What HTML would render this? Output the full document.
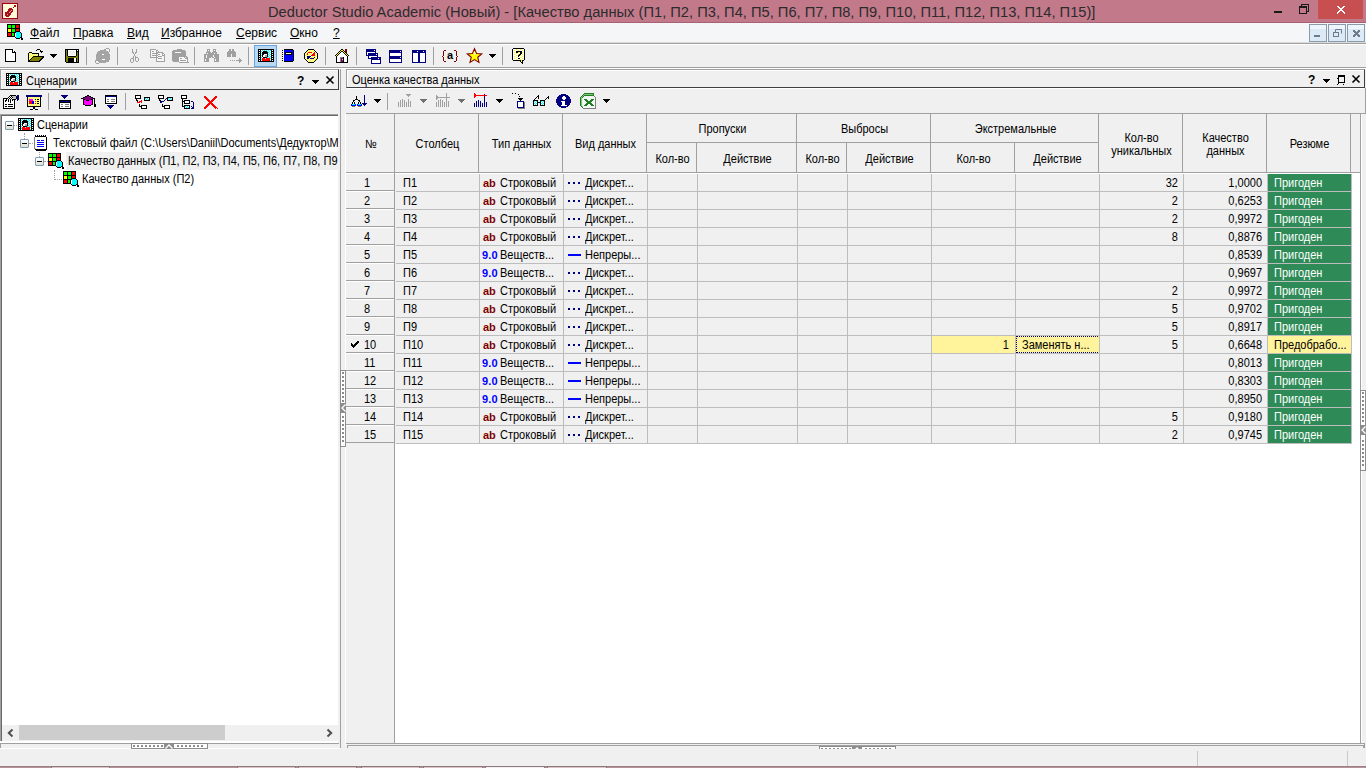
<!DOCTYPE html>
<html><head><meta charset="utf-8"><title>Deductor</title>
<style>
*{margin:0;padding:0;box-sizing:border-box}
html,body{width:1366px;height:768px;overflow:hidden;background:#f0f0f0;font-family:"Liberation Sans", sans-serif;font-size:11px;color:#000}
.a{position:absolute}
.t{position:absolute;white-space:nowrap;line-height:13px;font-size:12px;transform:scaleX(.9167);transform-origin:0 0}
.c{transform-origin:50% 0}
.r{transform-origin:100% 0}
.n{transform:none}
svg{position:absolute;overflow:visible}
</style></head><body>

<div class="a" style="left:0;top:0;width:1366px;height:22px;background:#c27a8b"></div>
<div class="a" style="left:0;top:22px;width:1366px;height:1px;background:#a86174"></div>
<svg style="left:1px;top:2px" width="18" height="18" shape-rendering="crispEdges"><rect x="1" y="1" width="16" height="1" fill="#a00010"/><rect x="1" y="2" width="1" height="1" fill="#a00010"/><rect x="2" y="2" width="14" height="1" fill="#fffbd6"/><rect x="16" y="2" width="1" height="1" fill="#a00010"/><rect x="1" y="3" width="1" height="1" fill="#a00010"/><rect x="2" y="3" width="11" height="1" fill="#fffbd6"/><rect x="13" y="3" width="2" height="1" fill="#a8101c"/><rect x="15" y="3" width="1" height="1" fill="#fffbd6"/><rect x="16" y="3" width="1" height="1" fill="#a00010"/><rect x="1" y="4" width="1" height="1" fill="#a00010"/><rect x="2" y="4" width="11" height="1" fill="#fffbd6"/><rect x="13" y="4" width="2" height="1" fill="#a8101c"/><rect x="15" y="4" width="1" height="1" fill="#fffbd6"/><rect x="16" y="4" width="1" height="1" fill="#a00010"/><rect x="1" y="5" width="1" height="1" fill="#a00010"/><rect x="2" y="5" width="10" height="1" fill="#fffbd6"/><rect x="12" y="5" width="1" height="1" fill="#a8101c"/><rect x="13" y="5" width="3" height="1" fill="#fffbd6"/><rect x="16" y="5" width="1" height="1" fill="#a00010"/><rect x="1" y="6" width="1" height="1" fill="#a00010"/><rect x="2" y="6" width="6" height="1" fill="#fffbd6"/><rect x="8" y="6" width="3" height="1" fill="#a8101c"/><rect x="11" y="6" width="5" height="1" fill="#fffbd6"/><rect x="16" y="6" width="1" height="1" fill="#a00010"/><rect x="1" y="7" width="1" height="1" fill="#a00010"/><rect x="2" y="7" width="5" height="1" fill="#fffbd6"/><rect x="7" y="7" width="5" height="1" fill="#a8101c"/><rect x="12" y="7" width="4" height="1" fill="#fffbd6"/><rect x="16" y="7" width="1" height="1" fill="#a00010"/><rect x="1" y="8" width="1" height="1" fill="#a00010"/><rect x="2" y="8" width="5" height="1" fill="#fffbd6"/><rect x="7" y="8" width="3" height="1" fill="#a8101c"/><rect x="10" y="8" width="1" height="1" fill="#e89898"/><rect x="11" y="8" width="1" height="1" fill="#a8101c"/><rect x="12" y="8" width="4" height="1" fill="#fffbd6"/><rect x="16" y="8" width="1" height="1" fill="#a00010"/><rect x="1" y="9" width="1" height="1" fill="#a00010"/><rect x="2" y="9" width="4" height="1" fill="#fffbd6"/><rect x="6" y="9" width="3" height="1" fill="#a8101c"/><rect x="9" y="9" width="1" height="1" fill="#e89898"/><rect x="10" y="9" width="2" height="1" fill="#a8101c"/><rect x="12" y="9" width="4" height="1" fill="#fffbd6"/><rect x="16" y="9" width="1" height="1" fill="#a00010"/><rect x="1" y="10" width="1" height="1" fill="#a00010"/><rect x="2" y="10" width="2" height="1" fill="#fffbd6"/><rect x="4" y="10" width="4" height="1" fill="#a8101c"/><rect x="8" y="10" width="1" height="1" fill="#e89898"/><rect x="9" y="10" width="2" height="1" fill="#a8101c"/><rect x="11" y="10" width="5" height="1" fill="#fffbd6"/><rect x="16" y="10" width="1" height="1" fill="#a00010"/><rect x="1" y="11" width="1" height="1" fill="#a00010"/><rect x="2" y="11" width="2" height="1" fill="#fffbd6"/><rect x="4" y="11" width="6" height="1" fill="#a8101c"/><rect x="10" y="11" width="6" height="1" fill="#fffbd6"/><rect x="16" y="11" width="1" height="1" fill="#a00010"/><rect x="1" y="12" width="1" height="1" fill="#a00010"/><rect x="2" y="12" width="2" height="1" fill="#fffbd6"/><rect x="4" y="12" width="2" height="1" fill="#a8101c"/><rect x="6" y="12" width="1" height="1" fill="#e89898"/><rect x="7" y="12" width="3" height="1" fill="#a8101c"/><rect x="10" y="12" width="6" height="1" fill="#fffbd6"/><rect x="16" y="12" width="1" height="1" fill="#a00010"/><rect x="1" y="13" width="1" height="1" fill="#a00010"/><rect x="2" y="13" width="2" height="1" fill="#fffbd6"/><rect x="4" y="13" width="5" height="1" fill="#a8101c"/><rect x="9" y="13" width="7" height="1" fill="#fffbd6"/><rect x="16" y="13" width="1" height="1" fill="#a00010"/><rect x="1" y="14" width="1" height="1" fill="#a00010"/><rect x="2" y="14" width="3" height="1" fill="#fffbd6"/><rect x="5" y="14" width="3" height="1" fill="#a8101c"/><rect x="8" y="14" width="8" height="1" fill="#fffbd6"/><rect x="16" y="14" width="1" height="1" fill="#a00010"/><rect x="1" y="15" width="1" height="1" fill="#a00010"/><rect x="2" y="15" width="14" height="1" fill="#fffbd6"/><rect x="16" y="15" width="1" height="1" fill="#a00010"/><rect x="1" y="16" width="16" height="1" fill="#a00010"/></svg>
<div class="t n" style="left:268px;top:4px;font-size:14.7px;line-height:17px;color:#2b2b2b">Deductor Studio Academic (Новый) - [Качество данных (П1, П2, П3, П4, П5, П6, П7, П8, П9, П10, П11, П12, П13, П14, П15)]</div>
<div class="a" style="left:1274px;top:11px;width:8px;height:2px;background:#1a1a1a"></div>
<svg style="left:1299px;top:4px" width="10" height="10" shape-rendering="crispEdges"><rect x="2" y="0" width="8" height="1" fill="#1a1a1a"/><rect x="2" y="1" width="1" height="1" fill="#1a1a1a"/><rect x="9" y="1" width="1" height="1" fill="#1a1a1a"/><rect x="0" y="2" width="8" height="1" fill="#1a1a1a"/><rect x="9" y="2" width="1" height="1" fill="#1a1a1a"/><rect x="0" y="3" width="8" height="1" fill="#1a1a1a"/><rect x="9" y="3" width="1" height="1" fill="#1a1a1a"/><rect x="0" y="4" width="1" height="1" fill="#1a1a1a"/><rect x="7" y="4" width="1" height="1" fill="#1a1a1a"/><rect x="9" y="4" width="1" height="1" fill="#1a1a1a"/><rect x="0" y="5" width="1" height="1" fill="#1a1a1a"/><rect x="7" y="5" width="1" height="1" fill="#1a1a1a"/><rect x="9" y="5" width="1" height="1" fill="#1a1a1a"/><rect x="0" y="6" width="1" height="1" fill="#1a1a1a"/><rect x="7" y="6" width="1" height="1" fill="#1a1a1a"/><rect x="9" y="6" width="1" height="1" fill="#1a1a1a"/><rect x="0" y="7" width="1" height="1" fill="#1a1a1a"/><rect x="7" y="7" width="3" height="1" fill="#1a1a1a"/><rect x="0" y="8" width="1" height="1" fill="#1a1a1a"/><rect x="7" y="8" width="1" height="1" fill="#1a1a1a"/><rect x="0" y="9" width="8" height="1" fill="#1a1a1a"/></svg>
<div class="a" style="left:1318px;top:0;width:45px;height:19px;background:#c74f50"></div>
<svg style="left:1337px;top:6px" width="8" height="8" shape-rendering="crispEdges"><rect x="0" y="0" width="2" height="1" fill="#ffffff"/><rect x="6" y="0" width="2" height="1" fill="#ffffff"/><rect x="1" y="1" width="2" height="1" fill="#ffffff"/><rect x="5" y="1" width="2" height="1" fill="#ffffff"/><rect x="2" y="2" width="4" height="1" fill="#ffffff"/><rect x="3" y="3" width="2" height="1" fill="#ffffff"/><rect x="2" y="4" width="4" height="1" fill="#ffffff"/><rect x="1" y="5" width="2" height="1" fill="#ffffff"/><rect x="5" y="5" width="2" height="1" fill="#ffffff"/><rect x="0" y="6" width="2" height="1" fill="#ffffff"/><rect x="6" y="6" width="2" height="1" fill="#ffffff"/><rect x="0" y="7" width="1" height="1" fill="#ffffff"/><rect x="7" y="7" width="1" height="1" fill="#ffffff"/></svg>
<div class="a" style="left:0;top:23px;width:1366px;height:19px;background:#f5f6f7"></div>
<div class="a" style="left:0;top:42px;width:1366px;height:1px;background:#dcdcdc"></div>
<div class="a" style="left:0;top:43px;width:1366px;height:1px;background:#a0a0a0"></div>
<div class="a" style="left:0;top:44px;width:1366px;height:1px;background:#fff"></div>
<svg style="left:7px;top:24px" width="16" height="16" shape-rendering="crispEdges"><rect x="0" y="0" width="13" height="1" fill="#000"/><rect x="0" y="1" width="1" height="1" fill="#000"/><rect x="1" y="1" width="3" height="1" fill="#00ff00"/><rect x="4" y="1" width="1" height="1" fill="#000"/><rect x="5" y="1" width="3" height="1" fill="#00ff00"/><rect x="8" y="1" width="1" height="1" fill="#000"/><rect x="9" y="1" width="3" height="1" fill="#ff0000"/><rect x="12" y="1" width="1" height="1" fill="#000"/><rect x="0" y="2" width="1" height="1" fill="#000"/><rect x="1" y="2" width="3" height="1" fill="#00ff00"/><rect x="4" y="2" width="1" height="1" fill="#000"/><rect x="5" y="2" width="3" height="1" fill="#00ff00"/><rect x="8" y="2" width="1" height="1" fill="#000"/><rect x="9" y="2" width="3" height="1" fill="#ff0000"/><rect x="12" y="2" width="1" height="1" fill="#000"/><rect x="0" y="3" width="1" height="1" fill="#000"/><rect x="1" y="3" width="3" height="1" fill="#00ff00"/><rect x="4" y="3" width="1" height="1" fill="#000"/><rect x="5" y="3" width="3" height="1" fill="#00ff00"/><rect x="8" y="3" width="1" height="1" fill="#000"/><rect x="9" y="3" width="3" height="1" fill="#ff0000"/><rect x="12" y="3" width="1" height="1" fill="#000"/><rect x="0" y="4" width="13" height="1" fill="#000"/><rect x="0" y="5" width="1" height="1" fill="#000"/><rect x="1" y="5" width="3" height="1" fill="#ffff00"/><rect x="4" y="5" width="1" height="1" fill="#000"/><rect x="5" y="5" width="3" height="1" fill="#00ff00"/><rect x="8" y="5" width="1" height="1" fill="#000"/><rect x="9" y="5" width="3" height="1" fill="#ff0000"/><rect x="12" y="5" width="1" height="1" fill="#000"/><rect x="0" y="6" width="1" height="1" fill="#000"/><rect x="1" y="6" width="3" height="1" fill="#ffff00"/><rect x="4" y="6" width="1" height="1" fill="#000"/><rect x="5" y="6" width="3" height="1" fill="#00ff00"/><rect x="8" y="6" width="1" height="1" fill="#000"/><rect x="9" y="6" width="3" height="1" fill="#ff0000"/><rect x="12" y="6" width="1" height="1" fill="#000"/><rect x="0" y="7" width="1" height="1" fill="#000"/><rect x="1" y="7" width="3" height="1" fill="#ffff00"/><rect x="4" y="7" width="1" height="1" fill="#000"/><rect x="5" y="7" width="3" height="1" fill="#00ff00"/><rect x="8" y="7" width="5" height="1" fill="#000"/><rect x="0" y="8" width="9" height="1" fill="#000"/><rect x="9" y="8" width="4" height="1" fill="#00ffff"/><rect x="13" y="8" width="1" height="1" fill="#000"/><rect x="0" y="9" width="1" height="1" fill="#000"/><rect x="1" y="9" width="3" height="1" fill="#ff0000"/><rect x="4" y="9" width="1" height="1" fill="#000"/><rect x="5" y="9" width="2" height="1" fill="#00ff00"/><rect x="7" y="9" width="1" height="1" fill="#000"/><rect x="8" y="9" width="1" height="1" fill="#fff"/><rect x="9" y="9" width="5" height="1" fill="#00ffff"/><rect x="14" y="9" width="1" height="1" fill="#000"/><rect x="0" y="10" width="1" height="1" fill="#000"/><rect x="1" y="10" width="3" height="1" fill="#ff0000"/><rect x="4" y="10" width="1" height="1" fill="#000"/><rect x="5" y="10" width="2" height="1" fill="#00ff00"/><rect x="7" y="10" width="1" height="1" fill="#000"/><rect x="8" y="10" width="1" height="1" fill="#fff"/><rect x="9" y="10" width="5" height="1" fill="#00ffff"/><rect x="14" y="10" width="1" height="1" fill="#000"/><rect x="0" y="11" width="1" height="1" fill="#000"/><rect x="1" y="11" width="3" height="1" fill="#ff0000"/><rect x="4" y="11" width="1" height="1" fill="#000"/><rect x="5" y="11" width="2" height="1" fill="#00ff00"/><rect x="7" y="11" width="1" height="1" fill="#000"/><rect x="8" y="11" width="1" height="1" fill="#fff"/><rect x="9" y="11" width="5" height="1" fill="#00ffff"/><rect x="14" y="11" width="1" height="1" fill="#000"/><rect x="0" y="12" width="8" height="1" fill="#000"/><rect x="8" y="12" width="1" height="1" fill="#fff"/><rect x="9" y="12" width="5" height="1" fill="#00ffff"/><rect x="14" y="12" width="1" height="1" fill="#000"/><rect x="8" y="13" width="1" height="1" fill="#000"/><rect x="9" y="13" width="4" height="1" fill="#00ffff"/><rect x="13" y="13" width="2" height="1" fill="#000"/><rect x="9" y="14" width="4" height="1" fill="#000"/><rect x="14" y="14" width="2" height="1" fill="#000"/><rect x="14" y="15" width="2" height="1" fill="#000"/></svg>
<div class="t n" style="left:30px;top:26px;font-size:12px;line-height:14px;color:#000"><span style="text-decoration:underline">Ф</span>айл</div>
<div class="t n" style="left:73px;top:26px;font-size:12px;line-height:14px;color:#000"><span style="text-decoration:underline">П</span>равка</div>
<div class="t n" style="left:127px;top:26px;font-size:12px;line-height:14px;color:#000"><span style="text-decoration:underline">В</span>ид</div>
<div class="t n" style="left:161px;top:26px;font-size:12px;line-height:14px;color:#000"><span style="text-decoration:underline">И</span>збранное</div>
<div class="t n" style="left:236px;top:26px;font-size:12px;line-height:14px;color:#000"><span style="text-decoration:underline">С</span>ервис</div>
<div class="t n" style="left:290px;top:26px;font-size:12px;line-height:14px;color:#000"><span style="text-decoration:underline">О</span>кно</div>
<div class="t n" style="left:333px;top:26px;font-size:12px;line-height:14px;color:#000"><span style="text-decoration:underline">?</span></div>
<div class="a" style="left:1309px;top:24px;width:18px;height:18px;border:1px solid #8a9aab;background:linear-gradient(#eef5fc 0,#eef5fc 4px,#dce9f6 4px)"></div>
<div class="a" style="left:1328px;top:24px;width:18px;height:18px;border:1px solid #8a9aab;background:linear-gradient(#eef5fc 0,#eef5fc 4px,#dce9f6 4px)"></div>
<div class="a" style="left:1347px;top:24px;width:18px;height:18px;border:1px solid #8a9aab;background:linear-gradient(#eef5fc 0,#eef5fc 4px,#dce9f6 4px)"></div>
<div class="a" style="left:1314px;top:35px;width:6px;height:2px;background:#6d7b8b"></div>
<svg style="left:1333px;top:29px" width="9" height="8"><rect x="0.5" y="3.5" width="5" height="4" fill="none" stroke="#6d7b8b"/><path d="M2.5 3 V0.5 H8.5 V4.5" fill="none" stroke="#6d7b8b"/></svg>
<svg style="left:1353px;top:30px" width="7" height="7" shape-rendering="crispEdges"><rect x="0" y="0" width="2" height="1" fill="#6d7b8b"/><rect x="5" y="0" width="2" height="1" fill="#6d7b8b"/><rect x="0" y="1" width="3" height="1" fill="#6d7b8b"/><rect x="4" y="1" width="3" height="1" fill="#6d7b8b"/><rect x="1" y="2" width="5" height="1" fill="#6d7b8b"/><rect x="2" y="3" width="3" height="1" fill="#6d7b8b"/><rect x="1" y="4" width="5" height="1" fill="#6d7b8b"/><rect x="0" y="5" width="3" height="1" fill="#6d7b8b"/><rect x="4" y="5" width="3" height="1" fill="#6d7b8b"/><rect x="0" y="6" width="2" height="1" fill="#6d7b8b"/><rect x="5" y="6" width="2" height="1" fill="#6d7b8b"/></svg>
<div class="a" style="left:0;top:67px;width:1366px;height:1px;background:#a0a0a0"></div>
<div class="a" style="left:0;top:68px;width:1366px;height:1px;background:#fff"></div>
<svg style="left:5px;top:49px" width="11" height="13" shape-rendering="crispEdges"><rect x="0" y="0" width="8" height="1" fill="#000"/><rect x="0" y="1" width="1" height="1" fill="#000"/><rect x="1" y="1" width="6" height="1" fill="#fff"/><rect x="7" y="1" width="1" height="1" fill="#000"/><rect x="8" y="1" width="1" height="1" fill="#fff"/><rect x="0" y="2" width="1" height="1" fill="#000"/><rect x="1" y="2" width="6" height="1" fill="#fff"/><rect x="7" y="2" width="1" height="1" fill="#000"/><rect x="8" y="2" width="1" height="1" fill="#fff"/><rect x="9" y="2" width="1" height="1" fill="#000"/><rect x="0" y="3" width="1" height="1" fill="#000"/><rect x="1" y="3" width="6" height="1" fill="#fff"/><rect x="7" y="3" width="4" height="1" fill="#000"/><rect x="0" y="4" width="1" height="1" fill="#000"/><rect x="1" y="4" width="9" height="1" fill="#fff"/><rect x="10" y="4" width="1" height="1" fill="#000"/><rect x="0" y="5" width="1" height="1" fill="#000"/><rect x="1" y="5" width="9" height="1" fill="#fff"/><rect x="10" y="5" width="1" height="1" fill="#000"/><rect x="0" y="6" width="1" height="1" fill="#000"/><rect x="1" y="6" width="9" height="1" fill="#fff"/><rect x="10" y="6" width="1" height="1" fill="#000"/><rect x="0" y="7" width="1" height="1" fill="#000"/><rect x="1" y="7" width="9" height="1" fill="#fff"/><rect x="10" y="7" width="1" height="1" fill="#000"/><rect x="0" y="8" width="1" height="1" fill="#000"/><rect x="1" y="8" width="9" height="1" fill="#fff"/><rect x="10" y="8" width="1" height="1" fill="#000"/><rect x="0" y="9" width="1" height="1" fill="#000"/><rect x="1" y="9" width="9" height="1" fill="#fff"/><rect x="10" y="9" width="1" height="1" fill="#000"/><rect x="0" y="10" width="1" height="1" fill="#000"/><rect x="1" y="10" width="9" height="1" fill="#fff"/><rect x="10" y="10" width="1" height="1" fill="#000"/><rect x="0" y="11" width="1" height="1" fill="#000"/><rect x="1" y="11" width="9" height="1" fill="#fff"/><rect x="10" y="11" width="1" height="1" fill="#000"/><rect x="0" y="12" width="11" height="1" fill="#000"/></svg>
<svg style="left:28px;top:49px" width="16" height="13" shape-rendering="crispEdges"><rect x="9" y="0" width="3" height="1" fill="#000"/><rect x="8" y="1" width="1" height="1" fill="#000"/><rect x="12" y="1" width="1" height="1" fill="#000"/><rect x="12" y="2" width="3" height="1" fill="#000"/><rect x="1" y="3" width="3" height="1" fill="#000"/><rect x="13" y="3" width="1" height="1" fill="#000"/><rect x="0" y="4" width="1" height="1" fill="#000"/><rect x="1" y="4" width="1" height="1" fill="#ffff00"/><rect x="2" y="4" width="1" height="1" fill="#fff"/><rect x="3" y="4" width="1" height="1" fill="#ffff00"/><rect x="4" y="4" width="7" height="1" fill="#000"/><rect x="0" y="5" width="1" height="1" fill="#000"/><rect x="1" y="5" width="1" height="1" fill="#fff"/><rect x="2" y="5" width="1" height="1" fill="#ffff00"/><rect x="3" y="5" width="1" height="1" fill="#fff"/><rect x="4" y="5" width="1" height="1" fill="#ffff00"/><rect x="5" y="5" width="1" height="1" fill="#fff"/><rect x="6" y="5" width="1" height="1" fill="#ffff00"/><rect x="7" y="5" width="1" height="1" fill="#fff"/><rect x="8" y="5" width="1" height="1" fill="#ffff00"/><rect x="9" y="5" width="1" height="1" fill="#fff"/><rect x="10" y="5" width="1" height="1" fill="#000"/><rect x="0" y="6" width="1" height="1" fill="#000"/><rect x="1" y="6" width="1" height="1" fill="#ffff00"/><rect x="2" y="6" width="1" height="1" fill="#fff"/><rect x="3" y="6" width="1" height="1" fill="#ffff00"/><rect x="4" y="6" width="1" height="1" fill="#fff"/><rect x="5" y="6" width="1" height="1" fill="#ffff00"/><rect x="6" y="6" width="1" height="1" fill="#fff"/><rect x="7" y="6" width="1" height="1" fill="#ffff00"/><rect x="8" y="6" width="1" height="1" fill="#fff"/><rect x="9" y="6" width="1" height="1" fill="#ffff00"/><rect x="10" y="6" width="1" height="1" fill="#000"/><rect x="0" y="7" width="1" height="1" fill="#000"/><rect x="1" y="7" width="1" height="1" fill="#fff"/><rect x="2" y="7" width="1" height="1" fill="#ffff00"/><rect x="3" y="7" width="1" height="1" fill="#fff"/><rect x="4" y="7" width="1" height="1" fill="#ffff00"/><rect x="5" y="7" width="11" height="1" fill="#000"/><rect x="0" y="8" width="1" height="1" fill="#000"/><rect x="1" y="8" width="1" height="1" fill="#ffff00"/><rect x="2" y="8" width="1" height="1" fill="#fff"/><rect x="3" y="8" width="1" height="1" fill="#ffff00"/><rect x="4" y="8" width="1" height="1" fill="#000"/><rect x="5" y="8" width="9" height="1" fill="#808000"/><rect x="14" y="8" width="2" height="1" fill="#000"/><rect x="0" y="9" width="1" height="1" fill="#000"/><rect x="1" y="9" width="1" height="1" fill="#fff"/><rect x="2" y="9" width="1" height="1" fill="#ffff00"/><rect x="3" y="9" width="1" height="1" fill="#000"/><rect x="4" y="9" width="9" height="1" fill="#808000"/><rect x="13" y="9" width="2" height="1" fill="#000"/><rect x="0" y="10" width="1" height="1" fill="#000"/><rect x="1" y="10" width="1" height="1" fill="#ffff00"/><rect x="2" y="10" width="1" height="1" fill="#000"/><rect x="3" y="10" width="9" height="1" fill="#808000"/><rect x="12" y="10" width="2" height="1" fill="#000"/><rect x="0" y="11" width="2" height="1" fill="#000"/><rect x="2" y="11" width="9" height="1" fill="#808000"/><rect x="11" y="11" width="2" height="1" fill="#000"/><rect x="0" y="12" width="12" height="1" fill="#000"/></svg>
<svg style="left:50px;top:54px" width="7" height="4" shape-rendering="crispEdges"><rect x="0" y="0" width="7" height="1" fill="#000"/><rect x="1" y="1" width="5" height="1" fill="#000"/><rect x="2" y="2" width="3" height="1" fill="#000"/><rect x="3" y="3" width="1" height="1" fill="#000"/></svg>
<svg style="left:65px;top:49px" width="14" height="14" shape-rendering="crispEdges"><rect x="0" y="0" width="14" height="1" fill="#000"/><rect x="0" y="1" width="1" height="1" fill="#000"/><rect x="1" y="1" width="1" height="1" fill="#808000"/><rect x="2" y="1" width="1" height="1" fill="#000"/><rect x="3" y="1" width="8" height="1" fill="#fff"/><rect x="11" y="1" width="1" height="1" fill="#000"/><rect x="12" y="1" width="1" height="1" fill="#fff"/><rect x="13" y="1" width="1" height="1" fill="#000"/><rect x="0" y="2" width="1" height="1" fill="#000"/><rect x="1" y="2" width="1" height="1" fill="#808000"/><rect x="2" y="2" width="1" height="1" fill="#000"/><rect x="3" y="2" width="1" height="1" fill="#fff"/><rect x="4" y="2" width="6" height="1" fill="#f0f0f0"/><rect x="10" y="2" width="1" height="1" fill="#fff"/><rect x="11" y="2" width="3" height="1" fill="#000"/><rect x="0" y="3" width="1" height="1" fill="#000"/><rect x="1" y="3" width="1" height="1" fill="#808000"/><rect x="2" y="3" width="1" height="1" fill="#000"/><rect x="3" y="3" width="1" height="1" fill="#fff"/><rect x="4" y="3" width="6" height="1" fill="#f0f0f0"/><rect x="10" y="3" width="1" height="1" fill="#fff"/><rect x="11" y="3" width="1" height="1" fill="#000"/><rect x="12" y="3" width="1" height="1" fill="#808000"/><rect x="13" y="3" width="1" height="1" fill="#000"/><rect x="0" y="4" width="1" height="1" fill="#000"/><rect x="1" y="4" width="1" height="1" fill="#808000"/><rect x="2" y="4" width="1" height="1" fill="#000"/><rect x="3" y="4" width="1" height="1" fill="#fff"/><rect x="4" y="4" width="6" height="1" fill="#f0f0f0"/><rect x="10" y="4" width="1" height="1" fill="#fff"/><rect x="11" y="4" width="1" height="1" fill="#000"/><rect x="12" y="4" width="1" height="1" fill="#808000"/><rect x="13" y="4" width="1" height="1" fill="#000"/><rect x="0" y="5" width="1" height="1" fill="#000"/><rect x="1" y="5" width="1" height="1" fill="#808000"/><rect x="2" y="5" width="1" height="1" fill="#000"/><rect x="3" y="5" width="1" height="1" fill="#fff"/><rect x="4" y="5" width="6" height="1" fill="#f0f0f0"/><rect x="10" y="5" width="1" height="1" fill="#fff"/><rect x="11" y="5" width="1" height="1" fill="#000"/><rect x="12" y="5" width="1" height="1" fill="#808000"/><rect x="13" y="5" width="1" height="1" fill="#000"/><rect x="0" y="6" width="1" height="1" fill="#000"/><rect x="1" y="6" width="1" height="1" fill="#808000"/><rect x="2" y="6" width="1" height="1" fill="#000"/><rect x="3" y="6" width="8" height="1" fill="#fff"/><rect x="11" y="6" width="1" height="1" fill="#000"/><rect x="12" y="6" width="1" height="1" fill="#808000"/><rect x="13" y="6" width="1" height="1" fill="#000"/><rect x="0" y="7" width="1" height="1" fill="#000"/><rect x="1" y="7" width="2" height="1" fill="#808000"/><rect x="3" y="7" width="8" height="1" fill="#000"/><rect x="11" y="7" width="2" height="1" fill="#808000"/><rect x="13" y="7" width="1" height="1" fill="#000"/><rect x="0" y="8" width="1" height="1" fill="#000"/><rect x="1" y="8" width="12" height="1" fill="#808000"/><rect x="13" y="8" width="1" height="1" fill="#000"/><rect x="0" y="9" width="1" height="1" fill="#000"/><rect x="1" y="9" width="2" height="1" fill="#808000"/><rect x="3" y="9" width="6" height="1" fill="#000"/><rect x="9" y="9" width="2" height="1" fill="#fff"/><rect x="11" y="9" width="1" height="1" fill="#000"/><rect x="12" y="9" width="1" height="1" fill="#808000"/><rect x="13" y="9" width="1" height="1" fill="#000"/><rect x="0" y="10" width="1" height="1" fill="#000"/><rect x="1" y="10" width="2" height="1" fill="#808000"/><rect x="3" y="10" width="6" height="1" fill="#000"/><rect x="9" y="10" width="2" height="1" fill="#fff"/><rect x="11" y="10" width="1" height="1" fill="#000"/><rect x="12" y="10" width="1" height="1" fill="#808000"/><rect x="13" y="10" width="1" height="1" fill="#000"/><rect x="0" y="11" width="1" height="1" fill="#000"/><rect x="1" y="11" width="2" height="1" fill="#808000"/><rect x="3" y="11" width="6" height="1" fill="#000"/><rect x="9" y="11" width="2" height="1" fill="#fff"/><rect x="11" y="11" width="1" height="1" fill="#000"/><rect x="12" y="11" width="1" height="1" fill="#808000"/><rect x="13" y="11" width="1" height="1" fill="#000"/><rect x="0" y="12" width="1" height="1" fill="#000"/><rect x="1" y="12" width="2" height="1" fill="#808000"/><rect x="3" y="12" width="6" height="1" fill="#000"/><rect x="9" y="12" width="2" height="1" fill="#fff"/><rect x="11" y="12" width="1" height="1" fill="#000"/><rect x="12" y="12" width="1" height="1" fill="#808000"/><rect x="13" y="12" width="1" height="1" fill="#000"/><rect x="1" y="13" width="13" height="1" fill="#000"/></svg>
<div class="a" style="left:86px;top:47px;width:1px;height:18px;background:#a0a0a0"></div>
<svg style="left:92px;top:46px" width="20" height="19" shape-rendering="crispEdges"><rect x="14" y="2" width="3" height="1" fill="#a4a4a4"/><rect x="12" y="3" width="2" height="1" fill="#a4a4a4"/><rect x="17" y="3" width="1" height="1" fill="#a4a4a4"/><rect x="8" y="4" width="6" height="1" fill="#a4a4a4"/><rect x="17" y="4" width="1" height="1" fill="#a4a4a4"/><rect x="6" y="5" width="10" height="1" fill="#a4a4a4"/><rect x="17" y="5" width="1" height="1" fill="#a4a4a4"/><rect x="5" y="6" width="12" height="1" fill="#a4a4a4"/><rect x="5" y="7" width="12" height="1" fill="#a4a4a4"/><rect x="4" y="8" width="6" height="1" fill="#a4a4a4"/><rect x="10" y="8" width="2" height="1" fill="#ffffff"/><rect x="12" y="8" width="6" height="1" fill="#a4a4a4"/><rect x="4" y="9" width="14" height="1" fill="#a4a4a4"/><rect x="4" y="10" width="14" height="1" fill="#a4a4a4"/><rect x="4" y="11" width="14" height="1" fill="#a4a4a4"/><rect x="4" y="12" width="14" height="1" fill="#a4a4a4"/><rect x="4" y="13" width="6" height="1" fill="#a4a4a4"/><rect x="10" y="13" width="3" height="1" fill="#ffffff"/><rect x="13" y="13" width="5" height="1" fill="#a4a4a4"/><rect x="3" y="14" width="14" height="1" fill="#a4a4a4"/><rect x="3" y="15" width="1" height="1" fill="#a4a4a4"/><rect x="6" y="15" width="11" height="1" fill="#a4a4a4"/><rect x="3" y="16" width="1" height="1" fill="#a4a4a4"/><rect x="7" y="16" width="7" height="1" fill="#a4a4a4"/><rect x="4" y="17" width="3" height="1" fill="#a4a4a4"/></svg>
<div class="a" style="left:117px;top:47px;width:1px;height:18px;background:#a0a0a0"></div>
<svg style="left:130px;top:49px" width="10" height="14" shape-rendering="crispEdges"><rect x="2" y="0" width="1" height="1" fill="#a0a0a0"/><rect x="6" y="0" width="1" height="1" fill="#a0a0a0"/><rect x="2" y="1" width="1" height="1" fill="#a0a0a0"/><rect x="6" y="1" width="1" height="1" fill="#a0a0a0"/><rect x="2" y="2" width="1" height="1" fill="#a0a0a0"/><rect x="6" y="2" width="1" height="1" fill="#a0a0a0"/><rect x="2" y="3" width="2" height="1" fill="#a0a0a0"/><rect x="5" y="3" width="2" height="1" fill="#a0a0a0"/><rect x="3" y="4" width="1" height="1" fill="#a0a0a0"/><rect x="5" y="4" width="1" height="1" fill="#a0a0a0"/><rect x="4" y="5" width="1" height="1" fill="#a0a0a0"/><rect x="4" y="6" width="1" height="1" fill="#a0a0a0"/><rect x="3" y="7" width="1" height="1" fill="#a0a0a0"/><rect x="5" y="7" width="1" height="1" fill="#a0a0a0"/><rect x="3" y="8" width="1" height="1" fill="#a0a0a0"/><rect x="5" y="8" width="3" height="1" fill="#a0a0a0"/><rect x="1" y="9" width="3" height="1" fill="#a0a0a0"/><rect x="5" y="9" width="1" height="1" fill="#a0a0a0"/><rect x="8" y="9" width="1" height="1" fill="#a0a0a0"/><rect x="0" y="10" width="1" height="1" fill="#a0a0a0"/><rect x="3" y="10" width="1" height="1" fill="#a0a0a0"/><rect x="5" y="10" width="1" height="1" fill="#a0a0a0"/><rect x="8" y="10" width="1" height="1" fill="#a0a0a0"/><rect x="0" y="11" width="1" height="1" fill="#a0a0a0"/><rect x="3" y="11" width="1" height="1" fill="#a0a0a0"/><rect x="5" y="11" width="1" height="1" fill="#a0a0a0"/><rect x="8" y="11" width="1" height="1" fill="#a0a0a0"/><rect x="0" y="12" width="1" height="1" fill="#a0a0a0"/><rect x="3" y="12" width="1" height="1" fill="#a0a0a0"/><rect x="6" y="12" width="2" height="1" fill="#a0a0a0"/><rect x="1" y="13" width="2" height="1" fill="#a0a0a0"/></svg>
<svg style="left:150px;top:49px" width="15" height="13" shape-rendering="crispEdges"><rect x="0" y="0" width="6" height="1" fill="#a0a0a0"/><rect x="0" y="1" width="1" height="1" fill="#a0a0a0"/><rect x="1" y="1" width="5" height="1" fill="#f8f8f8"/><rect x="6" y="1" width="2" height="1" fill="#a0a0a0"/><rect x="0" y="2" width="1" height="1" fill="#a0a0a0"/><rect x="1" y="2" width="1" height="1" fill="#f8f8f8"/><rect x="2" y="2" width="2" height="1" fill="#a0a0a0"/><rect x="4" y="2" width="2" height="1" fill="#f8f8f8"/><rect x="6" y="2" width="1" height="1" fill="#a0a0a0"/><rect x="7" y="2" width="1" height="1" fill="#f8f8f8"/><rect x="8" y="2" width="1" height="1" fill="#a0a0a0"/><rect x="0" y="3" width="1" height="1" fill="#a0a0a0"/><rect x="1" y="3" width="5" height="1" fill="#f8f8f8"/><rect x="6" y="3" width="7" height="1" fill="#a0a0a0"/><rect x="0" y="4" width="1" height="1" fill="#a0a0a0"/><rect x="1" y="4" width="1" height="1" fill="#f8f8f8"/><rect x="2" y="4" width="6" height="1" fill="#a0a0a0"/><rect x="8" y="4" width="4" height="1" fill="#f8f8f8"/><rect x="12" y="4" width="2" height="1" fill="#a0a0a0"/><rect x="0" y="5" width="1" height="1" fill="#a0a0a0"/><rect x="1" y="5" width="5" height="1" fill="#f8f8f8"/><rect x="6" y="5" width="1" height="1" fill="#a0a0a0"/><rect x="7" y="5" width="1" height="1" fill="#f8f8f8"/><rect x="8" y="5" width="2" height="1" fill="#a0a0a0"/><rect x="10" y="5" width="2" height="1" fill="#f8f8f8"/><rect x="12" y="5" width="1" height="1" fill="#a0a0a0"/><rect x="13" y="5" width="1" height="1" fill="#f8f8f8"/><rect x="14" y="5" width="1" height="1" fill="#a0a0a0"/><rect x="0" y="6" width="1" height="1" fill="#a0a0a0"/><rect x="1" y="6" width="1" height="1" fill="#f8f8f8"/><rect x="2" y="6" width="6" height="1" fill="#a0a0a0"/><rect x="8" y="6" width="4" height="1" fill="#f8f8f8"/><rect x="12" y="6" width="3" height="1" fill="#a0a0a0"/><rect x="0" y="7" width="1" height="1" fill="#a0a0a0"/><rect x="1" y="7" width="5" height="1" fill="#f8f8f8"/><rect x="6" y="7" width="1" height="1" fill="#a0a0a0"/><rect x="7" y="7" width="1" height="1" fill="#f8f8f8"/><rect x="8" y="7" width="4" height="1" fill="#a0a0a0"/><rect x="12" y="7" width="2" height="1" fill="#f8f8f8"/><rect x="14" y="7" width="1" height="1" fill="#a0a0a0"/><rect x="0" y="8" width="8" height="1" fill="#a0a0a0"/><rect x="8" y="8" width="6" height="1" fill="#f8f8f8"/><rect x="14" y="8" width="1" height="1" fill="#a0a0a0"/><rect x="6" y="9" width="1" height="1" fill="#a0a0a0"/><rect x="7" y="9" width="1" height="1" fill="#f8f8f8"/><rect x="8" y="9" width="4" height="1" fill="#a0a0a0"/><rect x="12" y="9" width="2" height="1" fill="#f8f8f8"/><rect x="14" y="9" width="1" height="1" fill="#a0a0a0"/><rect x="6" y="10" width="1" height="1" fill="#a0a0a0"/><rect x="7" y="10" width="7" height="1" fill="#f8f8f8"/><rect x="14" y="10" width="1" height="1" fill="#a0a0a0"/><rect x="6" y="11" width="1" height="1" fill="#a0a0a0"/><rect x="7" y="11" width="7" height="1" fill="#f8f8f8"/><rect x="14" y="11" width="1" height="1" fill="#a0a0a0"/><rect x="6" y="12" width="9" height="1" fill="#a0a0a0"/></svg>
<svg style="left:172px;top:49px" width="16" height="14" shape-rendering="crispEdges"><rect x="5" y="0" width="5" height="1" fill="#a0a0a0"/><rect x="1" y="1" width="12" height="1" fill="#a0a0a0"/><rect x="0" y="2" width="14" height="1" fill="#a0a0a0"/><rect x="0" y="3" width="3" height="1" fill="#a0a0a0"/><rect x="3" y="3" width="6" height="1" fill="#f8f8f8"/><rect x="9" y="3" width="5" height="1" fill="#a0a0a0"/><rect x="0" y="4" width="14" height="1" fill="#a0a0a0"/><rect x="0" y="5" width="14" height="1" fill="#a0a0a0"/><rect x="0" y="6" width="14" height="1" fill="#a0a0a0"/><rect x="0" y="7" width="15" height="1" fill="#a0a0a0"/><rect x="0" y="8" width="7" height="1" fill="#a0a0a0"/><rect x="7" y="8" width="5" height="1" fill="#f8f8f8"/><rect x="12" y="8" width="1" height="1" fill="#a0a0a0"/><rect x="13" y="8" width="1" height="1" fill="#f8f8f8"/><rect x="14" y="8" width="2" height="1" fill="#a0a0a0"/><rect x="0" y="9" width="7" height="1" fill="#a0a0a0"/><rect x="7" y="9" width="1" height="1" fill="#f8f8f8"/><rect x="8" y="9" width="2" height="1" fill="#a0a0a0"/><rect x="10" y="9" width="3" height="1" fill="#f8f8f8"/><rect x="13" y="9" width="3" height="1" fill="#a0a0a0"/><rect x="0" y="10" width="7" height="1" fill="#a0a0a0"/><rect x="7" y="10" width="8" height="1" fill="#f8f8f8"/><rect x="15" y="10" width="1" height="1" fill="#a0a0a0"/><rect x="0" y="11" width="7" height="1" fill="#a0a0a0"/><rect x="7" y="11" width="1" height="1" fill="#f8f8f8"/><rect x="8" y="11" width="6" height="1" fill="#a0a0a0"/><rect x="14" y="11" width="1" height="1" fill="#f8f8f8"/><rect x="15" y="11" width="1" height="1" fill="#a0a0a0"/><rect x="1" y="12" width="6" height="1" fill="#a0a0a0"/><rect x="7" y="12" width="8" height="1" fill="#f8f8f8"/><rect x="15" y="12" width="1" height="1" fill="#a0a0a0"/><rect x="7" y="13" width="10" height="1" fill="#a0a0a0"/></svg>
<div class="a" style="left:194px;top:47px;width:1px;height:18px;background:#a0a0a0"></div>
<svg style="left:204px;top:49px" width="15" height="13" shape-rendering="crispEdges"><rect x="3" y="0" width="3" height="1" fill="#a0a0a0"/><rect x="9" y="0" width="3" height="1" fill="#a0a0a0"/><rect x="3" y="1" width="1" height="1" fill="#a0a0a0"/><rect x="4" y="1" width="1" height="1" fill="#f8f8f8"/><rect x="5" y="1" width="1" height="1" fill="#a0a0a0"/><rect x="9" y="1" width="1" height="1" fill="#a0a0a0"/><rect x="10" y="1" width="1" height="1" fill="#f8f8f8"/><rect x="11" y="1" width="1" height="1" fill="#a0a0a0"/><rect x="3" y="2" width="3" height="1" fill="#a0a0a0"/><rect x="9" y="2" width="3" height="1" fill="#a0a0a0"/><rect x="2" y="3" width="5" height="1" fill="#a0a0a0"/><rect x="8" y="3" width="5" height="1" fill="#a0a0a0"/><rect x="2" y="4" width="1" height="1" fill="#a0a0a0"/><rect x="3" y="4" width="1" height="1" fill="#f8f8f8"/><rect x="4" y="4" width="6" height="1" fill="#a0a0a0"/><rect x="10" y="4" width="1" height="1" fill="#f8f8f8"/><rect x="11" y="4" width="2" height="1" fill="#a0a0a0"/><rect x="0" y="5" width="15" height="1" fill="#a0a0a0"/><rect x="0" y="6" width="2" height="1" fill="#a0a0a0"/><rect x="2" y="6" width="1" height="1" fill="#f8f8f8"/><rect x="3" y="6" width="6" height="1" fill="#a0a0a0"/><rect x="9" y="6" width="1" height="1" fill="#f8f8f8"/><rect x="10" y="6" width="5" height="1" fill="#a0a0a0"/><rect x="0" y="7" width="2" height="1" fill="#a0a0a0"/><rect x="2" y="7" width="1" height="1" fill="#f8f8f8"/><rect x="3" y="7" width="6" height="1" fill="#a0a0a0"/><rect x="9" y="7" width="1" height="1" fill="#f8f8f8"/><rect x="10" y="7" width="5" height="1" fill="#a0a0a0"/><rect x="0" y="8" width="2" height="1" fill="#a0a0a0"/><rect x="2" y="8" width="1" height="1" fill="#f8f8f8"/><rect x="3" y="8" width="4" height="1" fill="#a0a0a0"/><rect x="8" y="8" width="2" height="1" fill="#a0a0a0"/><rect x="10" y="8" width="1" height="1" fill="#f8f8f8"/><rect x="11" y="8" width="4" height="1" fill="#a0a0a0"/><rect x="0" y="9" width="5" height="1" fill="#a0a0a0"/><rect x="10" y="9" width="5" height="1" fill="#a0a0a0"/><rect x="0" y="10" width="1" height="1" fill="#a0a0a0"/><rect x="1" y="10" width="1" height="1" fill="#f8f8f8"/><rect x="2" y="10" width="3" height="1" fill="#a0a0a0"/><rect x="10" y="10" width="1" height="1" fill="#a0a0a0"/><rect x="11" y="10" width="1" height="1" fill="#f8f8f8"/><rect x="12" y="10" width="3" height="1" fill="#a0a0a0"/><rect x="0" y="11" width="1" height="1" fill="#a0a0a0"/><rect x="1" y="11" width="1" height="1" fill="#f8f8f8"/><rect x="2" y="11" width="3" height="1" fill="#a0a0a0"/><rect x="10" y="11" width="1" height="1" fill="#a0a0a0"/><rect x="11" y="11" width="1" height="1" fill="#f8f8f8"/><rect x="12" y="11" width="3" height="1" fill="#a0a0a0"/><rect x="0" y="12" width="5" height="1" fill="#a0a0a0"/><rect x="10" y="12" width="5" height="1" fill="#a0a0a0"/></svg>
<svg style="left:227px;top:49px" width="15" height="14" shape-rendering="crispEdges"><rect x="2" y="0" width="2" height="1" fill="#a0a0a0"/><rect x="5" y="0" width="2" height="1" fill="#a0a0a0"/><rect x="2" y="1" width="2" height="1" fill="#a0a0a0"/><rect x="5" y="1" width="2" height="1" fill="#a0a0a0"/><rect x="1" y="2" width="7" height="1" fill="#a0a0a0"/><rect x="0" y="3" width="9" height="1" fill="#a0a0a0"/><rect x="0" y="4" width="9" height="1" fill="#a0a0a0"/><rect x="0" y="5" width="4" height="1" fill="#a0a0a0"/><rect x="5" y="5" width="4" height="1" fill="#a0a0a0"/><rect x="0" y="6" width="4" height="1" fill="#a0a0a0"/><rect x="5" y="6" width="4" height="1" fill="#a0a0a0"/><rect x="0" y="7" width="4" height="1" fill="#a0a0a0"/><rect x="5" y="7" width="4" height="1" fill="#a0a0a0"/><rect x="12" y="9" width="1" height="1" fill="#a0a0a0"/><rect x="12" y="10" width="2" height="1" fill="#a0a0a0"/><rect x="3" y="11" width="1" height="1" fill="#a0a0a0"/><rect x="5" y="11" width="1" height="1" fill="#a0a0a0"/><rect x="7" y="11" width="1" height="1" fill="#a0a0a0"/><rect x="9" y="11" width="6" height="1" fill="#a0a0a0"/><rect x="12" y="12" width="2" height="1" fill="#a0a0a0"/><rect x="12" y="13" width="1" height="1" fill="#a0a0a0"/></svg>
<div class="a" style="left:248px;top:47px;width:1px;height:18px;background:#a0a0a0"></div>
<div class="a" style="left:254px;top:45px;width:23px;height:22px;background:#b8d8f2;border:1px solid #66a4e2"></div>
<svg style="left:258px;top:49px" width="16" height="13" shape-rendering="crispEdges"><rect x="0" y="0" width="16" height="1" fill="#000"/><rect x="0" y="1" width="1" height="1" fill="#000"/><rect x="1" y="1" width="1" height="1" fill="#fff"/><rect x="2" y="1" width="1" height="1" fill="#000"/><rect x="3" y="1" width="1" height="1" fill="#fff"/><rect x="4" y="1" width="1" height="1" fill="#00ffff"/><rect x="5" y="1" width="1" height="1" fill="#fff"/><rect x="6" y="1" width="1" height="1" fill="#00ffff"/><rect x="7" y="1" width="1" height="1" fill="#fff"/><rect x="8" y="1" width="1" height="1" fill="#00ffff"/><rect x="9" y="1" width="1" height="1" fill="#fff"/><rect x="10" y="1" width="1" height="1" fill="#00ffff"/><rect x="11" y="1" width="1" height="1" fill="#fff"/><rect x="12" y="1" width="1" height="1" fill="#00ffff"/><rect x="13" y="1" width="1" height="1" fill="#000"/><rect x="14" y="1" width="1" height="1" fill="#fff"/><rect x="15" y="1" width="1" height="1" fill="#000"/><rect x="0" y="2" width="3" height="1" fill="#000"/><rect x="3" y="2" width="1" height="1" fill="#00ffff"/><rect x="4" y="2" width="1" height="1" fill="#fff"/><rect x="5" y="2" width="4" height="1" fill="#000"/><rect x="9" y="2" width="1" height="1" fill="#00ffff"/><rect x="10" y="2" width="1" height="1" fill="#fff"/><rect x="11" y="2" width="1" height="1" fill="#00ffff"/><rect x="12" y="2" width="1" height="1" fill="#fff"/><rect x="13" y="2" width="3" height="1" fill="#000"/><rect x="0" y="3" width="1" height="1" fill="#000"/><rect x="1" y="3" width="1" height="1" fill="#fff"/><rect x="2" y="3" width="1" height="1" fill="#000"/><rect x="3" y="3" width="1" height="1" fill="#fff"/><rect x="4" y="3" width="6" height="1" fill="#000"/><rect x="10" y="3" width="1" height="1" fill="#00ffff"/><rect x="11" y="3" width="1" height="1" fill="#fff"/><rect x="12" y="3" width="1" height="1" fill="#00ffff"/><rect x="13" y="3" width="1" height="1" fill="#000"/><rect x="14" y="3" width="1" height="1" fill="#fff"/><rect x="15" y="3" width="1" height="1" fill="#000"/><rect x="0" y="4" width="3" height="1" fill="#000"/><rect x="3" y="4" width="1" height="1" fill="#00ffff"/><rect x="4" y="4" width="6" height="1" fill="#000"/><rect x="10" y="4" width="1" height="1" fill="#fff"/><rect x="11" y="4" width="1" height="1" fill="#00ffff"/><rect x="12" y="4" width="1" height="1" fill="#fff"/><rect x="13" y="4" width="3" height="1" fill="#000"/><rect x="0" y="5" width="1" height="1" fill="#000"/><rect x="1" y="5" width="1" height="1" fill="#fff"/><rect x="2" y="5" width="1" height="1" fill="#000"/><rect x="3" y="5" width="1" height="1" fill="#fff"/><rect x="4" y="5" width="2" height="1" fill="#000"/><rect x="6" y="5" width="3" height="1" fill="#fff"/><rect x="9" y="5" width="1" height="1" fill="#000"/><rect x="10" y="5" width="1" height="1" fill="#00ffff"/><rect x="11" y="5" width="1" height="1" fill="#fff"/><rect x="12" y="5" width="1" height="1" fill="#00ffff"/><rect x="13" y="5" width="1" height="1" fill="#000"/><rect x="14" y="5" width="1" height="1" fill="#fff"/><rect x="15" y="5" width="1" height="1" fill="#000"/><rect x="0" y="6" width="3" height="1" fill="#000"/><rect x="3" y="6" width="1" height="1" fill="#00ffff"/><rect x="4" y="6" width="1" height="1" fill="#000"/><rect x="5" y="6" width="2" height="1" fill="#fff"/><rect x="7" y="6" width="2" height="1" fill="#a8a8a8"/><rect x="9" y="6" width="1" height="1" fill="#000"/><rect x="10" y="6" width="1" height="1" fill="#fff"/><rect x="11" y="6" width="1" height="1" fill="#00ffff"/><rect x="12" y="6" width="1" height="1" fill="#fff"/><rect x="13" y="6" width="3" height="1" fill="#000"/><rect x="0" y="7" width="1" height="1" fill="#000"/><rect x="1" y="7" width="1" height="1" fill="#fff"/><rect x="2" y="7" width="1" height="1" fill="#000"/><rect x="3" y="7" width="1" height="1" fill="#fff"/><rect x="4" y="7" width="1" height="1" fill="#000"/><rect x="5" y="7" width="2" height="1" fill="#fff"/><rect x="7" y="7" width="2" height="1" fill="#a8a8a8"/><rect x="9" y="7" width="1" height="1" fill="#000"/><rect x="10" y="7" width="1" height="1" fill="#00ffff"/><rect x="11" y="7" width="1" height="1" fill="#fff"/><rect x="12" y="7" width="1" height="1" fill="#00ffff"/><rect x="13" y="7" width="1" height="1" fill="#000"/><rect x="14" y="7" width="1" height="1" fill="#fff"/><rect x="15" y="7" width="1" height="1" fill="#000"/><rect x="0" y="8" width="3" height="1" fill="#000"/><rect x="3" y="8" width="1" height="1" fill="#00ffff"/><rect x="4" y="8" width="1" height="1" fill="#fff"/><rect x="5" y="8" width="4" height="1" fill="#000"/><rect x="9" y="8" width="1" height="1" fill="#00ffff"/><rect x="10" y="8" width="1" height="1" fill="#fff"/><rect x="11" y="8" width="1" height="1" fill="#00ffff"/><rect x="12" y="8" width="1" height="1" fill="#fff"/><rect x="13" y="8" width="3" height="1" fill="#000"/><rect x="0" y="9" width="1" height="1" fill="#000"/><rect x="1" y="9" width="1" height="1" fill="#fff"/><rect x="2" y="9" width="1" height="1" fill="#000"/><rect x="3" y="9" width="1" height="1" fill="#fff"/><rect x="4" y="9" width="3" height="1" fill="#ff0000"/><rect x="7" y="9" width="1" height="1" fill="#fff"/><rect x="8" y="9" width="4" height="1" fill="#ff0000"/><rect x="12" y="9" width="1" height="1" fill="#00ffff"/><rect x="13" y="9" width="1" height="1" fill="#000"/><rect x="14" y="9" width="1" height="1" fill="#fff"/><rect x="15" y="9" width="1" height="1" fill="#000"/><rect x="0" y="10" width="3" height="1" fill="#000"/><rect x="3" y="10" width="1" height="1" fill="#00ffff"/><rect x="4" y="10" width="8" height="1" fill="#ff0000"/><rect x="12" y="10" width="1" height="1" fill="#fff"/><rect x="13" y="10" width="3" height="1" fill="#000"/><rect x="0" y="11" width="1" height="1" fill="#000"/><rect x="1" y="11" width="1" height="1" fill="#fff"/><rect x="2" y="11" width="1" height="1" fill="#000"/><rect x="3" y="11" width="1" height="1" fill="#fff"/><rect x="4" y="11" width="8" height="1" fill="#ff0000"/><rect x="12" y="11" width="1" height="1" fill="#00ffff"/><rect x="13" y="11" width="1" height="1" fill="#000"/><rect x="14" y="11" width="1" height="1" fill="#fff"/><rect x="15" y="11" width="1" height="1" fill="#000"/><rect x="0" y="12" width="16" height="1" fill="#000"/></svg>
<svg style="left:282px;top:49px" width="12" height="13" shape-rendering="crispEdges"><rect x="1" y="0" width="1" height="1" fill="#f8f8f0"/><rect x="2" y="0" width="9" height="1" fill="#000"/><rect x="0" y="1" width="1" height="1" fill="#000"/><rect x="1" y="1" width="1" height="1" fill="#f8f8f0"/><rect x="2" y="1" width="9" height="1" fill="#0000ff"/><rect x="11" y="1" width="1" height="1" fill="#000"/><rect x="1" y="2" width="1" height="1" fill="#f8f8f0"/><rect x="2" y="2" width="9" height="1" fill="#0000ff"/><rect x="11" y="2" width="1" height="1" fill="#000"/><rect x="0" y="3" width="1" height="1" fill="#000"/><rect x="1" y="3" width="1" height="1" fill="#f8f8f0"/><rect x="2" y="3" width="1" height="1" fill="#0000ff"/><rect x="3" y="3" width="7" height="1" fill="#000"/><rect x="10" y="3" width="1" height="1" fill="#0000ff"/><rect x="11" y="3" width="1" height="1" fill="#000"/><rect x="1" y="4" width="1" height="1" fill="#f8f8f0"/><rect x="2" y="4" width="1" height="1" fill="#0000ff"/><rect x="3" y="4" width="1" height="1" fill="#000"/><rect x="4" y="4" width="5" height="1" fill="#f8f8f0"/><rect x="9" y="4" width="1" height="1" fill="#000"/><rect x="10" y="4" width="1" height="1" fill="#0000ff"/><rect x="11" y="4" width="1" height="1" fill="#000"/><rect x="0" y="5" width="1" height="1" fill="#000"/><rect x="1" y="5" width="1" height="1" fill="#f8f8f0"/><rect x="2" y="5" width="1" height="1" fill="#0000ff"/><rect x="3" y="5" width="7" height="1" fill="#000"/><rect x="10" y="5" width="1" height="1" fill="#0000ff"/><rect x="11" y="5" width="1" height="1" fill="#000"/><rect x="1" y="6" width="1" height="1" fill="#f8f8f0"/><rect x="2" y="6" width="9" height="1" fill="#0000ff"/><rect x="11" y="6" width="1" height="1" fill="#000"/><rect x="0" y="7" width="1" height="1" fill="#000"/><rect x="1" y="7" width="1" height="1" fill="#f8f8f0"/><rect x="2" y="7" width="9" height="1" fill="#0000ff"/><rect x="11" y="7" width="1" height="1" fill="#000"/><rect x="1" y="8" width="1" height="1" fill="#f8f8f0"/><rect x="2" y="8" width="9" height="1" fill="#0000ff"/><rect x="11" y="8" width="1" height="1" fill="#000"/><rect x="0" y="9" width="1" height="1" fill="#000"/><rect x="1" y="9" width="1" height="1" fill="#f8f8f0"/><rect x="2" y="9" width="9" height="1" fill="#0000ff"/><rect x="11" y="9" width="1" height="1" fill="#000"/><rect x="1" y="10" width="1" height="1" fill="#f8f8f0"/><rect x="2" y="10" width="9" height="1" fill="#0000ff"/><rect x="11" y="10" width="1" height="1" fill="#000"/><rect x="0" y="11" width="1" height="1" fill="#000"/><rect x="1" y="11" width="1" height="1" fill="#f8f8f0"/><rect x="2" y="11" width="9" height="1" fill="#0000ff"/><rect x="11" y="11" width="1" height="1" fill="#000"/><rect x="1" y="12" width="1" height="1" fill="#f8f8f0"/><rect x="2" y="12" width="9" height="1" fill="#000"/></svg>
<svg style="left:304px;top:49px" width="14" height="14" shape-rendering="crispEdges"><rect x="4" y="0" width="6" height="1" fill="#000"/><rect x="3" y="1" width="1" height="1" fill="#000"/><rect x="4" y="1" width="1" height="1" fill="#ffff00"/><rect x="5" y="1" width="1" height="1" fill="#fff"/><rect x="6" y="1" width="1" height="1" fill="#ffff00"/><rect x="7" y="1" width="1" height="1" fill="#fff"/><rect x="8" y="1" width="1" height="1" fill="#ffff00"/><rect x="9" y="1" width="1" height="1" fill="#fff"/><rect x="10" y="1" width="1" height="1" fill="#000"/><rect x="2" y="2" width="1" height="1" fill="#000"/><rect x="3" y="2" width="1" height="1" fill="#ffff00"/><rect x="4" y="2" width="1" height="1" fill="#fff"/><rect x="5" y="2" width="1" height="1" fill="#ffff00"/><rect x="6" y="2" width="1" height="1" fill="#fff"/><rect x="7" y="2" width="1" height="1" fill="#ffff00"/><rect x="8" y="2" width="1" height="1" fill="#fff"/><rect x="9" y="2" width="1" height="1" fill="#ffff00"/><rect x="10" y="2" width="1" height="1" fill="#fff"/><rect x="11" y="2" width="1" height="1" fill="#000"/><rect x="1" y="3" width="1" height="1" fill="#000"/><rect x="2" y="3" width="1" height="1" fill="#ffff00"/><rect x="3" y="3" width="1" height="1" fill="#fff"/><rect x="4" y="3" width="4" height="1" fill="#ff0000"/><rect x="8" y="3" width="1" height="1" fill="#ffff00"/><rect x="9" y="3" width="1" height="1" fill="#fff"/><rect x="10" y="3" width="1" height="1" fill="#ff0000"/><rect x="11" y="3" width="1" height="1" fill="#fff"/><rect x="12" y="3" width="1" height="1" fill="#000"/><rect x="0" y="4" width="1" height="1" fill="#000"/><rect x="1" y="4" width="1" height="1" fill="#ffff00"/><rect x="2" y="4" width="1" height="1" fill="#fff"/><rect x="3" y="4" width="1" height="1" fill="#ff0000"/><rect x="4" y="4" width="1" height="1" fill="#fff"/><rect x="5" y="4" width="1" height="1" fill="#ffff00"/><rect x="6" y="4" width="1" height="1" fill="#fff"/><rect x="7" y="4" width="1" height="1" fill="#ffff00"/><rect x="8" y="4" width="1" height="1" fill="#fff"/><rect x="9" y="4" width="2" height="1" fill="#ff0000"/><rect x="11" y="4" width="1" height="1" fill="#ffff00"/><rect x="12" y="4" width="1" height="1" fill="#fff"/><rect x="13" y="4" width="1" height="1" fill="#000"/><rect x="0" y="5" width="1" height="1" fill="#000"/><rect x="1" y="5" width="1" height="1" fill="#fff"/><rect x="2" y="5" width="1" height="1" fill="#ffff00"/><rect x="3" y="5" width="1" height="1" fill="#ff0000"/><rect x="4" y="5" width="1" height="1" fill="#ffff00"/><rect x="5" y="5" width="1" height="1" fill="#fff"/><rect x="6" y="5" width="1" height="1" fill="#ffff00"/><rect x="7" y="5" width="1" height="1" fill="#fff"/><rect x="8" y="5" width="3" height="1" fill="#ff0000"/><rect x="11" y="5" width="1" height="1" fill="#fff"/><rect x="12" y="5" width="1" height="1" fill="#ffff00"/><rect x="13" y="5" width="1" height="1" fill="#000"/><rect x="0" y="6" width="1" height="1" fill="#000"/><rect x="1" y="6" width="1" height="1" fill="#ffff00"/><rect x="2" y="6" width="1" height="1" fill="#fff"/><rect x="3" y="6" width="1" height="1" fill="#ffff00"/><rect x="4" y="6" width="1" height="1" fill="#fff"/><rect x="5" y="6" width="1" height="1" fill="#ffff00"/><rect x="6" y="6" width="1" height="1" fill="#fff"/><rect x="7" y="6" width="4" height="1" fill="#ff0000"/><rect x="11" y="6" width="1" height="1" fill="#ffff00"/><rect x="12" y="6" width="1" height="1" fill="#fff"/><rect x="13" y="6" width="1" height="1" fill="#000"/><rect x="0" y="7" width="1" height="1" fill="#000"/><rect x="1" y="7" width="1" height="1" fill="#fff"/><rect x="2" y="7" width="1" height="1" fill="#ffff00"/><rect x="3" y="7" width="4" height="1" fill="#000080"/><rect x="7" y="7" width="1" height="1" fill="#fff"/><rect x="8" y="7" width="1" height="1" fill="#ffff00"/><rect x="9" y="7" width="1" height="1" fill="#fff"/><rect x="10" y="7" width="1" height="1" fill="#ffff00"/><rect x="11" y="7" width="1" height="1" fill="#fff"/><rect x="12" y="7" width="1" height="1" fill="#ffff00"/><rect x="13" y="7" width="1" height="1" fill="#000"/><rect x="0" y="8" width="1" height="1" fill="#000"/><rect x="1" y="8" width="1" height="1" fill="#ffff00"/><rect x="2" y="8" width="1" height="1" fill="#fff"/><rect x="3" y="8" width="3" height="1" fill="#000080"/><rect x="6" y="8" width="1" height="1" fill="#fff"/><rect x="7" y="8" width="1" height="1" fill="#ffff00"/><rect x="8" y="8" width="1" height="1" fill="#fff"/><rect x="9" y="8" width="1" height="1" fill="#ffff00"/><rect x="10" y="8" width="1" height="1" fill="#000080"/><rect x="11" y="8" width="1" height="1" fill="#ffff00"/><rect x="12" y="8" width="1" height="1" fill="#fff"/><rect x="13" y="8" width="1" height="1" fill="#000"/><rect x="0" y="9" width="1" height="1" fill="#000"/><rect x="1" y="9" width="1" height="1" fill="#fff"/><rect x="2" y="9" width="1" height="1" fill="#ffff00"/><rect x="3" y="9" width="2" height="1" fill="#000080"/><rect x="5" y="9" width="1" height="1" fill="#fff"/><rect x="6" y="9" width="4" height="1" fill="#000080"/><rect x="10" y="9" width="1" height="1" fill="#ffff00"/><rect x="11" y="9" width="1" height="1" fill="#fff"/><rect x="12" y="9" width="1" height="1" fill="#ffff00"/><rect x="13" y="9" width="1" height="1" fill="#000"/><rect x="1" y="10" width="1" height="1" fill="#000"/><rect x="2" y="10" width="1" height="1" fill="#fff"/><rect x="3" y="10" width="1" height="1" fill="#ffff00"/><rect x="4" y="10" width="1" height="1" fill="#fff"/><rect x="5" y="10" width="1" height="1" fill="#ffff00"/><rect x="6" y="10" width="1" height="1" fill="#fff"/><rect x="7" y="10" width="1" height="1" fill="#ffff00"/><rect x="8" y="10" width="1" height="1" fill="#fff"/><rect x="9" y="10" width="1" height="1" fill="#ffff00"/><rect x="10" y="10" width="1" height="1" fill="#fff"/><rect x="11" y="10" width="1" height="1" fill="#ffff00"/><rect x="12" y="10" width="1" height="1" fill="#000"/><rect x="2" y="11" width="1" height="1" fill="#000"/><rect x="3" y="11" width="1" height="1" fill="#fff"/><rect x="4" y="11" width="1" height="1" fill="#ffff00"/><rect x="5" y="11" width="1" height="1" fill="#fff"/><rect x="6" y="11" width="1" height="1" fill="#ffff00"/><rect x="7" y="11" width="1" height="1" fill="#fff"/><rect x="8" y="11" width="1" height="1" fill="#ffff00"/><rect x="9" y="11" width="1" height="1" fill="#fff"/><rect x="10" y="11" width="1" height="1" fill="#ffff00"/><rect x="11" y="11" width="1" height="1" fill="#000"/><rect x="3" y="12" width="1" height="1" fill="#000"/><rect x="4" y="12" width="1" height="1" fill="#fff"/><rect x="5" y="12" width="1" height="1" fill="#ffff00"/><rect x="6" y="12" width="1" height="1" fill="#fff"/><rect x="7" y="12" width="1" height="1" fill="#ffff00"/><rect x="8" y="12" width="1" height="1" fill="#fff"/><rect x="9" y="12" width="1" height="1" fill="#ffff00"/><rect x="10" y="12" width="1" height="1" fill="#000"/><rect x="4" y="13" width="6" height="1" fill="#000"/></svg>
<div class="a" style="left:325px;top:47px;width:1px;height:18px;background:#a0a0a0"></div>
<svg style="left:333px;top:47px" width="17" height="16" shape-rendering="crispEdges"><rect x="8" y="2" width="2" height="1" fill="#000"/><rect x="12" y="2" width="2" height="1" fill="#800000"/><rect x="7" y="3" width="1" height="1" fill="#000"/><rect x="8" y="3" width="2" height="1" fill="#ffff00"/><rect x="10" y="3" width="1" height="1" fill="#000"/><rect x="12" y="3" width="2" height="1" fill="#800000"/><rect x="6" y="4" width="1" height="1" fill="#000"/><rect x="7" y="4" width="1" height="1" fill="#ffff00"/><rect x="8" y="4" width="2" height="1" fill="#000"/><rect x="10" y="4" width="1" height="1" fill="#ffff00"/><rect x="11" y="4" width="1" height="1" fill="#000"/><rect x="12" y="4" width="2" height="1" fill="#800000"/><rect x="5" y="5" width="1" height="1" fill="#000"/><rect x="6" y="5" width="1" height="1" fill="#ffff00"/><rect x="7" y="5" width="1" height="1" fill="#000"/><rect x="8" y="5" width="2" height="1" fill="#fff"/><rect x="10" y="5" width="1" height="1" fill="#000"/><rect x="11" y="5" width="1" height="1" fill="#ffff00"/><rect x="12" y="5" width="1" height="1" fill="#000"/><rect x="13" y="5" width="1" height="1" fill="#800000"/><rect x="4" y="6" width="1" height="1" fill="#000"/><rect x="5" y="6" width="1" height="1" fill="#ffff00"/><rect x="6" y="6" width="1" height="1" fill="#000"/><rect x="7" y="6" width="4" height="1" fill="#fff"/><rect x="11" y="6" width="1" height="1" fill="#000"/><rect x="12" y="6" width="1" height="1" fill="#ffff00"/><rect x="13" y="6" width="1" height="1" fill="#000"/><rect x="3" y="7" width="1" height="1" fill="#000"/><rect x="4" y="7" width="1" height="1" fill="#ffff00"/><rect x="5" y="7" width="1" height="1" fill="#000"/><rect x="6" y="7" width="6" height="1" fill="#fff"/><rect x="12" y="7" width="1" height="1" fill="#000"/><rect x="13" y="7" width="1" height="1" fill="#ffff00"/><rect x="14" y="7" width="1" height="1" fill="#000"/><rect x="2" y="8" width="1" height="1" fill="#000"/><rect x="3" y="8" width="1" height="1" fill="#ffff00"/><rect x="4" y="8" width="1" height="1" fill="#000"/><rect x="5" y="8" width="8" height="1" fill="#fff"/><rect x="13" y="8" width="1" height="1" fill="#000"/><rect x="14" y="8" width="1" height="1" fill="#ffff00"/><rect x="15" y="8" width="1" height="1" fill="#000"/><rect x="3" y="9" width="1" height="1" fill="#000"/><rect x="4" y="9" width="10" height="1" fill="#fff"/><rect x="14" y="9" width="1" height="1" fill="#000"/><rect x="3" y="10" width="1" height="1" fill="#000"/><rect x="4" y="10" width="3" height="1" fill="#fff"/><rect x="7" y="10" width="3" height="1" fill="#808080"/><rect x="10" y="10" width="1" height="1" fill="#000"/><rect x="11" y="10" width="3" height="1" fill="#fff"/><rect x="14" y="10" width="1" height="1" fill="#000"/><rect x="3" y="11" width="1" height="1" fill="#000"/><rect x="4" y="11" width="3" height="1" fill="#fff"/><rect x="7" y="11" width="1" height="1" fill="#808080"/><rect x="8" y="11" width="2" height="1" fill="#800080"/><rect x="10" y="11" width="1" height="1" fill="#000"/><rect x="11" y="11" width="3" height="1" fill="#fff"/><rect x="14" y="11" width="1" height="1" fill="#000"/><rect x="3" y="12" width="1" height="1" fill="#000"/><rect x="4" y="12" width="3" height="1" fill="#fff"/><rect x="7" y="12" width="1" height="1" fill="#808080"/><rect x="8" y="12" width="1" height="1" fill="#800080"/><rect x="9" y="12" width="1" height="1" fill="#ffff00"/><rect x="10" y="12" width="1" height="1" fill="#000"/><rect x="11" y="12" width="3" height="1" fill="#fff"/><rect x="14" y="12" width="1" height="1" fill="#000"/><rect x="3" y="13" width="1" height="1" fill="#000"/><rect x="4" y="13" width="3" height="1" fill="#fff"/><rect x="7" y="13" width="1" height="1" fill="#808080"/><rect x="8" y="13" width="2" height="1" fill="#800080"/><rect x="10" y="13" width="1" height="1" fill="#000"/><rect x="11" y="13" width="3" height="1" fill="#fff"/><rect x="14" y="13" width="1" height="1" fill="#000"/><rect x="3" y="14" width="1" height="1" fill="#000"/><rect x="4" y="14" width="3" height="1" fill="#fff"/><rect x="7" y="14" width="1" height="1" fill="#808080"/><rect x="8" y="14" width="2" height="1" fill="#800080"/><rect x="10" y="14" width="1" height="1" fill="#000"/><rect x="11" y="14" width="3" height="1" fill="#fff"/><rect x="14" y="14" width="1" height="1" fill="#000"/><rect x="3" y="15" width="12" height="1" fill="#000"/></svg>
<div class="a" style="left:356px;top:47px;width:1px;height:18px;background:#a0a0a0"></div>
<svg style="left:366px;top:49px" width="15" height="15" shape-rendering="crispEdges"><rect x="0" y="0" width="10" height="1" fill="#000080"/><rect x="0" y="1" width="8" height="1" fill="#000080"/><rect x="8" y="1" width="1" height="1" fill="#fff"/><rect x="9" y="1" width="1" height="1" fill="#000080"/><rect x="0" y="2" width="10" height="1" fill="#000080"/><rect x="0" y="3" width="1" height="1" fill="#000080"/><rect x="1" y="3" width="8" height="1" fill="#fff"/><rect x="9" y="3" width="1" height="1" fill="#000080"/><rect x="0" y="4" width="1" height="1" fill="#000080"/><rect x="1" y="4" width="1" height="1" fill="#fff"/><rect x="2" y="4" width="10" height="1" fill="#000080"/><rect x="0" y="5" width="1" height="1" fill="#000080"/><rect x="1" y="5" width="1" height="1" fill="#fff"/><rect x="2" y="5" width="8" height="1" fill="#000080"/><rect x="10" y="5" width="1" height="1" fill="#fff"/><rect x="11" y="5" width="1" height="1" fill="#000080"/><rect x="0" y="6" width="12" height="1" fill="#000080"/><rect x="2" y="7" width="1" height="1" fill="#000080"/><rect x="3" y="7" width="8" height="1" fill="#fff"/><rect x="11" y="7" width="1" height="1" fill="#000080"/><rect x="2" y="8" width="1" height="1" fill="#000080"/><rect x="3" y="8" width="2" height="1" fill="#fff"/><rect x="5" y="8" width="10" height="1" fill="#000080"/><rect x="2" y="9" width="10" height="1" fill="#000080"/><rect x="12" y="9" width="1" height="1" fill="#fff"/><rect x="13" y="9" width="2" height="1" fill="#000080"/><rect x="5" y="10" width="10" height="1" fill="#000080"/><rect x="5" y="11" width="1" height="1" fill="#000080"/><rect x="6" y="11" width="8" height="1" fill="#fff"/><rect x="14" y="11" width="1" height="1" fill="#000080"/><rect x="5" y="12" width="1" height="1" fill="#000080"/><rect x="6" y="12" width="8" height="1" fill="#fff"/><rect x="14" y="12" width="1" height="1" fill="#000080"/><rect x="5" y="13" width="1" height="1" fill="#000080"/><rect x="6" y="13" width="8" height="1" fill="#fff"/><rect x="14" y="13" width="1" height="1" fill="#000080"/><rect x="5" y="14" width="10" height="1" fill="#000080"/></svg>
<svg style="left:389px;top:50px" width="13" height="13" shape-rendering="crispEdges"><rect x="0" y="0" width="13" height="1" fill="#000080"/><rect x="0" y="1" width="11" height="1" fill="#000080"/><rect x="11" y="1" width="1" height="1" fill="#fff"/><rect x="12" y="1" width="1" height="1" fill="#000080"/><rect x="0" y="2" width="13" height="1" fill="#000080"/><rect x="0" y="3" width="1" height="1" fill="#000080"/><rect x="1" y="3" width="11" height="1" fill="#fff"/><rect x="12" y="3" width="1" height="1" fill="#000080"/><rect x="0" y="4" width="1" height="1" fill="#000080"/><rect x="1" y="4" width="11" height="1" fill="#fff"/><rect x="12" y="4" width="1" height="1" fill="#000080"/><rect x="0" y="5" width="1" height="1" fill="#000080"/><rect x="1" y="5" width="11" height="1" fill="#fff"/><rect x="12" y="5" width="1" height="1" fill="#000080"/><rect x="0" y="6" width="13" height="1" fill="#000080"/><rect x="0" y="7" width="11" height="1" fill="#000080"/><rect x="11" y="7" width="1" height="1" fill="#fff"/><rect x="12" y="7" width="1" height="1" fill="#000080"/><rect x="0" y="8" width="13" height="1" fill="#000080"/><rect x="0" y="9" width="1" height="1" fill="#000080"/><rect x="1" y="9" width="11" height="1" fill="#fff"/><rect x="12" y="9" width="1" height="1" fill="#000080"/><rect x="0" y="10" width="1" height="1" fill="#000080"/><rect x="1" y="10" width="11" height="1" fill="#fff"/><rect x="12" y="10" width="1" height="1" fill="#000080"/><rect x="0" y="11" width="1" height="1" fill="#000080"/><rect x="1" y="11" width="11" height="1" fill="#fff"/><rect x="12" y="11" width="1" height="1" fill="#000080"/><rect x="0" y="12" width="13" height="1" fill="#000080"/></svg>
<svg style="left:412px;top:50px" width="14" height="13" shape-rendering="crispEdges"><rect x="0" y="0" width="14" height="1" fill="#000080"/><rect x="0" y="1" width="5" height="1" fill="#000080"/><rect x="5" y="1" width="1" height="1" fill="#fff"/><rect x="6" y="1" width="5" height="1" fill="#000080"/><rect x="11" y="1" width="1" height="1" fill="#fff"/><rect x="12" y="1" width="2" height="1" fill="#000080"/><rect x="0" y="2" width="14" height="1" fill="#000080"/><rect x="0" y="3" width="1" height="1" fill="#000080"/><rect x="1" y="3" width="5" height="1" fill="#fff"/><rect x="6" y="3" width="2" height="1" fill="#000080"/><rect x="8" y="3" width="5" height="1" fill="#fff"/><rect x="13" y="3" width="1" height="1" fill="#000080"/><rect x="0" y="4" width="1" height="1" fill="#000080"/><rect x="1" y="4" width="5" height="1" fill="#fff"/><rect x="6" y="4" width="2" height="1" fill="#000080"/><rect x="8" y="4" width="5" height="1" fill="#fff"/><rect x="13" y="4" width="1" height="1" fill="#000080"/><rect x="0" y="5" width="1" height="1" fill="#000080"/><rect x="1" y="5" width="5" height="1" fill="#fff"/><rect x="6" y="5" width="2" height="1" fill="#000080"/><rect x="8" y="5" width="5" height="1" fill="#fff"/><rect x="13" y="5" width="1" height="1" fill="#000080"/><rect x="0" y="6" width="1" height="1" fill="#000080"/><rect x="1" y="6" width="5" height="1" fill="#fff"/><rect x="6" y="6" width="2" height="1" fill="#000080"/><rect x="8" y="6" width="5" height="1" fill="#fff"/><rect x="13" y="6" width="1" height="1" fill="#000080"/><rect x="0" y="7" width="1" height="1" fill="#000080"/><rect x="1" y="7" width="5" height="1" fill="#fff"/><rect x="6" y="7" width="2" height="1" fill="#000080"/><rect x="8" y="7" width="5" height="1" fill="#fff"/><rect x="13" y="7" width="1" height="1" fill="#000080"/><rect x="0" y="8" width="1" height="1" fill="#000080"/><rect x="1" y="8" width="5" height="1" fill="#fff"/><rect x="6" y="8" width="2" height="1" fill="#000080"/><rect x="8" y="8" width="5" height="1" fill="#fff"/><rect x="13" y="8" width="1" height="1" fill="#000080"/><rect x="0" y="9" width="1" height="1" fill="#000080"/><rect x="1" y="9" width="5" height="1" fill="#fff"/><rect x="6" y="9" width="2" height="1" fill="#000080"/><rect x="8" y="9" width="5" height="1" fill="#fff"/><rect x="13" y="9" width="1" height="1" fill="#000080"/><rect x="0" y="10" width="1" height="1" fill="#000080"/><rect x="1" y="10" width="5" height="1" fill="#fff"/><rect x="6" y="10" width="2" height="1" fill="#000080"/><rect x="8" y="10" width="5" height="1" fill="#fff"/><rect x="13" y="10" width="1" height="1" fill="#000080"/><rect x="0" y="11" width="1" height="1" fill="#000080"/><rect x="1" y="11" width="5" height="1" fill="#fff"/><rect x="6" y="11" width="2" height="1" fill="#000080"/><rect x="8" y="11" width="5" height="1" fill="#fff"/><rect x="13" y="11" width="1" height="1" fill="#000080"/><rect x="0" y="12" width="14" height="1" fill="#000080"/></svg>
<div class="a" style="left:433px;top:47px;width:1px;height:18px;background:#a0a0a0"></div>
<div class="t n" style="left:447px;top:49px;font-size:11px;font-weight:bold;line-height:13px;color:#000">a</div>
<svg style="left:442px;top:50px" width="17" height="13" shape-rendering="crispEdges"><path d="M2 0 H4 V1 H2 Z M1 1 H2 V6 H1 Z M0 6 H1 V7 H0 Z M1 7 H2 V11 H1 Z M2 11 H4 V12 H2 Z" fill="#800000"/><path d="M12 0 H14 V1 H12 Z M14 1 H15 V6 H14 Z M15 6 H16 V7 H15 Z M14 7 H15 V11 H14 Z M12 11 H14 V12 H12 Z" fill="#800000"/></svg>
<svg style="left:467px;top:48px" width="15" height="15"><polygon points="7.50,0.60 9.50,5.45 14.73,5.85 10.73,9.25 11.97,14.35 7.50,11.60 3.03,14.35 4.27,9.25 0.27,5.85 5.50,5.45" fill="#ffff00" stroke="#800000" stroke-width="1.1"/><path d="M7.5 4 V7" stroke="#fff" stroke-width="1.2"/></svg>
<svg style="left:489px;top:54px" width="7" height="4" shape-rendering="crispEdges"><rect x="0" y="0" width="7" height="1" fill="#000"/><rect x="1" y="1" width="5" height="1" fill="#000"/><rect x="2" y="2" width="3" height="1" fill="#000"/><rect x="3" y="3" width="1" height="1" fill="#000"/></svg>
<div class="a" style="left:502px;top:47px;width:1px;height:18px;background:#a0a0a0"></div>
<svg style="left:512px;top:48px" width="13" height="16" shape-rendering="crispEdges"><rect x="1" y="0" width="11" height="1" fill="#000"/><rect x="0" y="1" width="1" height="1" fill="#000"/><rect x="1" y="1" width="3" height="1" fill="#fff"/><rect x="4" y="1" width="1" height="1" fill="#ffff00"/><rect x="5" y="1" width="3" height="1" fill="#fff"/><rect x="8" y="1" width="1" height="1" fill="#ffff00"/><rect x="9" y="1" width="3" height="1" fill="#fff"/><rect x="12" y="1" width="1" height="1" fill="#000"/><rect x="0" y="2" width="1" height="1" fill="#000"/><rect x="1" y="2" width="1" height="1" fill="#fff"/><rect x="2" y="2" width="1" height="1" fill="#ffff00"/><rect x="3" y="2" width="3" height="1" fill="#fff"/><rect x="6" y="2" width="1" height="1" fill="#ffff00"/><rect x="7" y="2" width="3" height="1" fill="#fff"/><rect x="10" y="2" width="1" height="1" fill="#ffff00"/><rect x="11" y="2" width="1" height="1" fill="#fff"/><rect x="12" y="2" width="1" height="1" fill="#000"/><rect x="0" y="3" width="1" height="1" fill="#000"/><rect x="1" y="3" width="3" height="1" fill="#fff"/><rect x="4" y="3" width="6" height="1" fill="#000"/><rect x="10" y="3" width="2" height="1" fill="#fff"/><rect x="12" y="3" width="1" height="1" fill="#000"/><rect x="0" y="4" width="1" height="1" fill="#000"/><rect x="1" y="4" width="1" height="1" fill="#fff"/><rect x="2" y="4" width="1" height="1" fill="#ffff00"/><rect x="3" y="4" width="1" height="1" fill="#fff"/><rect x="4" y="4" width="2" height="1" fill="#000"/><rect x="6" y="4" width="1" height="1" fill="#ffff00"/><rect x="7" y="4" width="1" height="1" fill="#fff"/><rect x="8" y="4" width="2" height="1" fill="#000"/><rect x="10" y="4" width="1" height="1" fill="#ffff00"/><rect x="11" y="4" width="1" height="1" fill="#fff"/><rect x="12" y="4" width="1" height="1" fill="#000"/><rect x="0" y="5" width="1" height="1" fill="#000"/><rect x="1" y="5" width="3" height="1" fill="#fff"/><rect x="4" y="5" width="1" height="1" fill="#ffff00"/><rect x="5" y="5" width="3" height="1" fill="#fff"/><rect x="8" y="5" width="2" height="1" fill="#000"/><rect x="10" y="5" width="2" height="1" fill="#fff"/><rect x="12" y="5" width="1" height="1" fill="#000"/><rect x="0" y="6" width="1" height="1" fill="#000"/><rect x="1" y="6" width="1" height="1" fill="#fff"/><rect x="2" y="6" width="1" height="1" fill="#ffff00"/><rect x="3" y="6" width="3" height="1" fill="#fff"/><rect x="6" y="6" width="1" height="1" fill="#ffff00"/><rect x="7" y="6" width="2" height="1" fill="#000"/><rect x="9" y="6" width="1" height="1" fill="#fff"/><rect x="10" y="6" width="1" height="1" fill="#ffff00"/><rect x="11" y="6" width="1" height="1" fill="#fff"/><rect x="12" y="6" width="1" height="1" fill="#000"/><rect x="0" y="7" width="1" height="1" fill="#000"/><rect x="1" y="7" width="3" height="1" fill="#fff"/><rect x="4" y="7" width="1" height="1" fill="#ffff00"/><rect x="5" y="7" width="1" height="1" fill="#fff"/><rect x="6" y="7" width="2" height="1" fill="#000"/><rect x="8" y="7" width="1" height="1" fill="#ffff00"/><rect x="9" y="7" width="3" height="1" fill="#fff"/><rect x="12" y="7" width="1" height="1" fill="#000"/><rect x="0" y="8" width="1" height="1" fill="#000"/><rect x="1" y="8" width="1" height="1" fill="#fff"/><rect x="2" y="8" width="1" height="1" fill="#ffff00"/><rect x="3" y="8" width="3" height="1" fill="#fff"/><rect x="6" y="8" width="1" height="1" fill="#000"/><rect x="7" y="8" width="3" height="1" fill="#fff"/><rect x="10" y="8" width="1" height="1" fill="#ffff00"/><rect x="11" y="8" width="1" height="1" fill="#fff"/><rect x="12" y="8" width="1" height="1" fill="#000"/><rect x="0" y="9" width="1" height="1" fill="#000"/><rect x="1" y="9" width="3" height="1" fill="#fff"/><rect x="4" y="9" width="1" height="1" fill="#ffff00"/><rect x="5" y="9" width="3" height="1" fill="#fff"/><rect x="8" y="9" width="1" height="1" fill="#ffff00"/><rect x="9" y="9" width="3" height="1" fill="#fff"/><rect x="12" y="9" width="1" height="1" fill="#000"/><rect x="0" y="10" width="1" height="1" fill="#000"/><rect x="1" y="10" width="1" height="1" fill="#fff"/><rect x="2" y="10" width="1" height="1" fill="#ffff00"/><rect x="3" y="10" width="3" height="1" fill="#fff"/><rect x="6" y="10" width="2" height="1" fill="#000"/><rect x="8" y="10" width="2" height="1" fill="#fff"/><rect x="10" y="10" width="1" height="1" fill="#ffff00"/><rect x="11" y="10" width="1" height="1" fill="#fff"/><rect x="12" y="10" width="1" height="1" fill="#000"/><rect x="0" y="11" width="1" height="1" fill="#000"/><rect x="1" y="11" width="3" height="1" fill="#fff"/><rect x="4" y="11" width="1" height="1" fill="#ffff00"/><rect x="5" y="11" width="3" height="1" fill="#fff"/><rect x="8" y="11" width="1" height="1" fill="#ffff00"/><rect x="9" y="11" width="3" height="1" fill="#fff"/><rect x="12" y="11" width="1" height="1" fill="#000"/><rect x="1" y="12" width="8" height="1" fill="#000"/><rect x="9" y="12" width="1" height="1" fill="#ffff00"/><rect x="10" y="12" width="2" height="1" fill="#000"/><rect x="8" y="13" width="1" height="1" fill="#000"/><rect x="9" y="13" width="1" height="1" fill="#ffff00"/><rect x="10" y="13" width="1" height="1" fill="#000"/><rect x="9" y="14" width="2" height="1" fill="#000"/><rect x="10" y="15" width="1" height="1" fill="#000"/></svg>
<div class="a" style="left:0;top:69px;width:339px;height:21px;border:1px solid #a0a0a0;border-bottom:1px solid #404040;border-right:1px solid #404040;background:#f0f0f0"></div>
<div class="a" style="left:1px;top:70px;width:337px;height:1px;background:#fff"></div>
<div class="a" style="left:1px;top:70px;width:1px;height:19px;background:#fff"></div>
<svg style="left:6px;top:73px" width="16" height="13" shape-rendering="crispEdges"><rect x="0" y="0" width="16" height="1" fill="#000"/><rect x="0" y="1" width="1" height="1" fill="#000"/><rect x="1" y="1" width="1" height="1" fill="#fff"/><rect x="2" y="1" width="1" height="1" fill="#000"/><rect x="3" y="1" width="1" height="1" fill="#fff"/><rect x="4" y="1" width="1" height="1" fill="#00ffff"/><rect x="5" y="1" width="1" height="1" fill="#fff"/><rect x="6" y="1" width="1" height="1" fill="#00ffff"/><rect x="7" y="1" width="1" height="1" fill="#fff"/><rect x="8" y="1" width="1" height="1" fill="#00ffff"/><rect x="9" y="1" width="1" height="1" fill="#fff"/><rect x="10" y="1" width="1" height="1" fill="#00ffff"/><rect x="11" y="1" width="1" height="1" fill="#fff"/><rect x="12" y="1" width="1" height="1" fill="#00ffff"/><rect x="13" y="1" width="1" height="1" fill="#000"/><rect x="14" y="1" width="1" height="1" fill="#fff"/><rect x="15" y="1" width="1" height="1" fill="#000"/><rect x="0" y="2" width="3" height="1" fill="#000"/><rect x="3" y="2" width="1" height="1" fill="#00ffff"/><rect x="4" y="2" width="1" height="1" fill="#fff"/><rect x="5" y="2" width="4" height="1" fill="#000"/><rect x="9" y="2" width="1" height="1" fill="#00ffff"/><rect x="10" y="2" width="1" height="1" fill="#fff"/><rect x="11" y="2" width="1" height="1" fill="#00ffff"/><rect x="12" y="2" width="1" height="1" fill="#fff"/><rect x="13" y="2" width="3" height="1" fill="#000"/><rect x="0" y="3" width="1" height="1" fill="#000"/><rect x="1" y="3" width="1" height="1" fill="#fff"/><rect x="2" y="3" width="1" height="1" fill="#000"/><rect x="3" y="3" width="1" height="1" fill="#fff"/><rect x="4" y="3" width="6" height="1" fill="#000"/><rect x="10" y="3" width="1" height="1" fill="#00ffff"/><rect x="11" y="3" width="1" height="1" fill="#fff"/><rect x="12" y="3" width="1" height="1" fill="#00ffff"/><rect x="13" y="3" width="1" height="1" fill="#000"/><rect x="14" y="3" width="1" height="1" fill="#fff"/><rect x="15" y="3" width="1" height="1" fill="#000"/><rect x="0" y="4" width="3" height="1" fill="#000"/><rect x="3" y="4" width="1" height="1" fill="#00ffff"/><rect x="4" y="4" width="6" height="1" fill="#000"/><rect x="10" y="4" width="1" height="1" fill="#fff"/><rect x="11" y="4" width="1" height="1" fill="#00ffff"/><rect x="12" y="4" width="1" height="1" fill="#fff"/><rect x="13" y="4" width="3" height="1" fill="#000"/><rect x="0" y="5" width="1" height="1" fill="#000"/><rect x="1" y="5" width="1" height="1" fill="#fff"/><rect x="2" y="5" width="1" height="1" fill="#000"/><rect x="3" y="5" width="1" height="1" fill="#fff"/><rect x="4" y="5" width="2" height="1" fill="#000"/><rect x="6" y="5" width="3" height="1" fill="#fff"/><rect x="9" y="5" width="1" height="1" fill="#000"/><rect x="10" y="5" width="1" height="1" fill="#00ffff"/><rect x="11" y="5" width="1" height="1" fill="#fff"/><rect x="12" y="5" width="1" height="1" fill="#00ffff"/><rect x="13" y="5" width="1" height="1" fill="#000"/><rect x="14" y="5" width="1" height="1" fill="#fff"/><rect x="15" y="5" width="1" height="1" fill="#000"/><rect x="0" y="6" width="3" height="1" fill="#000"/><rect x="3" y="6" width="1" height="1" fill="#00ffff"/><rect x="4" y="6" width="1" height="1" fill="#000"/><rect x="5" y="6" width="2" height="1" fill="#fff"/><rect x="7" y="6" width="2" height="1" fill="#a8a8a8"/><rect x="9" y="6" width="1" height="1" fill="#000"/><rect x="10" y="6" width="1" height="1" fill="#fff"/><rect x="11" y="6" width="1" height="1" fill="#00ffff"/><rect x="12" y="6" width="1" height="1" fill="#fff"/><rect x="13" y="6" width="3" height="1" fill="#000"/><rect x="0" y="7" width="1" height="1" fill="#000"/><rect x="1" y="7" width="1" height="1" fill="#fff"/><rect x="2" y="7" width="1" height="1" fill="#000"/><rect x="3" y="7" width="1" height="1" fill="#fff"/><rect x="4" y="7" width="1" height="1" fill="#000"/><rect x="5" y="7" width="2" height="1" fill="#fff"/><rect x="7" y="7" width="2" height="1" fill="#a8a8a8"/><rect x="9" y="7" width="1" height="1" fill="#000"/><rect x="10" y="7" width="1" height="1" fill="#00ffff"/><rect x="11" y="7" width="1" height="1" fill="#fff"/><rect x="12" y="7" width="1" height="1" fill="#00ffff"/><rect x="13" y="7" width="1" height="1" fill="#000"/><rect x="14" y="7" width="1" height="1" fill="#fff"/><rect x="15" y="7" width="1" height="1" fill="#000"/><rect x="0" y="8" width="3" height="1" fill="#000"/><rect x="3" y="8" width="1" height="1" fill="#00ffff"/><rect x="4" y="8" width="1" height="1" fill="#fff"/><rect x="5" y="8" width="4" height="1" fill="#000"/><rect x="9" y="8" width="1" height="1" fill="#00ffff"/><rect x="10" y="8" width="1" height="1" fill="#fff"/><rect x="11" y="8" width="1" height="1" fill="#00ffff"/><rect x="12" y="8" width="1" height="1" fill="#fff"/><rect x="13" y="8" width="3" height="1" fill="#000"/><rect x="0" y="9" width="1" height="1" fill="#000"/><rect x="1" y="9" width="1" height="1" fill="#fff"/><rect x="2" y="9" width="1" height="1" fill="#000"/><rect x="3" y="9" width="1" height="1" fill="#fff"/><rect x="4" y="9" width="3" height="1" fill="#ff0000"/><rect x="7" y="9" width="1" height="1" fill="#fff"/><rect x="8" y="9" width="4" height="1" fill="#ff0000"/><rect x="12" y="9" width="1" height="1" fill="#00ffff"/><rect x="13" y="9" width="1" height="1" fill="#000"/><rect x="14" y="9" width="1" height="1" fill="#fff"/><rect x="15" y="9" width="1" height="1" fill="#000"/><rect x="0" y="10" width="3" height="1" fill="#000"/><rect x="3" y="10" width="1" height="1" fill="#00ffff"/><rect x="4" y="10" width="8" height="1" fill="#ff0000"/><rect x="12" y="10" width="1" height="1" fill="#fff"/><rect x="13" y="10" width="3" height="1" fill="#000"/><rect x="0" y="11" width="1" height="1" fill="#000"/><rect x="1" y="11" width="1" height="1" fill="#fff"/><rect x="2" y="11" width="1" height="1" fill="#000"/><rect x="3" y="11" width="1" height="1" fill="#fff"/><rect x="4" y="11" width="8" height="1" fill="#ff0000"/><rect x="12" y="11" width="1" height="1" fill="#00ffff"/><rect x="13" y="11" width="1" height="1" fill="#000"/><rect x="14" y="11" width="1" height="1" fill="#fff"/><rect x="15" y="11" width="1" height="1" fill="#000"/><rect x="0" y="12" width="16" height="1" fill="#000"/></svg>
<div class="t" style="left:26px;top:75px">Сценарии</div>
<div class="t n" style="left:297px;top:74px;font-size:12px;font-weight:bold;color:#000;line-height:14px">?</div>
<svg style="left:312px;top:80px" width="7" height="4" shape-rendering="crispEdges"><rect x="0" y="0" width="7" height="1" fill="#000"/><rect x="1" y="1" width="5" height="1" fill="#000"/><rect x="2" y="2" width="3" height="1" fill="#000"/><rect x="3" y="3" width="1" height="1" fill="#000"/></svg>
<svg style="left:326px;top:76px" width="8" height="8"><path d="M0.5 0.5 L7.5 7.5 M7.5 0.5 L0.5 7.5" stroke="#000" stroke-width="1.6"/></svg>
<svg style="left:3px;top:95px" width="16" height="14" shape-rendering="crispEdges"><rect x="7" y="0" width="6" height="1" fill="#000"/><rect x="14" y="0" width="2" height="1" fill="#000080"/><rect x="6" y="1" width="1" height="1" fill="#000"/><rect x="7" y="1" width="1" height="1" fill="#fff"/><rect x="8" y="1" width="1" height="1" fill="#000"/><rect x="9" y="1" width="4" height="1" fill="#c0c0c0"/><rect x="13" y="1" width="1" height="1" fill="#000"/><rect x="14" y="1" width="2" height="1" fill="#000080"/><rect x="5" y="2" width="1" height="1" fill="#000"/><rect x="6" y="2" width="1" height="1" fill="#fff"/><rect x="7" y="2" width="1" height="1" fill="#000"/><rect x="8" y="2" width="1" height="1" fill="#fff"/><rect x="9" y="2" width="1" height="1" fill="#000"/><rect x="10" y="2" width="3" height="1" fill="#c0c0c0"/><rect x="13" y="2" width="1" height="1" fill="#000"/><rect x="14" y="2" width="2" height="1" fill="#000080"/><rect x="0" y="3" width="5" height="1" fill="#000"/><rect x="5" y="3" width="1" height="1" fill="#fff"/><rect x="6" y="3" width="1" height="1" fill="#000"/><rect x="7" y="3" width="1" height="1" fill="#fff"/><rect x="8" y="3" width="1" height="1" fill="#000"/><rect x="9" y="3" width="1" height="1" fill="#fff"/><rect x="10" y="3" width="3" height="1" fill="#c0c0c0"/><rect x="13" y="3" width="1" height="1" fill="#000"/><rect x="14" y="3" width="2" height="1" fill="#000080"/><rect x="0" y="4" width="1" height="1" fill="#000"/><rect x="1" y="4" width="2" height="1" fill="#fff"/><rect x="3" y="4" width="1" height="1" fill="#000"/><rect x="4" y="4" width="1" height="1" fill="#fff"/><rect x="5" y="4" width="1" height="1" fill="#000"/><rect x="6" y="4" width="1" height="1" fill="#fff"/><rect x="7" y="4" width="1" height="1" fill="#000"/><rect x="8" y="4" width="1" height="1" fill="#fff"/><rect x="9" y="4" width="4" height="1" fill="#000"/><rect x="14" y="4" width="2" height="1" fill="#000080"/><rect x="0" y="5" width="1" height="1" fill="#000"/><rect x="1" y="5" width="1" height="1" fill="#fff"/><rect x="2" y="5" width="2" height="1" fill="#000"/><rect x="4" y="5" width="1" height="1" fill="#fff"/><rect x="5" y="5" width="1" height="1" fill="#000"/><rect x="6" y="5" width="1" height="1" fill="#fff"/><rect x="7" y="5" width="1" height="1" fill="#000"/><rect x="8" y="5" width="1" height="1" fill="#fff"/><rect x="9" y="5" width="1" height="1" fill="#000"/><rect x="10" y="5" width="1" height="1" fill="#fff"/><rect x="11" y="5" width="1" height="1" fill="#000"/><rect x="14" y="5" width="1" height="1" fill="#000080"/><rect x="0" y="6" width="1" height="1" fill="#000"/><rect x="1" y="6" width="1" height="1" fill="#fff"/><rect x="2" y="6" width="1" height="1" fill="#000"/><rect x="3" y="6" width="2" height="1" fill="#fff"/><rect x="5" y="6" width="1" height="1" fill="#000"/><rect x="6" y="6" width="1" height="1" fill="#fff"/><rect x="7" y="6" width="1" height="1" fill="#000"/><rect x="8" y="6" width="3" height="1" fill="#fff"/><rect x="11" y="6" width="1" height="1" fill="#000"/><rect x="0" y="7" width="1" height="1" fill="#000"/><rect x="1" y="7" width="6" height="1" fill="#fff"/><rect x="7" y="7" width="1" height="1" fill="#000"/><rect x="8" y="7" width="3" height="1" fill="#fff"/><rect x="11" y="7" width="1" height="1" fill="#000"/><rect x="0" y="8" width="1" height="1" fill="#000"/><rect x="1" y="8" width="10" height="1" fill="#fff"/><rect x="11" y="8" width="1" height="1" fill="#000"/><rect x="0" y="9" width="1" height="1" fill="#000"/><rect x="1" y="9" width="1" height="1" fill="#fff"/><rect x="2" y="9" width="2" height="1" fill="#000"/><rect x="4" y="9" width="1" height="1" fill="#fff"/><rect x="5" y="9" width="5" height="1" fill="#000"/><rect x="10" y="9" width="1" height="1" fill="#fff"/><rect x="11" y="9" width="1" height="1" fill="#000"/><rect x="0" y="10" width="1" height="1" fill="#000"/><rect x="1" y="10" width="10" height="1" fill="#fff"/><rect x="11" y="10" width="1" height="1" fill="#000"/><rect x="0" y="11" width="1" height="1" fill="#000"/><rect x="1" y="11" width="1" height="1" fill="#fff"/><rect x="2" y="11" width="2" height="1" fill="#000"/><rect x="4" y="11" width="1" height="1" fill="#fff"/><rect x="5" y="11" width="5" height="1" fill="#000"/><rect x="10" y="11" width="1" height="1" fill="#fff"/><rect x="11" y="11" width="1" height="1" fill="#000"/><rect x="0" y="12" width="1" height="1" fill="#000"/><rect x="1" y="12" width="10" height="1" fill="#fff"/><rect x="11" y="12" width="1" height="1" fill="#000"/><rect x="0" y="13" width="12" height="1" fill="#000"/></svg>
<svg style="left:26px;top:95px" width="16" height="15" shape-rendering="crispEdges"><rect x="0" y="0" width="16" height="1" fill="#000080"/><rect x="0" y="1" width="16" height="1" fill="#000080"/><rect x="1" y="2" width="1" height="1" fill="#000"/><rect x="2" y="2" width="1" height="1" fill="#ffff00"/><rect x="3" y="2" width="1" height="1" fill="#fff"/><rect x="4" y="2" width="1" height="1" fill="#ffff00"/><rect x="5" y="2" width="1" height="1" fill="#fff"/><rect x="6" y="2" width="1" height="1" fill="#ffff00"/><rect x="7" y="2" width="1" height="1" fill="#fff"/><rect x="8" y="2" width="1" height="1" fill="#ffff00"/><rect x="9" y="2" width="1" height="1" fill="#fff"/><rect x="10" y="2" width="1" height="1" fill="#ffff00"/><rect x="11" y="2" width="1" height="1" fill="#fff"/><rect x="12" y="2" width="1" height="1" fill="#ffff00"/><rect x="13" y="2" width="1" height="1" fill="#fff"/><rect x="14" y="2" width="1" height="1" fill="#000"/><rect x="1" y="3" width="1" height="1" fill="#000"/><rect x="2" y="3" width="1" height="1" fill="#fff"/><rect x="3" y="3" width="1" height="1" fill="#ffff00"/><rect x="4" y="3" width="1" height="1" fill="#fff"/><rect x="5" y="3" width="1" height="1" fill="#ffff00"/><rect x="6" y="3" width="1" height="1" fill="#fff"/><rect x="7" y="3" width="1" height="1" fill="#ffff00"/><rect x="8" y="3" width="1" height="1" fill="#fff"/><rect x="9" y="3" width="1" height="1" fill="#ffff00"/><rect x="10" y="3" width="1" height="1" fill="#fff"/><rect x="11" y="3" width="1" height="1" fill="#ffff00"/><rect x="12" y="3" width="1" height="1" fill="#fff"/><rect x="13" y="3" width="1" height="1" fill="#ffff00"/><rect x="14" y="3" width="1" height="1" fill="#000"/><rect x="1" y="4" width="1" height="1" fill="#000"/><rect x="2" y="4" width="1" height="1" fill="#ffff00"/><rect x="3" y="4" width="4" height="1" fill="#ff00ff"/><rect x="7" y="4" width="1" height="1" fill="#fff"/><rect x="8" y="4" width="1" height="1" fill="#ffff00"/><rect x="9" y="4" width="1" height="1" fill="#0000ff"/><rect x="10" y="4" width="1" height="1" fill="#ffff00"/><rect x="11" y="4" width="2" height="1" fill="#000"/><rect x="13" y="4" width="1" height="1" fill="#fff"/><rect x="14" y="4" width="1" height="1" fill="#000"/><rect x="1" y="5" width="1" height="1" fill="#000"/><rect x="2" y="5" width="1" height="1" fill="#fff"/><rect x="3" y="5" width="4" height="1" fill="#ff00ff"/><rect x="7" y="5" width="1" height="1" fill="#ffff00"/><rect x="8" y="5" width="1" height="1" fill="#fff"/><rect x="9" y="5" width="1" height="1" fill="#ffff00"/><rect x="10" y="5" width="1" height="1" fill="#fff"/><rect x="11" y="5" width="1" height="1" fill="#ffff00"/><rect x="12" y="5" width="1" height="1" fill="#fff"/><rect x="13" y="5" width="1" height="1" fill="#ffff00"/><rect x="14" y="5" width="1" height="1" fill="#000"/><rect x="1" y="6" width="1" height="1" fill="#000"/><rect x="2" y="6" width="1" height="1" fill="#ffff00"/><rect x="3" y="6" width="3" height="1" fill="#ff0000"/><rect x="6" y="6" width="2" height="1" fill="#0000ff"/><rect x="8" y="6" width="1" height="1" fill="#ffff00"/><rect x="9" y="6" width="1" height="1" fill="#ff00ff"/><rect x="10" y="6" width="1" height="1" fill="#ffff00"/><rect x="11" y="6" width="2" height="1" fill="#000"/><rect x="13" y="6" width="1" height="1" fill="#fff"/><rect x="14" y="6" width="1" height="1" fill="#000"/><rect x="1" y="7" width="1" height="1" fill="#000"/><rect x="2" y="7" width="1" height="1" fill="#fff"/><rect x="3" y="7" width="3" height="1" fill="#ff0000"/><rect x="6" y="7" width="2" height="1" fill="#0000ff"/><rect x="8" y="7" width="1" height="1" fill="#fff"/><rect x="9" y="7" width="1" height="1" fill="#ffff00"/><rect x="10" y="7" width="1" height="1" fill="#fff"/><rect x="11" y="7" width="1" height="1" fill="#ffff00"/><rect x="12" y="7" width="1" height="1" fill="#fff"/><rect x="13" y="7" width="1" height="1" fill="#ffff00"/><rect x="14" y="7" width="1" height="1" fill="#000"/><rect x="1" y="8" width="1" height="1" fill="#000"/><rect x="2" y="8" width="1" height="1" fill="#ffff00"/><rect x="3" y="8" width="3" height="1" fill="#ff0000"/><rect x="6" y="8" width="2" height="1" fill="#0000ff"/><rect x="8" y="8" width="1" height="1" fill="#ffff00"/><rect x="9" y="8" width="1" height="1" fill="#ff0000"/><rect x="10" y="8" width="1" height="1" fill="#ffff00"/><rect x="11" y="8" width="2" height="1" fill="#000"/><rect x="13" y="8" width="1" height="1" fill="#fff"/><rect x="14" y="8" width="1" height="1" fill="#000"/><rect x="1" y="9" width="1" height="1" fill="#000"/><rect x="2" y="9" width="1" height="1" fill="#fff"/><rect x="3" y="9" width="1" height="1" fill="#ffff00"/><rect x="4" y="9" width="1" height="1" fill="#fff"/><rect x="5" y="9" width="1" height="1" fill="#ffff00"/><rect x="6" y="9" width="1" height="1" fill="#fff"/><rect x="7" y="9" width="1" height="1" fill="#ffff00"/><rect x="8" y="9" width="1" height="1" fill="#fff"/><rect x="9" y="9" width="1" height="1" fill="#ffff00"/><rect x="10" y="9" width="1" height="1" fill="#fff"/><rect x="11" y="9" width="1" height="1" fill="#ffff00"/><rect x="12" y="9" width="1" height="1" fill="#fff"/><rect x="13" y="9" width="1" height="1" fill="#ffff00"/><rect x="14" y="9" width="1" height="1" fill="#000"/><rect x="1" y="10" width="1" height="1" fill="#000"/><rect x="2" y="10" width="1" height="1" fill="#ffff00"/><rect x="3" y="10" width="1" height="1" fill="#fff"/><rect x="4" y="10" width="1" height="1" fill="#ffff00"/><rect x="5" y="10" width="1" height="1" fill="#fff"/><rect x="6" y="10" width="1" height="1" fill="#ffff00"/><rect x="7" y="10" width="1" height="1" fill="#fff"/><rect x="8" y="10" width="1" height="1" fill="#ffff00"/><rect x="9" y="10" width="1" height="1" fill="#fff"/><rect x="10" y="10" width="1" height="1" fill="#ffff00"/><rect x="11" y="10" width="1" height="1" fill="#fff"/><rect x="12" y="10" width="1" height="1" fill="#ffff00"/><rect x="13" y="10" width="1" height="1" fill="#fff"/><rect x="14" y="10" width="1" height="1" fill="#000"/><rect x="1" y="11" width="14" height="1" fill="#000"/><rect x="7" y="12" width="2" height="1" fill="#000"/><rect x="7" y="13" width="2" height="1" fill="#000"/><rect x="4" y="14" width="3" height="1" fill="#000"/><rect x="9" y="14" width="3" height="1" fill="#000"/></svg>
<div class="a" style="left:48px;top:93px;width:1px;height:17px;background:#a0a0a0"></div>
<svg style="left:59px;top:95px" width="12" height="14" shape-rendering="crispEdges"><rect x="2" y="0" width="7" height="1" fill="#000080"/><rect x="3" y="1" width="5" height="1" fill="#000080"/><rect x="4" y="2" width="3" height="1" fill="#000080"/><rect x="5" y="3" width="1" height="1" fill="#000080"/><rect x="0" y="5" width="12" height="1" fill="#000"/><rect x="0" y="6" width="1" height="1" fill="#000"/><rect x="1" y="6" width="10" height="1" fill="#000080"/><rect x="11" y="6" width="1" height="1" fill="#000"/><rect x="0" y="7" width="12" height="1" fill="#000"/><rect x="0" y="8" width="1" height="1" fill="#000"/><rect x="1" y="8" width="10" height="1" fill="#fff"/><rect x="11" y="8" width="1" height="1" fill="#000"/><rect x="0" y="9" width="1" height="1" fill="#000"/><rect x="1" y="9" width="1" height="1" fill="#fff"/><rect x="2" y="9" width="2" height="1" fill="#808080"/><rect x="4" y="9" width="2" height="1" fill="#fff"/><rect x="6" y="9" width="4" height="1" fill="#808080"/><rect x="10" y="9" width="1" height="1" fill="#fff"/><rect x="11" y="9" width="1" height="1" fill="#000"/><rect x="0" y="10" width="1" height="1" fill="#000"/><rect x="1" y="10" width="10" height="1" fill="#fff"/><rect x="11" y="10" width="1" height="1" fill="#000"/><rect x="0" y="11" width="1" height="1" fill="#000"/><rect x="1" y="11" width="1" height="1" fill="#fff"/><rect x="2" y="11" width="2" height="1" fill="#808080"/><rect x="4" y="11" width="2" height="1" fill="#fff"/><rect x="6" y="11" width="4" height="1" fill="#808080"/><rect x="10" y="11" width="1" height="1" fill="#fff"/><rect x="11" y="11" width="1" height="1" fill="#000"/><rect x="0" y="12" width="1" height="1" fill="#000"/><rect x="1" y="12" width="10" height="1" fill="#fff"/><rect x="11" y="12" width="1" height="1" fill="#000"/><rect x="0" y="13" width="12" height="1" fill="#000"/></svg>
<svg style="left:81px;top:95px" width="15" height="12" shape-rendering="crispEdges"><rect x="6" y="0" width="2" height="1" fill="#000"/><rect x="4" y="1" width="2" height="1" fill="#000"/><rect x="6" y="1" width="2" height="1" fill="#800080"/><rect x="8" y="1" width="2" height="1" fill="#000"/><rect x="2" y="2" width="2" height="1" fill="#000"/><rect x="4" y="2" width="6" height="1" fill="#800080"/><rect x="10" y="2" width="2" height="1" fill="#000"/><rect x="0" y="3" width="2" height="1" fill="#000"/><rect x="2" y="3" width="10" height="1" fill="#800080"/><rect x="12" y="3" width="2" height="1" fill="#000"/><rect x="2" y="4" width="2" height="1" fill="#000"/><rect x="4" y="4" width="6" height="1" fill="#800080"/><rect x="10" y="4" width="2" height="1" fill="#000"/><rect x="13" y="4" width="1" height="1" fill="#000"/><rect x="2" y="5" width="1" height="1" fill="#000"/><rect x="3" y="5" width="2" height="1" fill="#ff00ff"/><rect x="5" y="5" width="3" height="1" fill="#000"/><rect x="8" y="5" width="3" height="1" fill="#ff00ff"/><rect x="11" y="5" width="1" height="1" fill="#000"/><rect x="13" y="5" width="1" height="1" fill="#000"/><rect x="2" y="6" width="1" height="1" fill="#000"/><rect x="3" y="6" width="8" height="1" fill="#ff00ff"/><rect x="11" y="6" width="1" height="1" fill="#000"/><rect x="13" y="6" width="1" height="1" fill="#000"/><rect x="2" y="7" width="1" height="1" fill="#000"/><rect x="3" y="7" width="8" height="1" fill="#ff00ff"/><rect x="11" y="7" width="1" height="1" fill="#000"/><rect x="13" y="7" width="1" height="1" fill="#000"/><rect x="2" y="8" width="1" height="1" fill="#000"/><rect x="3" y="8" width="8" height="1" fill="#ff00ff"/><rect x="11" y="8" width="1" height="1" fill="#000"/><rect x="13" y="8" width="1" height="1" fill="#000"/><rect x="2" y="9" width="2" height="1" fill="#000"/><rect x="4" y="9" width="6" height="1" fill="#ff00ff"/><rect x="10" y="9" width="2" height="1" fill="#000"/><rect x="13" y="9" width="2" height="1" fill="#000"/><rect x="4" y="10" width="6" height="1" fill="#000"/><rect x="13" y="10" width="2" height="1" fill="#000"/><rect x="13" y="11" width="2" height="1" fill="#000"/></svg>
<svg style="left:105px;top:95px" width="12" height="14" shape-rendering="crispEdges"><rect x="0" y="0" width="12" height="1" fill="#000"/><rect x="0" y="1" width="1" height="1" fill="#000"/><rect x="1" y="1" width="10" height="1" fill="#000080"/><rect x="11" y="1" width="1" height="1" fill="#000"/><rect x="0" y="2" width="1" height="1" fill="#000"/><rect x="1" y="2" width="10" height="1" fill="#fff"/><rect x="11" y="2" width="1" height="1" fill="#000"/><rect x="0" y="3" width="1" height="1" fill="#000"/><rect x="1" y="3" width="10" height="1" fill="#fff"/><rect x="11" y="3" width="1" height="1" fill="#000"/><rect x="0" y="4" width="1" height="1" fill="#000"/><rect x="1" y="4" width="1" height="1" fill="#fff"/><rect x="2" y="4" width="2" height="1" fill="#808080"/><rect x="4" y="4" width="2" height="1" fill="#fff"/><rect x="6" y="4" width="4" height="1" fill="#808080"/><rect x="10" y="4" width="1" height="1" fill="#fff"/><rect x="11" y="4" width="1" height="1" fill="#000"/><rect x="0" y="5" width="1" height="1" fill="#000"/><rect x="1" y="5" width="10" height="1" fill="#fff"/><rect x="11" y="5" width="1" height="1" fill="#000"/><rect x="0" y="6" width="1" height="1" fill="#000"/><rect x="1" y="6" width="1" height="1" fill="#fff"/><rect x="2" y="6" width="2" height="1" fill="#808080"/><rect x="4" y="6" width="2" height="1" fill="#fff"/><rect x="6" y="6" width="4" height="1" fill="#808080"/><rect x="10" y="6" width="1" height="1" fill="#fff"/><rect x="11" y="6" width="1" height="1" fill="#000"/><rect x="0" y="7" width="1" height="1" fill="#000"/><rect x="1" y="7" width="10" height="1" fill="#fff"/><rect x="11" y="7" width="1" height="1" fill="#000"/><rect x="0" y="8" width="12" height="1" fill="#000"/><rect x="2" y="10" width="7" height="1" fill="#000080"/><rect x="3" y="11" width="5" height="1" fill="#000080"/><rect x="4" y="12" width="3" height="1" fill="#000080"/><rect x="5" y="13" width="1" height="1" fill="#000080"/></svg>
<div class="a" style="left:125px;top:93px;width:1px;height:17px;background:#a0a0a0"></div>
<svg style="left:135px;top:95px" width="15" height="14" shape-rendering="crispEdges"><rect x="0" y="0" width="6" height="1" fill="#000"/><rect x="0" y="1" width="1" height="1" fill="#000"/><rect x="1" y="1" width="4" height="1" fill="#fff"/><rect x="5" y="1" width="1" height="1" fill="#000"/><rect x="0" y="2" width="1" height="1" fill="#000"/><rect x="1" y="2" width="4" height="1" fill="#fff"/><rect x="5" y="2" width="1" height="1" fill="#000"/><rect x="9" y="2" width="6" height="1" fill="#000"/><rect x="0" y="3" width="6" height="1" fill="#000"/><rect x="9" y="3" width="1" height="1" fill="#000"/><rect x="10" y="3" width="1" height="1" fill="#00ffff"/><rect x="11" y="3" width="1" height="1" fill="#fff"/><rect x="12" y="3" width="1" height="1" fill="#00ffff"/><rect x="13" y="3" width="1" height="1" fill="#fff"/><rect x="14" y="3" width="1" height="1" fill="#000"/><rect x="1" y="4" width="1" height="1" fill="#000"/><rect x="9" y="4" width="1" height="1" fill="#000"/><rect x="10" y="4" width="1" height="1" fill="#fff"/><rect x="11" y="4" width="1" height="1" fill="#00ffff"/><rect x="12" y="4" width="1" height="1" fill="#fff"/><rect x="13" y="4" width="1" height="1" fill="#00ffff"/><rect x="14" y="4" width="1" height="1" fill="#000"/><rect x="1" y="5" width="2" height="1" fill="#000"/><rect x="6" y="5" width="1" height="1" fill="#ff0000"/><rect x="9" y="5" width="6" height="1" fill="#000"/><rect x="2" y="6" width="1" height="1" fill="#000"/><rect x="4" y="6" width="3" height="1" fill="#ff0000"/><rect x="2" y="7" width="3" height="1" fill="#ff0000"/><rect x="6" y="7" width="1" height="1" fill="#ff0000"/><rect x="4" y="9" width="1" height="1" fill="#000"/><rect x="4" y="10" width="1" height="1" fill="#000"/><rect x="6" y="10" width="6" height="1" fill="#000"/><rect x="4" y="11" width="3" height="1" fill="#000"/><rect x="7" y="11" width="4" height="1" fill="#fff"/><rect x="11" y="11" width="1" height="1" fill="#000"/><rect x="6" y="12" width="1" height="1" fill="#000"/><rect x="7" y="12" width="4" height="1" fill="#fff"/><rect x="11" y="12" width="1" height="1" fill="#000"/><rect x="6" y="13" width="6" height="1" fill="#000"/></svg>
<svg style="left:158px;top:95px" width="15" height="14" shape-rendering="crispEdges"><rect x="0" y="0" width="6" height="1" fill="#000"/><rect x="0" y="1" width="1" height="1" fill="#000"/><rect x="1" y="1" width="4" height="1" fill="#fff"/><rect x="5" y="1" width="1" height="1" fill="#000"/><rect x="0" y="2" width="1" height="1" fill="#000"/><rect x="1" y="2" width="4" height="1" fill="#fff"/><rect x="5" y="2" width="1" height="1" fill="#000"/><rect x="9" y="2" width="6" height="1" fill="#000"/><rect x="0" y="3" width="6" height="1" fill="#000"/><rect x="8" y="3" width="1" height="1" fill="#000080"/><rect x="9" y="3" width="1" height="1" fill="#000"/><rect x="10" y="3" width="1" height="1" fill="#00ffff"/><rect x="11" y="3" width="1" height="1" fill="#fff"/><rect x="12" y="3" width="1" height="1" fill="#00ffff"/><rect x="13" y="3" width="1" height="1" fill="#fff"/><rect x="14" y="3" width="1" height="1" fill="#000"/><rect x="1" y="4" width="1" height="1" fill="#000"/><rect x="7" y="4" width="1" height="1" fill="#000080"/><rect x="9" y="4" width="1" height="1" fill="#000"/><rect x="10" y="4" width="1" height="1" fill="#fff"/><rect x="11" y="4" width="1" height="1" fill="#00ffff"/><rect x="12" y="4" width="1" height="1" fill="#fff"/><rect x="13" y="4" width="1" height="1" fill="#00ffff"/><rect x="14" y="4" width="1" height="1" fill="#000"/><rect x="1" y="5" width="2" height="1" fill="#000"/><rect x="6" y="5" width="1" height="1" fill="#000080"/><rect x="9" y="5" width="6" height="1" fill="#000"/><rect x="2" y="6" width="1" height="1" fill="#000"/><rect x="3" y="6" width="3" height="1" fill="#000080"/><rect x="2" y="7" width="2" height="1" fill="#000080"/><rect x="4" y="9" width="1" height="1" fill="#000"/><rect x="4" y="10" width="1" height="1" fill="#000"/><rect x="6" y="10" width="6" height="1" fill="#000"/><rect x="4" y="11" width="3" height="1" fill="#000"/><rect x="7" y="11" width="4" height="1" fill="#fff"/><rect x="11" y="11" width="1" height="1" fill="#000"/><rect x="6" y="12" width="1" height="1" fill="#000"/><rect x="7" y="12" width="4" height="1" fill="#fff"/><rect x="11" y="12" width="1" height="1" fill="#000"/><rect x="6" y="13" width="6" height="1" fill="#000"/></svg>
<svg style="left:181px;top:95px" width="13" height="14" shape-rendering="crispEdges"><rect x="0" y="0" width="6" height="1" fill="#000"/><rect x="0" y="1" width="1" height="1" fill="#000"/><rect x="1" y="1" width="4" height="1" fill="#fff"/><rect x="5" y="1" width="1" height="1" fill="#000"/><rect x="0" y="2" width="1" height="1" fill="#000"/><rect x="1" y="2" width="4" height="1" fill="#fff"/><rect x="5" y="2" width="1" height="1" fill="#000"/><rect x="0" y="3" width="6" height="1" fill="#000"/><rect x="1" y="4" width="1" height="1" fill="#000"/><rect x="1" y="5" width="1" height="1" fill="#000"/><rect x="3" y="5" width="6" height="1" fill="#000"/><rect x="1" y="6" width="3" height="1" fill="#000"/><rect x="4" y="6" width="4" height="1" fill="#fff"/><rect x="8" y="6" width="1" height="1" fill="#000"/><rect x="10" y="6" width="2" height="1" fill="#000080"/><rect x="1" y="7" width="1" height="1" fill="#000"/><rect x="3" y="7" width="1" height="1" fill="#000"/><rect x="4" y="7" width="4" height="1" fill="#fff"/><rect x="8" y="7" width="1" height="1" fill="#000"/><rect x="12" y="7" width="1" height="1" fill="#000080"/><rect x="1" y="8" width="1" height="1" fill="#000"/><rect x="3" y="8" width="6" height="1" fill="#000"/><rect x="12" y="8" width="1" height="1" fill="#000080"/><rect x="1" y="9" width="1" height="1" fill="#000"/><rect x="12" y="9" width="1" height="1" fill="#000080"/><rect x="1" y="10" width="1" height="1" fill="#000"/><rect x="3" y="10" width="6" height="1" fill="#000"/><rect x="12" y="10" width="1" height="1" fill="#000080"/><rect x="1" y="11" width="3" height="1" fill="#000"/><rect x="4" y="11" width="1" height="1" fill="#00ffff"/><rect x="5" y="11" width="1" height="1" fill="#fff"/><rect x="6" y="11" width="1" height="1" fill="#00ffff"/><rect x="7" y="11" width="1" height="1" fill="#fff"/><rect x="8" y="11" width="1" height="1" fill="#000"/><rect x="10" y="11" width="1" height="1" fill="#000080"/><rect x="12" y="11" width="1" height="1" fill="#000080"/><rect x="3" y="12" width="1" height="1" fill="#000"/><rect x="4" y="12" width="1" height="1" fill="#fff"/><rect x="5" y="12" width="1" height="1" fill="#00ffff"/><rect x="6" y="12" width="1" height="1" fill="#fff"/><rect x="7" y="12" width="1" height="1" fill="#00ffff"/><rect x="8" y="12" width="1" height="1" fill="#000"/><rect x="11" y="12" width="2" height="1" fill="#000080"/><rect x="3" y="13" width="6" height="1" fill="#000"/><rect x="10" y="13" width="3" height="1" fill="#000080"/></svg>
<svg style="left:204px;top:96px" width="14" height="13" shape-rendering="crispEdges"><rect x="0" y="0" width="2" height="1" fill="#ff0000"/><rect x="11" y="0" width="2" height="1" fill="#ff0000"/><rect x="0" y="1" width="3" height="1" fill="#ff0000"/><rect x="10" y="1" width="3" height="1" fill="#ff0000"/><rect x="1" y="2" width="3" height="1" fill="#ff0000"/><rect x="9" y="2" width="3" height="1" fill="#ff0000"/><rect x="2" y="3" width="3" height="1" fill="#ff0000"/><rect x="8" y="3" width="3" height="1" fill="#ff0000"/><rect x="3" y="4" width="3" height="1" fill="#ff0000"/><rect x="7" y="4" width="3" height="1" fill="#ff0000"/><rect x="4" y="5" width="5" height="1" fill="#ff0000"/><rect x="5" y="6" width="3" height="1" fill="#ff0000"/><rect x="4" y="7" width="5" height="1" fill="#ff0000"/><rect x="3" y="8" width="3" height="1" fill="#ff0000"/><rect x="7" y="8" width="3" height="1" fill="#ff0000"/><rect x="2" y="9" width="3" height="1" fill="#ff0000"/><rect x="8" y="9" width="3" height="1" fill="#ff0000"/><rect x="1" y="10" width="3" height="1" fill="#ff0000"/><rect x="9" y="10" width="3" height="1" fill="#ff0000"/><rect x="0" y="11" width="3" height="1" fill="#ff0000"/><rect x="10" y="11" width="3" height="1" fill="#ff0000"/><rect x="0" y="12" width="2" height="1" fill="#ff0000"/><rect x="11" y="12" width="1" height="1" fill="#ff0000"/><rect x="13" y="12" width="1" height="1" fill="#ff0000"/></svg>
<div class="a" style="left:0;top:114px;width:338px;height:629px;background:#fff"></div>
<div class="a" style="left:0;top:114px;width:339px;height:1px;background:#a0a0a0"></div>
<div class="a" style="left:1px;top:115px;width:338px;height:1px;background:#696969"></div>
<div class="a" style="left:0;top:114px;width:1px;height:627px;background:#a0a0a0"></div>
<div class="a" style="left:1px;top:115px;width:1px;height:626px;background:#696969"></div>
<div class="a" style="left:0;top:744px;width:1px;height:4px;background:#a0a0a0"></div>
<div class="a" style="left:5px;top:121px;width:9px;height:9px;border:1px solid #7f9db9;background:linear-gradient(#fff,#e0ddd0);border-radius:1px"></div>
<div class="a" style="left:7px;top:125px;width:5px;height:1px;background:#000"></div>
<div class="a" style="left:20px;top:139px;width:9px;height:9px;border:1px solid #7f9db9;background:linear-gradient(#fff,#e0ddd0);border-radius:1px"></div>
<div class="a" style="left:22px;top:143px;width:5px;height:1px;background:#000"></div>
<div class="a" style="left:35px;top:157px;width:9px;height:9px;border:1px solid #7f9db9;background:linear-gradient(#fff,#e0ddd0);border-radius:1px"></div>
<div class="a" style="left:37px;top:161px;width:5px;height:1px;background:#000"></div>
<div class="a" style="left:14px;top:125px;width:3px;height:1px;border-top:1px dotted #a0a0a0"></div>
<div class="a" style="left:24px;top:133px;width:1px;height:6px;border-left:1px dotted #a0a0a0"></div>
<div class="a" style="left:29px;top:143px;width:4px;height:1px;border-top:1px dotted #a0a0a0"></div>
<div class="a" style="left:39px;top:152px;width:1px;height:5px;border-left:1px dotted #a0a0a0"></div>
<div class="a" style="left:44px;top:161px;width:4px;height:1px;border-top:1px dotted #a0a0a0"></div>
<div class="a" style="left:54px;top:170px;width:1px;height:10px;border-left:1px dotted #a0a0a0"></div>
<div class="a" style="left:54px;top:179px;width:8px;height:1px;border-top:1px dotted #a0a0a0"></div>
<svg style="left:18px;top:118px" width="16" height="13" shape-rendering="crispEdges"><rect x="0" y="0" width="16" height="1" fill="#000"/><rect x="0" y="1" width="1" height="1" fill="#000"/><rect x="1" y="1" width="1" height="1" fill="#fff"/><rect x="2" y="1" width="1" height="1" fill="#000"/><rect x="3" y="1" width="1" height="1" fill="#fff"/><rect x="4" y="1" width="1" height="1" fill="#00ffff"/><rect x="5" y="1" width="1" height="1" fill="#fff"/><rect x="6" y="1" width="1" height="1" fill="#00ffff"/><rect x="7" y="1" width="1" height="1" fill="#fff"/><rect x="8" y="1" width="1" height="1" fill="#00ffff"/><rect x="9" y="1" width="1" height="1" fill="#fff"/><rect x="10" y="1" width="1" height="1" fill="#00ffff"/><rect x="11" y="1" width="1" height="1" fill="#fff"/><rect x="12" y="1" width="1" height="1" fill="#00ffff"/><rect x="13" y="1" width="1" height="1" fill="#000"/><rect x="14" y="1" width="1" height="1" fill="#fff"/><rect x="15" y="1" width="1" height="1" fill="#000"/><rect x="0" y="2" width="3" height="1" fill="#000"/><rect x="3" y="2" width="1" height="1" fill="#00ffff"/><rect x="4" y="2" width="1" height="1" fill="#fff"/><rect x="5" y="2" width="4" height="1" fill="#000"/><rect x="9" y="2" width="1" height="1" fill="#00ffff"/><rect x="10" y="2" width="1" height="1" fill="#fff"/><rect x="11" y="2" width="1" height="1" fill="#00ffff"/><rect x="12" y="2" width="1" height="1" fill="#fff"/><rect x="13" y="2" width="3" height="1" fill="#000"/><rect x="0" y="3" width="1" height="1" fill="#000"/><rect x="1" y="3" width="1" height="1" fill="#fff"/><rect x="2" y="3" width="1" height="1" fill="#000"/><rect x="3" y="3" width="1" height="1" fill="#fff"/><rect x="4" y="3" width="6" height="1" fill="#000"/><rect x="10" y="3" width="1" height="1" fill="#00ffff"/><rect x="11" y="3" width="1" height="1" fill="#fff"/><rect x="12" y="3" width="1" height="1" fill="#00ffff"/><rect x="13" y="3" width="1" height="1" fill="#000"/><rect x="14" y="3" width="1" height="1" fill="#fff"/><rect x="15" y="3" width="1" height="1" fill="#000"/><rect x="0" y="4" width="3" height="1" fill="#000"/><rect x="3" y="4" width="1" height="1" fill="#00ffff"/><rect x="4" y="4" width="6" height="1" fill="#000"/><rect x="10" y="4" width="1" height="1" fill="#fff"/><rect x="11" y="4" width="1" height="1" fill="#00ffff"/><rect x="12" y="4" width="1" height="1" fill="#fff"/><rect x="13" y="4" width="3" height="1" fill="#000"/><rect x="0" y="5" width="1" height="1" fill="#000"/><rect x="1" y="5" width="1" height="1" fill="#fff"/><rect x="2" y="5" width="1" height="1" fill="#000"/><rect x="3" y="5" width="1" height="1" fill="#fff"/><rect x="4" y="5" width="2" height="1" fill="#000"/><rect x="6" y="5" width="3" height="1" fill="#fff"/><rect x="9" y="5" width="1" height="1" fill="#000"/><rect x="10" y="5" width="1" height="1" fill="#00ffff"/><rect x="11" y="5" width="1" height="1" fill="#fff"/><rect x="12" y="5" width="1" height="1" fill="#00ffff"/><rect x="13" y="5" width="1" height="1" fill="#000"/><rect x="14" y="5" width="1" height="1" fill="#fff"/><rect x="15" y="5" width="1" height="1" fill="#000"/><rect x="0" y="6" width="3" height="1" fill="#000"/><rect x="3" y="6" width="1" height="1" fill="#00ffff"/><rect x="4" y="6" width="1" height="1" fill="#000"/><rect x="5" y="6" width="2" height="1" fill="#fff"/><rect x="7" y="6" width="2" height="1" fill="#a8a8a8"/><rect x="9" y="6" width="1" height="1" fill="#000"/><rect x="10" y="6" width="1" height="1" fill="#fff"/><rect x="11" y="6" width="1" height="1" fill="#00ffff"/><rect x="12" y="6" width="1" height="1" fill="#fff"/><rect x="13" y="6" width="3" height="1" fill="#000"/><rect x="0" y="7" width="1" height="1" fill="#000"/><rect x="1" y="7" width="1" height="1" fill="#fff"/><rect x="2" y="7" width="1" height="1" fill="#000"/><rect x="3" y="7" width="1" height="1" fill="#fff"/><rect x="4" y="7" width="1" height="1" fill="#000"/><rect x="5" y="7" width="2" height="1" fill="#fff"/><rect x="7" y="7" width="2" height="1" fill="#a8a8a8"/><rect x="9" y="7" width="1" height="1" fill="#000"/><rect x="10" y="7" width="1" height="1" fill="#00ffff"/><rect x="11" y="7" width="1" height="1" fill="#fff"/><rect x="12" y="7" width="1" height="1" fill="#00ffff"/><rect x="13" y="7" width="1" height="1" fill="#000"/><rect x="14" y="7" width="1" height="1" fill="#fff"/><rect x="15" y="7" width="1" height="1" fill="#000"/><rect x="0" y="8" width="3" height="1" fill="#000"/><rect x="3" y="8" width="1" height="1" fill="#00ffff"/><rect x="4" y="8" width="1" height="1" fill="#fff"/><rect x="5" y="8" width="4" height="1" fill="#000"/><rect x="9" y="8" width="1" height="1" fill="#00ffff"/><rect x="10" y="8" width="1" height="1" fill="#fff"/><rect x="11" y="8" width="1" height="1" fill="#00ffff"/><rect x="12" y="8" width="1" height="1" fill="#fff"/><rect x="13" y="8" width="3" height="1" fill="#000"/><rect x="0" y="9" width="1" height="1" fill="#000"/><rect x="1" y="9" width="1" height="1" fill="#fff"/><rect x="2" y="9" width="1" height="1" fill="#000"/><rect x="3" y="9" width="1" height="1" fill="#fff"/><rect x="4" y="9" width="3" height="1" fill="#ff0000"/><rect x="7" y="9" width="1" height="1" fill="#fff"/><rect x="8" y="9" width="4" height="1" fill="#ff0000"/><rect x="12" y="9" width="1" height="1" fill="#00ffff"/><rect x="13" y="9" width="1" height="1" fill="#000"/><rect x="14" y="9" width="1" height="1" fill="#fff"/><rect x="15" y="9" width="1" height="1" fill="#000"/><rect x="0" y="10" width="3" height="1" fill="#000"/><rect x="3" y="10" width="1" height="1" fill="#00ffff"/><rect x="4" y="10" width="8" height="1" fill="#ff0000"/><rect x="12" y="10" width="1" height="1" fill="#fff"/><rect x="13" y="10" width="3" height="1" fill="#000"/><rect x="0" y="11" width="1" height="1" fill="#000"/><rect x="1" y="11" width="1" height="1" fill="#fff"/><rect x="2" y="11" width="1" height="1" fill="#000"/><rect x="3" y="11" width="1" height="1" fill="#fff"/><rect x="4" y="11" width="8" height="1" fill="#ff0000"/><rect x="12" y="11" width="1" height="1" fill="#00ffff"/><rect x="13" y="11" width="1" height="1" fill="#000"/><rect x="14" y="11" width="1" height="1" fill="#fff"/><rect x="15" y="11" width="1" height="1" fill="#000"/><rect x="0" y="12" width="16" height="1" fill="#000"/></svg>
<div class="t" style="left:37px;top:119px">Сценарии</div>
<svg style="left:34px;top:135px" width="13" height="16" shape-rendering="crispEdges"><rect x="1" y="0" width="1" height="1" fill="#000"/><rect x="2" y="0" width="1" height="1" fill="#fff"/><rect x="3" y="0" width="1" height="1" fill="#000"/><rect x="4" y="0" width="1" height="1" fill="#fff"/><rect x="5" y="0" width="1" height="1" fill="#000"/><rect x="6" y="0" width="1" height="1" fill="#fff"/><rect x="7" y="0" width="1" height="1" fill="#000"/><rect x="8" y="0" width="1" height="1" fill="#fff"/><rect x="9" y="0" width="1" height="1" fill="#000"/><rect x="10" y="0" width="1" height="1" fill="#fff"/><rect x="11" y="0" width="1" height="1" fill="#000"/><rect x="1" y="1" width="11" height="1" fill="#000"/><rect x="0" y="2" width="1" height="1" fill="#808080"/><rect x="1" y="2" width="11" height="1" fill="#fff"/><rect x="12" y="2" width="1" height="1" fill="#000"/><rect x="0" y="3" width="1" height="1" fill="#808080"/><rect x="1" y="3" width="11" height="1" fill="#fff"/><rect x="12" y="3" width="1" height="1" fill="#000"/><rect x="0" y="4" width="1" height="1" fill="#808080"/><rect x="1" y="4" width="11" height="1" fill="#fff"/><rect x="12" y="4" width="1" height="1" fill="#000"/><rect x="0" y="5" width="1" height="1" fill="#808080"/><rect x="1" y="5" width="2" height="1" fill="#fff"/><rect x="3" y="5" width="3" height="1" fill="#0000ff"/><rect x="6" y="5" width="1" height="1" fill="#fff"/><rect x="7" y="5" width="3" height="1" fill="#0000ff"/><rect x="10" y="5" width="2" height="1" fill="#fff"/><rect x="12" y="5" width="1" height="1" fill="#000"/><rect x="0" y="6" width="1" height="1" fill="#808080"/><rect x="1" y="6" width="11" height="1" fill="#fff"/><rect x="12" y="6" width="1" height="1" fill="#000"/><rect x="0" y="7" width="1" height="1" fill="#808080"/><rect x="1" y="7" width="2" height="1" fill="#fff"/><rect x="3" y="7" width="7" height="1" fill="#0000ff"/><rect x="10" y="7" width="2" height="1" fill="#fff"/><rect x="12" y="7" width="1" height="1" fill="#000"/><rect x="0" y="8" width="1" height="1" fill="#808080"/><rect x="1" y="8" width="11" height="1" fill="#fff"/><rect x="12" y="8" width="1" height="1" fill="#000"/><rect x="0" y="9" width="1" height="1" fill="#808080"/><rect x="1" y="9" width="2" height="1" fill="#fff"/><rect x="3" y="9" width="7" height="1" fill="#0000ff"/><rect x="10" y="9" width="2" height="1" fill="#fff"/><rect x="12" y="9" width="1" height="1" fill="#000"/><rect x="0" y="10" width="1" height="1" fill="#808080"/><rect x="1" y="10" width="11" height="1" fill="#fff"/><rect x="12" y="10" width="1" height="1" fill="#000"/><rect x="0" y="11" width="1" height="1" fill="#808080"/><rect x="1" y="11" width="2" height="1" fill="#fff"/><rect x="3" y="11" width="7" height="1" fill="#0000ff"/><rect x="10" y="11" width="2" height="1" fill="#fff"/><rect x="12" y="11" width="1" height="1" fill="#000"/><rect x="0" y="12" width="1" height="1" fill="#808080"/><rect x="1" y="12" width="11" height="1" fill="#fff"/><rect x="12" y="12" width="1" height="1" fill="#000"/><rect x="0" y="13" width="1" height="1" fill="#808080"/><rect x="1" y="13" width="1" height="1" fill="#c0c0c0"/><rect x="2" y="13" width="10" height="1" fill="#fff"/><rect x="12" y="13" width="1" height="1" fill="#000"/><rect x="1" y="14" width="12" height="1" fill="#000"/><rect x="2" y="15" width="10" height="1" fill="#000"/></svg>
<div class="t" style="left:53px;top:137px">Текстовый файл (C:\Users\Daniil\Documents\Дедуктор\M</div>
<div class="a" style="left:66px;top:152px;width:273px;height:18px;background:#f0f0f0"></div>
<svg style="left:48px;top:153px" width="16" height="16" shape-rendering="crispEdges"><rect x="0" y="0" width="13" height="1" fill="#000"/><rect x="0" y="1" width="1" height="1" fill="#000"/><rect x="1" y="1" width="3" height="1" fill="#00ff00"/><rect x="4" y="1" width="1" height="1" fill="#000"/><rect x="5" y="1" width="3" height="1" fill="#00ff00"/><rect x="8" y="1" width="1" height="1" fill="#000"/><rect x="9" y="1" width="3" height="1" fill="#ff0000"/><rect x="12" y="1" width="1" height="1" fill="#000"/><rect x="0" y="2" width="1" height="1" fill="#000"/><rect x="1" y="2" width="3" height="1" fill="#00ff00"/><rect x="4" y="2" width="1" height="1" fill="#000"/><rect x="5" y="2" width="3" height="1" fill="#00ff00"/><rect x="8" y="2" width="1" height="1" fill="#000"/><rect x="9" y="2" width="3" height="1" fill="#ff0000"/><rect x="12" y="2" width="1" height="1" fill="#000"/><rect x="0" y="3" width="1" height="1" fill="#000"/><rect x="1" y="3" width="3" height="1" fill="#00ff00"/><rect x="4" y="3" width="1" height="1" fill="#000"/><rect x="5" y="3" width="3" height="1" fill="#00ff00"/><rect x="8" y="3" width="1" height="1" fill="#000"/><rect x="9" y="3" width="3" height="1" fill="#ff0000"/><rect x="12" y="3" width="1" height="1" fill="#000"/><rect x="0" y="4" width="13" height="1" fill="#000"/><rect x="0" y="5" width="1" height="1" fill="#000"/><rect x="1" y="5" width="3" height="1" fill="#ffff00"/><rect x="4" y="5" width="1" height="1" fill="#000"/><rect x="5" y="5" width="3" height="1" fill="#00ff00"/><rect x="8" y="5" width="1" height="1" fill="#000"/><rect x="9" y="5" width="3" height="1" fill="#ff0000"/><rect x="12" y="5" width="1" height="1" fill="#000"/><rect x="0" y="6" width="1" height="1" fill="#000"/><rect x="1" y="6" width="3" height="1" fill="#ffff00"/><rect x="4" y="6" width="1" height="1" fill="#000"/><rect x="5" y="6" width="3" height="1" fill="#00ff00"/><rect x="8" y="6" width="1" height="1" fill="#000"/><rect x="9" y="6" width="3" height="1" fill="#ff0000"/><rect x="12" y="6" width="1" height="1" fill="#000"/><rect x="0" y="7" width="1" height="1" fill="#000"/><rect x="1" y="7" width="3" height="1" fill="#ffff00"/><rect x="4" y="7" width="1" height="1" fill="#000"/><rect x="5" y="7" width="3" height="1" fill="#00ff00"/><rect x="8" y="7" width="5" height="1" fill="#000"/><rect x="0" y="8" width="9" height="1" fill="#000"/><rect x="9" y="8" width="4" height="1" fill="#00ffff"/><rect x="13" y="8" width="1" height="1" fill="#000"/><rect x="0" y="9" width="1" height="1" fill="#000"/><rect x="1" y="9" width="3" height="1" fill="#ff0000"/><rect x="4" y="9" width="1" height="1" fill="#000"/><rect x="5" y="9" width="2" height="1" fill="#00ff00"/><rect x="7" y="9" width="1" height="1" fill="#000"/><rect x="8" y="9" width="1" height="1" fill="#fff"/><rect x="9" y="9" width="5" height="1" fill="#00ffff"/><rect x="14" y="9" width="1" height="1" fill="#000"/><rect x="0" y="10" width="1" height="1" fill="#000"/><rect x="1" y="10" width="3" height="1" fill="#ff0000"/><rect x="4" y="10" width="1" height="1" fill="#000"/><rect x="5" y="10" width="2" height="1" fill="#00ff00"/><rect x="7" y="10" width="1" height="1" fill="#000"/><rect x="8" y="10" width="1" height="1" fill="#fff"/><rect x="9" y="10" width="5" height="1" fill="#00ffff"/><rect x="14" y="10" width="1" height="1" fill="#000"/><rect x="0" y="11" width="1" height="1" fill="#000"/><rect x="1" y="11" width="3" height="1" fill="#ff0000"/><rect x="4" y="11" width="1" height="1" fill="#000"/><rect x="5" y="11" width="2" height="1" fill="#00ff00"/><rect x="7" y="11" width="1" height="1" fill="#000"/><rect x="8" y="11" width="1" height="1" fill="#fff"/><rect x="9" y="11" width="5" height="1" fill="#00ffff"/><rect x="14" y="11" width="1" height="1" fill="#000"/><rect x="0" y="12" width="8" height="1" fill="#000"/><rect x="8" y="12" width="1" height="1" fill="#fff"/><rect x="9" y="12" width="5" height="1" fill="#00ffff"/><rect x="14" y="12" width="1" height="1" fill="#000"/><rect x="8" y="13" width="1" height="1" fill="#000"/><rect x="9" y="13" width="4" height="1" fill="#00ffff"/><rect x="13" y="13" width="2" height="1" fill="#000"/><rect x="9" y="14" width="4" height="1" fill="#000"/><rect x="14" y="14" width="2" height="1" fill="#000"/><rect x="14" y="15" width="2" height="1" fill="#000"/></svg>
<div class="t" style="left:68px;top:155px">Качество данных (П1, П2, П3, П4, П5, П6, П7, П8, П9, П10</div>
<svg style="left:63px;top:171px" width="16" height="16" shape-rendering="crispEdges"><rect x="0" y="0" width="13" height="1" fill="#000"/><rect x="0" y="1" width="1" height="1" fill="#000"/><rect x="1" y="1" width="3" height="1" fill="#00ff00"/><rect x="4" y="1" width="1" height="1" fill="#000"/><rect x="5" y="1" width="3" height="1" fill="#00ff00"/><rect x="8" y="1" width="1" height="1" fill="#000"/><rect x="9" y="1" width="3" height="1" fill="#ff0000"/><rect x="12" y="1" width="1" height="1" fill="#000"/><rect x="0" y="2" width="1" height="1" fill="#000"/><rect x="1" y="2" width="3" height="1" fill="#00ff00"/><rect x="4" y="2" width="1" height="1" fill="#000"/><rect x="5" y="2" width="3" height="1" fill="#00ff00"/><rect x="8" y="2" width="1" height="1" fill="#000"/><rect x="9" y="2" width="3" height="1" fill="#ff0000"/><rect x="12" y="2" width="1" height="1" fill="#000"/><rect x="0" y="3" width="1" height="1" fill="#000"/><rect x="1" y="3" width="3" height="1" fill="#00ff00"/><rect x="4" y="3" width="1" height="1" fill="#000"/><rect x="5" y="3" width="3" height="1" fill="#00ff00"/><rect x="8" y="3" width="1" height="1" fill="#000"/><rect x="9" y="3" width="3" height="1" fill="#ff0000"/><rect x="12" y="3" width="1" height="1" fill="#000"/><rect x="0" y="4" width="13" height="1" fill="#000"/><rect x="0" y="5" width="1" height="1" fill="#000"/><rect x="1" y="5" width="3" height="1" fill="#ffff00"/><rect x="4" y="5" width="1" height="1" fill="#000"/><rect x="5" y="5" width="3" height="1" fill="#00ff00"/><rect x="8" y="5" width="1" height="1" fill="#000"/><rect x="9" y="5" width="3" height="1" fill="#ff0000"/><rect x="12" y="5" width="1" height="1" fill="#000"/><rect x="0" y="6" width="1" height="1" fill="#000"/><rect x="1" y="6" width="3" height="1" fill="#ffff00"/><rect x="4" y="6" width="1" height="1" fill="#000"/><rect x="5" y="6" width="3" height="1" fill="#00ff00"/><rect x="8" y="6" width="1" height="1" fill="#000"/><rect x="9" y="6" width="3" height="1" fill="#ff0000"/><rect x="12" y="6" width="1" height="1" fill="#000"/><rect x="0" y="7" width="1" height="1" fill="#000"/><rect x="1" y="7" width="3" height="1" fill="#ffff00"/><rect x="4" y="7" width="1" height="1" fill="#000"/><rect x="5" y="7" width="3" height="1" fill="#00ff00"/><rect x="8" y="7" width="5" height="1" fill="#000"/><rect x="0" y="8" width="9" height="1" fill="#000"/><rect x="9" y="8" width="4" height="1" fill="#00ffff"/><rect x="13" y="8" width="1" height="1" fill="#000"/><rect x="0" y="9" width="1" height="1" fill="#000"/><rect x="1" y="9" width="3" height="1" fill="#ff0000"/><rect x="4" y="9" width="1" height="1" fill="#000"/><rect x="5" y="9" width="2" height="1" fill="#00ff00"/><rect x="7" y="9" width="1" height="1" fill="#000"/><rect x="8" y="9" width="1" height="1" fill="#fff"/><rect x="9" y="9" width="5" height="1" fill="#00ffff"/><rect x="14" y="9" width="1" height="1" fill="#000"/><rect x="0" y="10" width="1" height="1" fill="#000"/><rect x="1" y="10" width="3" height="1" fill="#ff0000"/><rect x="4" y="10" width="1" height="1" fill="#000"/><rect x="5" y="10" width="2" height="1" fill="#00ff00"/><rect x="7" y="10" width="1" height="1" fill="#000"/><rect x="8" y="10" width="1" height="1" fill="#fff"/><rect x="9" y="10" width="5" height="1" fill="#00ffff"/><rect x="14" y="10" width="1" height="1" fill="#000"/><rect x="0" y="11" width="1" height="1" fill="#000"/><rect x="1" y="11" width="3" height="1" fill="#ff0000"/><rect x="4" y="11" width="1" height="1" fill="#000"/><rect x="5" y="11" width="2" height="1" fill="#00ff00"/><rect x="7" y="11" width="1" height="1" fill="#000"/><rect x="8" y="11" width="1" height="1" fill="#fff"/><rect x="9" y="11" width="5" height="1" fill="#00ffff"/><rect x="14" y="11" width="1" height="1" fill="#000"/><rect x="0" y="12" width="8" height="1" fill="#000"/><rect x="8" y="12" width="1" height="1" fill="#fff"/><rect x="9" y="12" width="5" height="1" fill="#00ffff"/><rect x="14" y="12" width="1" height="1" fill="#000"/><rect x="8" y="13" width="1" height="1" fill="#000"/><rect x="9" y="13" width="4" height="1" fill="#00ffff"/><rect x="13" y="13" width="2" height="1" fill="#000"/><rect x="9" y="14" width="4" height="1" fill="#000"/><rect x="14" y="14" width="2" height="1" fill="#000"/><rect x="14" y="15" width="2" height="1" fill="#000"/></svg>
<div class="t" style="left:82px;top:173px">Качество данных (П2)</div>
<div class="a" style="left:338px;top:90px;width:8px;height:659px;background:#f0f0f0"></div>
<div class="a" style="left:2px;top:725px;width:337px;height:16px;background:#f0f0f0"></div>
<div class="a" style="left:19px;top:725px;width:206px;height:15px;background:#cdcdcd"></div>
<svg style="left:7px;top:729px" width="7" height="8"><path d="M5.5 0.5 L1.8 4 L5.5 7.5" fill="none" stroke="#505050" stroke-width="2"/></svg>
<svg style="left:326px;top:729px" width="7" height="8"><path d="M1.5 0.5 L5.2 4 L1.5 7.5" fill="none" stroke="#505050" stroke-width="2"/></svg>
<div class="a" style="left:0;top:743px;width:339px;height:1px;background:#a0a0a0"></div>
<div class="a" style="left:340px;top:69px;width:1px;height:679px;background:#a0a0a0"></div>
<div class="a" style="left:346px;top:69px;width:1019px;height:19px;border:1px solid #a0a0a0;border-bottom:1px solid #404040;border-right:1px solid #404040;background:#f0f0f0"></div>
<div class="a" style="left:347px;top:70px;width:1017px;height:1px;background:#fff"></div>
<div class="a" style="left:347px;top:70px;width:1px;height:17px;background:#fff"></div>
<div class="t" style="left:352px;top:74px">Оценка качества данных</div>
<div class="t n" style="left:1308px;top:73px;font-size:12px;font-weight:bold;line-height:14px">?</div>
<svg style="left:1323px;top:79px" width="7" height="4" shape-rendering="crispEdges"><rect x="0" y="0" width="7" height="1" fill="#000"/><rect x="1" y="1" width="5" height="1" fill="#000"/><rect x="2" y="2" width="3" height="1" fill="#000"/><rect x="3" y="3" width="1" height="1" fill="#000"/></svg>
<svg style="left:1337px;top:75px" width="9" height="10" shape-rendering="crispEdges"><rect x="1" y="0" width="7" height="2" fill="#000"/><rect x="1" y="0" width="1" height="8" fill="#000"/><rect x="7" y="0" width="1" height="8" fill="#000"/><rect x="1" y="7" width="7" height="1" fill="#000"/><rect x="0" y="3" width="1" height="1" fill="#000"/><rect x="0" y="9" width="1" height="1" fill="#000"/><rect x="1" y="8" width="1" height="1" fill="#000"/><rect x="6" y="9" width="1" height="1" fill="#000"/></svg>
<svg style="left:1352px;top:75px" width="8" height="8"><path d="M0.5 0.5 L7.5 7.5 M7.5 0.5 L0.5 7.5" stroke="#000" stroke-width="1.6"/></svg>
<svg style="left:348px;top:92px" width="20" height="16" shape-rendering="crispEdges"><rect x="8" y="4" width="1" height="3" fill="#000"/><rect x="7" y="7" width="3" height="1" fill="#000"/><rect x="5" y="8" width="2" height="1" fill="#000"/><rect x="10" y="8" width="2" height="1" fill="#000"/><rect x="5" y="9" width="1" height="1" fill="#000"/><rect x="11" y="9" width="1" height="1" fill="#000"/><rect x="4" y="10" width="1" height="2" fill="#000"/><rect x="6" y="10" width="1" height="2" fill="#000"/><rect x="10" y="10" width="1" height="2" fill="#000"/><rect x="12" y="10" width="1" height="2" fill="#000"/><rect x="3" y="12" width="5" height="2" fill="#0000ff"/><rect x="9" y="12" width="5" height="2" fill="#0000ff"/><rect x="4" y="12" width="3" height="1" fill="#00ffff"/><rect x="10" y="12" width="3" height="1" fill="#00ffff"/><rect x="4" y="14" width="3" height="1" fill="#808040"/><rect x="10" y="14" width="3" height="1" fill="#808040"/><rect x="16" y="3" width="1" height="10" fill="#000080"/><rect x="14" y="11" width="5" height="1" fill="#000080"/><rect x="15" y="12" width="3" height="1" fill="#000080"/><rect x="16" y="13" width="1" height="1" fill="#000080"/></svg>
<svg style="left:374px;top:99px" width="7" height="4" shape-rendering="crispEdges"><rect x="0" y="0" width="7" height="1" fill="#000"/><rect x="1" y="1" width="5" height="1" fill="#000"/><rect x="2" y="2" width="3" height="1" fill="#000"/><rect x="3" y="3" width="1" height="1" fill="#000"/></svg>
<div class="a" style="left:387px;top:93px;width:1px;height:17px;background:#a0a0a0"></div>
<svg style="left:398px;top:93px" width="15" height="14" shape-rendering="crispEdges"><rect x="8" y="1" width="5" height="1" fill="#a0a0a0"/><rect x="9" y="2" width="3" height="1" fill="#a0a0a0"/><rect x="10" y="3" width="1" height="1" fill="#a0a0a0"/><rect x="4" y="6" width="1" height="1" fill="#a0a0a0"/><rect x="10" y="6" width="1" height="1" fill="#a0a0a0"/><rect x="2" y="7" width="1" height="1" fill="#a0a0a0"/><rect x="4" y="7" width="1" height="1" fill="#a0a0a0"/><rect x="6" y="7" width="1" height="1" fill="#a0a0a0"/><rect x="10" y="7" width="1" height="1" fill="#a0a0a0"/><rect x="2" y="8" width="1" height="1" fill="#a0a0a0"/><rect x="4" y="8" width="1" height="1" fill="#a0a0a0"/><rect x="6" y="8" width="1" height="1" fill="#a0a0a0"/><rect x="10" y="8" width="1" height="1" fill="#a0a0a0"/><rect x="12" y="8" width="1" height="1" fill="#a0a0a0"/><rect x="0" y="9" width="1" height="1" fill="#a0a0a0"/><rect x="2" y="9" width="1" height="1" fill="#a0a0a0"/><rect x="4" y="9" width="1" height="1" fill="#a0a0a0"/><rect x="6" y="9" width="1" height="1" fill="#a0a0a0"/><rect x="8" y="9" width="1" height="1" fill="#a0a0a0"/><rect x="10" y="9" width="1" height="1" fill="#a0a0a0"/><rect x="12" y="9" width="1" height="1" fill="#a0a0a0"/><rect x="0" y="10" width="1" height="1" fill="#a0a0a0"/><rect x="2" y="10" width="1" height="1" fill="#a0a0a0"/><rect x="4" y="10" width="1" height="1" fill="#a0a0a0"/><rect x="6" y="10" width="1" height="1" fill="#a0a0a0"/><rect x="8" y="10" width="1" height="1" fill="#a0a0a0"/><rect x="10" y="10" width="1" height="1" fill="#a0a0a0"/><rect x="12" y="10" width="1" height="1" fill="#a0a0a0"/><rect x="0" y="11" width="1" height="1" fill="#a0a0a0"/><rect x="2" y="11" width="1" height="1" fill="#a0a0a0"/><rect x="4" y="11" width="1" height="1" fill="#a0a0a0"/><rect x="6" y="11" width="1" height="1" fill="#a0a0a0"/><rect x="8" y="11" width="1" height="1" fill="#a0a0a0"/><rect x="10" y="11" width="1" height="1" fill="#a0a0a0"/><rect x="12" y="11" width="1" height="1" fill="#a0a0a0"/><rect x="0" y="12" width="1" height="1" fill="#a0a0a0"/><rect x="2" y="12" width="1" height="1" fill="#a0a0a0"/><rect x="4" y="12" width="1" height="1" fill="#a0a0a0"/><rect x="6" y="12" width="1" height="1" fill="#a0a0a0"/><rect x="8" y="12" width="1" height="1" fill="#a0a0a0"/><rect x="10" y="12" width="1" height="1" fill="#a0a0a0"/><rect x="12" y="12" width="1" height="1" fill="#a0a0a0"/><rect x="0" y="13" width="1" height="1" fill="#a0a0a0"/><rect x="2" y="13" width="1" height="1" fill="#a0a0a0"/><rect x="4" y="13" width="1" height="1" fill="#a0a0a0"/><rect x="6" y="13" width="1" height="1" fill="#a0a0a0"/><rect x="8" y="13" width="1" height="1" fill="#a0a0a0"/><rect x="10" y="13" width="1" height="1" fill="#a0a0a0"/><rect x="12" y="13" width="1" height="1" fill="#a0a0a0"/></svg>
<svg style="left:420px;top:99px" width="7" height="4" shape-rendering="crispEdges"><rect x="0" y="0" width="7" height="1" fill="#707070"/><rect x="1" y="1" width="5" height="1" fill="#707070"/><rect x="2" y="2" width="3" height="1" fill="#707070"/><rect x="3" y="3" width="1" height="1" fill="#707070"/></svg>
<svg style="left:436px;top:93px" width="15" height="14" shape-rendering="crispEdges"><rect x="10" y="0" width="1" height="1" fill="#a0a0a0"/><rect x="10" y="1" width="1" height="1" fill="#a0a0a0"/><rect x="0" y="2" width="1" height="1" fill="#a0a0a0"/><rect x="10" y="2" width="1" height="1" fill="#a0a0a0"/><rect x="0" y="3" width="2" height="1" fill="#a0a0a0"/><rect x="10" y="3" width="1" height="1" fill="#a0a0a0"/><rect x="0" y="4" width="14" height="1" fill="#a0a0a0"/><rect x="0" y="5" width="2" height="1" fill="#a0a0a0"/><rect x="10" y="5" width="1" height="1" fill="#a0a0a0"/><rect x="0" y="6" width="1" height="1" fill="#a0a0a0"/><rect x="4" y="6" width="1" height="1" fill="#a0a0a0"/><rect x="10" y="6" width="1" height="1" fill="#a0a0a0"/><rect x="2" y="7" width="1" height="1" fill="#a0a0a0"/><rect x="4" y="7" width="1" height="1" fill="#a0a0a0"/><rect x="6" y="7" width="1" height="1" fill="#a0a0a0"/><rect x="10" y="7" width="1" height="1" fill="#a0a0a0"/><rect x="2" y="8" width="1" height="1" fill="#a0a0a0"/><rect x="4" y="8" width="1" height="1" fill="#a0a0a0"/><rect x="6" y="8" width="1" height="1" fill="#a0a0a0"/><rect x="10" y="8" width="1" height="1" fill="#a0a0a0"/><rect x="12" y="8" width="1" height="1" fill="#a0a0a0"/><rect x="0" y="9" width="1" height="1" fill="#a0a0a0"/><rect x="2" y="9" width="1" height="1" fill="#a0a0a0"/><rect x="4" y="9" width="1" height="1" fill="#a0a0a0"/><rect x="6" y="9" width="1" height="1" fill="#a0a0a0"/><rect x="8" y="9" width="1" height="1" fill="#a0a0a0"/><rect x="10" y="9" width="1" height="1" fill="#a0a0a0"/><rect x="12" y="9" width="1" height="1" fill="#a0a0a0"/><rect x="0" y="10" width="1" height="1" fill="#a0a0a0"/><rect x="2" y="10" width="1" height="1" fill="#a0a0a0"/><rect x="4" y="10" width="1" height="1" fill="#a0a0a0"/><rect x="6" y="10" width="1" height="1" fill="#a0a0a0"/><rect x="8" y="10" width="1" height="1" fill="#a0a0a0"/><rect x="10" y="10" width="1" height="1" fill="#a0a0a0"/><rect x="12" y="10" width="1" height="1" fill="#a0a0a0"/><rect x="0" y="11" width="1" height="1" fill="#a0a0a0"/><rect x="2" y="11" width="1" height="1" fill="#a0a0a0"/><rect x="4" y="11" width="1" height="1" fill="#a0a0a0"/><rect x="6" y="11" width="1" height="1" fill="#a0a0a0"/><rect x="8" y="11" width="1" height="1" fill="#a0a0a0"/><rect x="10" y="11" width="1" height="1" fill="#a0a0a0"/><rect x="12" y="11" width="1" height="1" fill="#a0a0a0"/><rect x="0" y="12" width="1" height="1" fill="#a0a0a0"/><rect x="2" y="12" width="1" height="1" fill="#a0a0a0"/><rect x="4" y="12" width="1" height="1" fill="#a0a0a0"/><rect x="6" y="12" width="1" height="1" fill="#a0a0a0"/><rect x="8" y="12" width="1" height="1" fill="#a0a0a0"/><rect x="10" y="12" width="1" height="1" fill="#a0a0a0"/><rect x="12" y="12" width="1" height="1" fill="#a0a0a0"/><rect x="0" y="13" width="1" height="1" fill="#a0a0a0"/><rect x="2" y="13" width="1" height="1" fill="#a0a0a0"/><rect x="4" y="13" width="1" height="1" fill="#a0a0a0"/><rect x="6" y="13" width="1" height="1" fill="#a0a0a0"/><rect x="8" y="13" width="1" height="1" fill="#a0a0a0"/><rect x="10" y="13" width="1" height="1" fill="#a0a0a0"/><rect x="12" y="13" width="1" height="1" fill="#a0a0a0"/></svg>
<svg style="left:458px;top:99px" width="7" height="4" shape-rendering="crispEdges"><rect x="0" y="0" width="7" height="1" fill="#707070"/><rect x="1" y="1" width="5" height="1" fill="#707070"/><rect x="2" y="2" width="3" height="1" fill="#707070"/><rect x="3" y="3" width="1" height="1" fill="#707070"/></svg>
<svg style="left:474px;top:93px" width="15" height="14" shape-rendering="crispEdges"><rect x="0" y="0" width="1" height="1" fill="#ff0000"/><rect x="0" y="1" width="2" height="1" fill="#ff0000"/><rect x="10" y="1" width="1" height="1" fill="#000080"/><rect x="0" y="2" width="13" height="1" fill="#ff0000"/><rect x="0" y="3" width="2" height="1" fill="#ff0000"/><rect x="10" y="3" width="1" height="1" fill="#000080"/><rect x="0" y="4" width="1" height="1" fill="#ff0000"/><rect x="10" y="4" width="1" height="1" fill="#000080"/><rect x="10" y="5" width="1" height="1" fill="#000080"/><rect x="10" y="6" width="1" height="1" fill="#000080"/><rect x="4" y="7" width="1" height="1" fill="#000080"/><rect x="10" y="7" width="1" height="1" fill="#000080"/><rect x="2" y="8" width="1" height="1" fill="#000080"/><rect x="4" y="8" width="1" height="1" fill="#000080"/><rect x="6" y="8" width="1" height="1" fill="#000080"/><rect x="10" y="8" width="1" height="1" fill="#000080"/><rect x="2" y="9" width="1" height="1" fill="#000080"/><rect x="4" y="9" width="1" height="1" fill="#000080"/><rect x="6" y="9" width="1" height="1" fill="#000080"/><rect x="10" y="9" width="1" height="1" fill="#000080"/><rect x="12" y="9" width="1" height="1" fill="#000080"/><rect x="0" y="10" width="1" height="1" fill="#000080"/><rect x="2" y="10" width="1" height="1" fill="#000080"/><rect x="4" y="10" width="1" height="1" fill="#000080"/><rect x="6" y="10" width="1" height="1" fill="#000080"/><rect x="8" y="10" width="1" height="1" fill="#000080"/><rect x="10" y="10" width="1" height="1" fill="#000080"/><rect x="12" y="10" width="1" height="1" fill="#000080"/><rect x="0" y="11" width="1" height="1" fill="#000080"/><rect x="2" y="11" width="1" height="1" fill="#000080"/><rect x="4" y="11" width="1" height="1" fill="#000080"/><rect x="6" y="11" width="1" height="1" fill="#000080"/><rect x="8" y="11" width="1" height="1" fill="#000080"/><rect x="10" y="11" width="1" height="1" fill="#000080"/><rect x="12" y="11" width="1" height="1" fill="#000080"/><rect x="0" y="12" width="1" height="1" fill="#000080"/><rect x="2" y="12" width="1" height="1" fill="#000080"/><rect x="4" y="12" width="1" height="1" fill="#000080"/><rect x="6" y="12" width="1" height="1" fill="#000080"/><rect x="8" y="12" width="1" height="1" fill="#000080"/><rect x="10" y="12" width="1" height="1" fill="#000080"/><rect x="12" y="12" width="1" height="1" fill="#000080"/><rect x="0" y="13" width="1" height="1" fill="#000080"/><rect x="2" y="13" width="1" height="1" fill="#000080"/><rect x="4" y="13" width="1" height="1" fill="#000080"/><rect x="6" y="13" width="1" height="1" fill="#000080"/><rect x="8" y="13" width="1" height="1" fill="#000080"/><rect x="10" y="13" width="1" height="1" fill="#000080"/><rect x="12" y="13" width="1" height="1" fill="#000080"/></svg>
<svg style="left:496px;top:99px" width="7" height="4" shape-rendering="crispEdges"><rect x="0" y="0" width="7" height="1" fill="#000"/><rect x="1" y="1" width="5" height="1" fill="#000"/><rect x="2" y="2" width="3" height="1" fill="#000"/><rect x="3" y="3" width="1" height="1" fill="#000"/></svg>
<svg style="left:512px;top:93px" width="14" height="16" shape-rendering="crispEdges"><rect x="0" y="0" width="1" height="1" fill="#000"/><rect x="3" y="0" width="1" height="1" fill="#000"/><rect x="6" y="1" width="1" height="1" fill="#000"/><rect x="7" y="3" width="1" height="1" fill="#000"/><rect x="6" y="5" width="5" height="1" fill="#000"/><rect x="7" y="6" width="3" height="1" fill="#000"/><rect x="8" y="7" width="1" height="1" fill="#000"/><rect x="5" y="8" width="7" height="1" fill="#000080"/><rect x="5" y="9" width="1" height="1" fill="#000080"/><rect x="6" y="9" width="5" height="1" fill="#fff"/><rect x="11" y="9" width="1" height="1" fill="#000080"/><rect x="12" y="9" width="1" height="1" fill="#808080"/><rect x="5" y="10" width="1" height="1" fill="#000080"/><rect x="6" y="10" width="5" height="1" fill="#fff"/><rect x="11" y="10" width="1" height="1" fill="#000080"/><rect x="12" y="10" width="1" height="1" fill="#808080"/><rect x="5" y="11" width="1" height="1" fill="#000080"/><rect x="6" y="11" width="5" height="1" fill="#fff"/><rect x="11" y="11" width="1" height="1" fill="#000080"/><rect x="12" y="11" width="1" height="1" fill="#808080"/><rect x="5" y="12" width="1" height="1" fill="#000080"/><rect x="6" y="12" width="5" height="1" fill="#fff"/><rect x="11" y="12" width="1" height="1" fill="#000080"/><rect x="12" y="12" width="1" height="1" fill="#808080"/><rect x="5" y="13" width="1" height="1" fill="#000080"/><rect x="6" y="13" width="5" height="1" fill="#fff"/><rect x="11" y="13" width="1" height="1" fill="#000080"/><rect x="12" y="13" width="1" height="1" fill="#808080"/><rect x="5" y="14" width="7" height="1" fill="#000080"/><rect x="12" y="14" width="1" height="1" fill="#808080"/><rect x="6" y="15" width="7" height="1" fill="#808080"/></svg>
<svg style="left:533px;top:95px" width="16" height="11" shape-rendering="crispEdges"><rect x="5" y="0" width="1" height="1" fill="#000"/><rect x="4" y="1" width="2" height="1" fill="#000"/><rect x="15" y="1" width="1" height="1" fill="#000"/><rect x="3" y="2" width="1" height="1" fill="#000"/><rect x="5" y="2" width="1" height="1" fill="#000"/><rect x="14" y="2" width="2" height="1" fill="#000"/><rect x="2" y="3" width="1" height="1" fill="#000"/><rect x="5" y="3" width="1" height="1" fill="#000"/><rect x="13" y="3" width="1" height="1" fill="#000"/><rect x="15" y="3" width="1" height="1" fill="#000"/><rect x="1" y="4" width="1" height="1" fill="#000"/><rect x="12" y="4" width="1" height="1" fill="#000"/><rect x="0" y="5" width="5" height="1" fill="#000"/><rect x="7" y="5" width="5" height="1" fill="#000"/><rect x="0" y="6" width="1" height="1" fill="#000"/><rect x="1" y="6" width="1" height="1" fill="#00ffff"/><rect x="2" y="6" width="1" height="1" fill="#fff"/><rect x="3" y="6" width="1" height="1" fill="#00ffff"/><rect x="4" y="6" width="1" height="1" fill="#000"/><rect x="7" y="6" width="1" height="1" fill="#000"/><rect x="8" y="6" width="1" height="1" fill="#00ffff"/><rect x="9" y="6" width="1" height="1" fill="#fff"/><rect x="10" y="6" width="1" height="1" fill="#00ffff"/><rect x="11" y="6" width="1" height="1" fill="#000"/><rect x="0" y="7" width="1" height="1" fill="#000"/><rect x="1" y="7" width="1" height="1" fill="#fff"/><rect x="2" y="7" width="1" height="1" fill="#00ffff"/><rect x="3" y="7" width="1" height="1" fill="#fff"/><rect x="4" y="7" width="4" height="1" fill="#000"/><rect x="8" y="7" width="1" height="1" fill="#fff"/><rect x="9" y="7" width="1" height="1" fill="#00ffff"/><rect x="10" y="7" width="1" height="1" fill="#fff"/><rect x="11" y="7" width="1" height="1" fill="#000"/><rect x="0" y="8" width="1" height="1" fill="#000"/><rect x="1" y="8" width="1" height="1" fill="#00ffff"/><rect x="2" y="8" width="1" height="1" fill="#fff"/><rect x="3" y="8" width="1" height="1" fill="#00ffff"/><rect x="4" y="8" width="1" height="1" fill="#000"/><rect x="7" y="8" width="1" height="1" fill="#000"/><rect x="8" y="8" width="1" height="1" fill="#00ffff"/><rect x="9" y="8" width="1" height="1" fill="#fff"/><rect x="10" y="8" width="1" height="1" fill="#00ffff"/><rect x="11" y="8" width="1" height="1" fill="#000"/><rect x="0" y="9" width="1" height="1" fill="#000"/><rect x="1" y="9" width="1" height="1" fill="#fff"/><rect x="2" y="9" width="1" height="1" fill="#00ffff"/><rect x="3" y="9" width="1" height="1" fill="#fff"/><rect x="4" y="9" width="1" height="1" fill="#000"/><rect x="7" y="9" width="1" height="1" fill="#000"/><rect x="8" y="9" width="1" height="1" fill="#fff"/><rect x="9" y="9" width="1" height="1" fill="#00ffff"/><rect x="10" y="9" width="1" height="1" fill="#fff"/><rect x="11" y="9" width="1" height="1" fill="#000"/><rect x="0" y="10" width="5" height="1" fill="#000"/><rect x="7" y="10" width="5" height="1" fill="#000"/></svg>
<svg style="left:556px;top:94px" width="15" height="15" shape-rendering="crispEdges"><rect x="5" y="0" width="5" height="1" fill="#000080"/><rect x="3" y="1" width="9" height="1" fill="#000080"/><rect x="2" y="2" width="5" height="1" fill="#000080"/><rect x="7" y="2" width="2" height="1" fill="#fff"/><rect x="9" y="2" width="4" height="1" fill="#000080"/><rect x="1" y="3" width="5" height="1" fill="#000080"/><rect x="6" y="3" width="4" height="1" fill="#fff"/><rect x="10" y="3" width="4" height="1" fill="#000080"/><rect x="1" y="4" width="5" height="1" fill="#000080"/><rect x="6" y="4" width="4" height="1" fill="#fff"/><rect x="10" y="4" width="4" height="1" fill="#000080"/><rect x="0" y="5" width="7" height="1" fill="#000080"/><rect x="7" y="5" width="2" height="1" fill="#fff"/><rect x="9" y="5" width="6" height="1" fill="#000080"/><rect x="0" y="6" width="15" height="1" fill="#000080"/><rect x="0" y="7" width="5" height="1" fill="#000080"/><rect x="5" y="7" width="4" height="1" fill="#fff"/><rect x="9" y="7" width="6" height="1" fill="#000080"/><rect x="0" y="8" width="6" height="1" fill="#000080"/><rect x="6" y="8" width="3" height="1" fill="#fff"/><rect x="9" y="8" width="6" height="1" fill="#000080"/><rect x="1" y="9" width="5" height="1" fill="#000080"/><rect x="6" y="9" width="3" height="1" fill="#fff"/><rect x="9" y="9" width="5" height="1" fill="#000080"/><rect x="1" y="10" width="5" height="1" fill="#000080"/><rect x="6" y="10" width="3" height="1" fill="#fff"/><rect x="9" y="10" width="5" height="1" fill="#000080"/><rect x="2" y="11" width="3" height="1" fill="#000080"/><rect x="5" y="11" width="6" height="1" fill="#fff"/><rect x="11" y="11" width="2" height="1" fill="#000080"/><rect x="3" y="12" width="9" height="1" fill="#000080"/><rect x="5" y="13" width="5" height="1" fill="#000080"/></svg>
<svg style="left:580px;top:93px" width="16" height="16" shape-rendering="crispEdges"><rect x="4" y="0" width="10" height="1" fill="#208020"/><rect x="3" y="1" width="1" height="1" fill="#208020"/><rect x="4" y="1" width="9" height="1" fill="#80c080"/><rect x="13" y="1" width="1" height="1" fill="#208020"/><rect x="2" y="2" width="1" height="1" fill="#208020"/><rect x="3" y="2" width="1" height="1" fill="#80c080"/><rect x="4" y="2" width="10" height="1" fill="#208020"/><rect x="1" y="3" width="1" height="1" fill="#208020"/><rect x="2" y="3" width="1" height="1" fill="#80c080"/><rect x="3" y="3" width="1" height="1" fill="#208020"/><rect x="14" y="3" width="1" height="1" fill="#808080"/><rect x="0" y="4" width="1" height="1" fill="#208020"/><rect x="1" y="4" width="1" height="1" fill="#80c080"/><rect x="2" y="4" width="1" height="1" fill="#208020"/><rect x="4" y="4" width="11" height="1" fill="#f4f8f4"/><rect x="15" y="4" width="1" height="1" fill="#808080"/><rect x="0" y="5" width="1" height="1" fill="#208020"/><rect x="1" y="5" width="1" height="1" fill="#80c080"/><rect x="3" y="5" width="12" height="1" fill="#f4f8f4"/><rect x="15" y="5" width="1" height="1" fill="#808080"/><rect x="0" y="6" width="1" height="1" fill="#208020"/><rect x="1" y="6" width="1" height="1" fill="#80c080"/><rect x="3" y="6" width="1" height="1" fill="#f4f8f4"/><rect x="4" y="6" width="3" height="1" fill="#208020"/><rect x="7" y="6" width="4" height="1" fill="#f4f8f4"/><rect x="11" y="6" width="3" height="1" fill="#208020"/><rect x="14" y="6" width="1" height="1" fill="#f4f8f4"/><rect x="15" y="6" width="1" height="1" fill="#808080"/><rect x="0" y="7" width="1" height="1" fill="#208020"/><rect x="1" y="7" width="1" height="1" fill="#80c080"/><rect x="3" y="7" width="2" height="1" fill="#f4f8f4"/><rect x="5" y="7" width="3" height="1" fill="#208020"/><rect x="8" y="7" width="2" height="1" fill="#f4f8f4"/><rect x="10" y="7" width="3" height="1" fill="#208020"/><rect x="13" y="7" width="2" height="1" fill="#f4f8f4"/><rect x="15" y="7" width="1" height="1" fill="#808080"/><rect x="0" y="8" width="1" height="1" fill="#208020"/><rect x="1" y="8" width="1" height="1" fill="#80c080"/><rect x="3" y="8" width="3" height="1" fill="#f4f8f4"/><rect x="6" y="8" width="6" height="1" fill="#208020"/><rect x="12" y="8" width="3" height="1" fill="#f4f8f4"/><rect x="15" y="8" width="1" height="1" fill="#808080"/><rect x="0" y="9" width="1" height="1" fill="#208020"/><rect x="1" y="9" width="1" height="1" fill="#80c080"/><rect x="3" y="9" width="4" height="1" fill="#f4f8f4"/><rect x="7" y="9" width="4" height="1" fill="#208020"/><rect x="11" y="9" width="4" height="1" fill="#f4f8f4"/><rect x="15" y="9" width="1" height="1" fill="#808080"/><rect x="0" y="10" width="1" height="1" fill="#208020"/><rect x="1" y="10" width="1" height="1" fill="#80c080"/><rect x="3" y="10" width="3" height="1" fill="#f4f8f4"/><rect x="6" y="10" width="6" height="1" fill="#208020"/><rect x="12" y="10" width="3" height="1" fill="#f4f8f4"/><rect x="15" y="10" width="1" height="1" fill="#808080"/><rect x="0" y="11" width="1" height="1" fill="#208020"/><rect x="1" y="11" width="1" height="1" fill="#80c080"/><rect x="3" y="11" width="2" height="1" fill="#f4f8f4"/><rect x="5" y="11" width="3" height="1" fill="#208020"/><rect x="8" y="11" width="2" height="1" fill="#f4f8f4"/><rect x="10" y="11" width="3" height="1" fill="#208020"/><rect x="13" y="11" width="2" height="1" fill="#f4f8f4"/><rect x="15" y="11" width="1" height="1" fill="#808080"/><rect x="0" y="12" width="1" height="1" fill="#208020"/><rect x="1" y="12" width="1" height="1" fill="#80c080"/><rect x="3" y="12" width="1" height="1" fill="#f4f8f4"/><rect x="4" y="12" width="3" height="1" fill="#208020"/><rect x="7" y="12" width="4" height="1" fill="#f4f8f4"/><rect x="11" y="12" width="3" height="1" fill="#208020"/><rect x="14" y="12" width="1" height="1" fill="#f4f8f4"/><rect x="15" y="12" width="1" height="1" fill="#808080"/><rect x="1" y="13" width="1" height="1" fill="#208020"/><rect x="2" y="13" width="1" height="1" fill="#80c080"/><rect x="3" y="13" width="12" height="1" fill="#f4f8f4"/><rect x="15" y="13" width="1" height="1" fill="#808080"/><rect x="2" y="14" width="1" height="1" fill="#208020"/><rect x="3" y="14" width="12" height="1" fill="#f4f8f4"/><rect x="15" y="14" width="1" height="1" fill="#808080"/><rect x="3" y="15" width="13" height="1" fill="#808080"/></svg>
<svg style="left:603px;top:99px" width="7" height="4" shape-rendering="crispEdges"><rect x="0" y="0" width="7" height="1" fill="#000"/><rect x="1" y="1" width="5" height="1" fill="#000"/><rect x="2" y="2" width="3" height="1" fill="#000"/><rect x="3" y="3" width="1" height="1" fill="#000"/></svg>
<div class="a" style="left:347px;top:88px;width:1017px;height:1px;background:#fff"></div>
<div class="a" style="left:1365px;top:88px;width:1px;height:26px;background:#a0a0a0"></div>
<div class="a" style="left:346px;top:113px;width:1015px;height:630px;background:#fff"></div>
<div class="a" style="left:346px;top:113px;width:1015px;height:59px;background:#f0f0f0"></div>
<div class="a" style="left:346px;top:113px;width:48px;height:630px;background:#f0f0f0"></div>
<div class="a" style="left:395px;top:173px;width:956px;height:271px;background:#f0f0f0"></div>
<div class="a" style="left:345px;top:113px;width:1px;height:632px;background:#fff"></div>
<div class="a" style="left:346px;top:113px;width:1020px;height:1px;background:#a0a0a0"></div>
<div class="a" style="left:346px;top:172px;width:1015px;height:1px;background:#a0a0a0"></div>
<div class="a" style="left:346px;top:173px;width:1015px;height:1px;background:#fff"></div>
<div class="a" style="left:394px;top:113px;width:1px;height:59px;background:#a0a0a0"></div>
<div class="a" style="left:478px;top:113px;width:1px;height:59px;background:#a0a0a0"></div>
<div class="a" style="left:562px;top:113px;width:1px;height:59px;background:#a0a0a0"></div>
<div class="a" style="left:646px;top:113px;width:1px;height:59px;background:#a0a0a0"></div>
<div class="a" style="left:696px;top:143px;width:1px;height:29px;background:#a0a0a0"></div>
<div class="a" style="left:796px;top:113px;width:1px;height:59px;background:#a0a0a0"></div>
<div class="a" style="left:846px;top:143px;width:1px;height:29px;background:#a0a0a0"></div>
<div class="a" style="left:930px;top:113px;width:1px;height:59px;background:#a0a0a0"></div>
<div class="a" style="left:1014px;top:143px;width:1px;height:29px;background:#a0a0a0"></div>
<div class="a" style="left:1098px;top:113px;width:1px;height:59px;background:#a0a0a0"></div>
<div class="a" style="left:1182px;top:113px;width:1px;height:59px;background:#a0a0a0"></div>
<div class="a" style="left:1266px;top:113px;width:1px;height:59px;background:#a0a0a0"></div>
<div class="a" style="left:1350px;top:113px;width:1px;height:59px;background:#a0a0a0"></div>
<div class="a" style="left:647px;top:142px;width:451px;height:1px;background:#a0a0a0"></div>
<div class="a" style="left:394px;top:113px;width:1px;height:630px;background:#a0a0a0"></div>
<div class="a" style="left:1360px;top:113px;width:1px;height:630px;background:#a0a0a0"></div>
<div class="a" style="left:1361px;top:114px;width:1px;height:629px;background:#fff"></div>
<div class="a" style="left:1362px;top:114px;width:4px;height:629px;background:#f0f0f0"></div>
<div class="t c" style="left:347px;top:138px;width:48px;text-align:center;">№</div>
<div class="t c" style="left:396px;top:138px;width:83px;text-align:center;">Столбец</div>
<div class="t c" style="left:480px;top:138px;width:83px;text-align:center;">Тип данных</div>
<div class="t c" style="left:564px;top:138px;width:83px;text-align:center;">Вид данных</div>
<div class="t c" style="left:648px;top:123px;width:149px;text-align:center;">Пропуски</div>
<div class="t c" style="left:798px;top:123px;width:133px;text-align:center;">Выбросы</div>
<div class="t c" style="left:932px;top:123px;width:167px;text-align:center;">Экстремальные</div>
<div class="t c" style="left:648px;top:153px;width:49px;text-align:center;">Кол-во</div>
<div class="t c" style="left:698px;top:153px;width:99px;text-align:center;">Действие</div>
<div class="t c" style="left:798px;top:153px;width:49px;text-align:center;">Кол-во</div>
<div class="t c" style="left:848px;top:153px;width:83px;text-align:center;">Действие</div>
<div class="t c" style="left:932px;top:153px;width:83px;text-align:center;">Кол-во</div>
<div class="t c" style="left:1016px;top:153px;width:83px;text-align:center;">Действие</div>
<div class="t c" style="left:1100px;top:132px;width:83px;text-align:center;line-height:13px">Кол-во<br>уникальных</div>
<div class="t c" style="left:1184px;top:132px;width:83px;text-align:center;line-height:13px">Качество<br>данных</div>
<div class="t c" style="left:1268px;top:138px;width:83px;text-align:center;">Резюме</div>
<div class="a" style="left:346px;top:173px;width:48px;height:1px;background:#fff"></div>
<div class="a" style="left:346px;top:190px;width:49px;height:1px;background:#a0a0a0"></div>
<div class="a" style="left:396px;top:191px;width:955px;height:1px;background:#bdbdbd"></div>
<div class="t" style="left:364px;top:177px">1</div>
<div class="t" style="left:403px;top:177px">П1</div>
<div class="t n" style="left:483px;top:177px;font-size:11px;font-weight:bold;color:#800000;letter-spacing:0px">ab</div>
<div class="t" style="left:500px;top:177px">Строковый</div>
<div class="a" style="left:568px;top:182px;width:2px;height:2px;background:#000080"></div>
<div class="a" style="left:573px;top:182px;width:2px;height:2px;background:#000080"></div>
<div class="a" style="left:578px;top:182px;width:2px;height:2px;background:#000080"></div>
<div class="t" style="left:585px;top:177px">Дискрет...</div>
<div class="t r" style="left:1099px;top:177px;width:79px;text-align:right">32</div>
<div class="t r" style="left:1183px;top:177px;width:79px;text-align:right">1,0000</div>
<div class="a" style="left:1267px;top:174px;width:84px;height:17px;background:#2e8b57"></div>
<div class="t" style="left:1274px;top:177px;color:#fff">Пригоден</div>
<div class="a" style="left:346px;top:191px;width:48px;height:1px;background:#fff"></div>
<div class="a" style="left:346px;top:208px;width:49px;height:1px;background:#a0a0a0"></div>
<div class="a" style="left:396px;top:209px;width:955px;height:1px;background:#bdbdbd"></div>
<div class="t" style="left:364px;top:195px">2</div>
<div class="t" style="left:403px;top:195px">П2</div>
<div class="t n" style="left:483px;top:195px;font-size:11px;font-weight:bold;color:#800000;letter-spacing:0px">ab</div>
<div class="t" style="left:500px;top:195px">Строковый</div>
<div class="a" style="left:568px;top:200px;width:2px;height:2px;background:#000080"></div>
<div class="a" style="left:573px;top:200px;width:2px;height:2px;background:#000080"></div>
<div class="a" style="left:578px;top:200px;width:2px;height:2px;background:#000080"></div>
<div class="t" style="left:585px;top:195px">Дискрет...</div>
<div class="t r" style="left:1099px;top:195px;width:79px;text-align:right">2</div>
<div class="t r" style="left:1183px;top:195px;width:79px;text-align:right">0,6253</div>
<div class="a" style="left:1267px;top:192px;width:84px;height:17px;background:#2e8b57"></div>
<div class="t" style="left:1274px;top:195px;color:#fff">Пригоден</div>
<div class="a" style="left:346px;top:209px;width:48px;height:1px;background:#fff"></div>
<div class="a" style="left:346px;top:226px;width:49px;height:1px;background:#a0a0a0"></div>
<div class="a" style="left:396px;top:227px;width:955px;height:1px;background:#bdbdbd"></div>
<div class="t" style="left:364px;top:213px">3</div>
<div class="t" style="left:403px;top:213px">П3</div>
<div class="t n" style="left:483px;top:213px;font-size:11px;font-weight:bold;color:#800000;letter-spacing:0px">ab</div>
<div class="t" style="left:500px;top:213px">Строковый</div>
<div class="a" style="left:568px;top:218px;width:2px;height:2px;background:#000080"></div>
<div class="a" style="left:573px;top:218px;width:2px;height:2px;background:#000080"></div>
<div class="a" style="left:578px;top:218px;width:2px;height:2px;background:#000080"></div>
<div class="t" style="left:585px;top:213px">Дискрет...</div>
<div class="t r" style="left:1099px;top:213px;width:79px;text-align:right">2</div>
<div class="t r" style="left:1183px;top:213px;width:79px;text-align:right">0,9972</div>
<div class="a" style="left:1267px;top:210px;width:84px;height:17px;background:#2e8b57"></div>
<div class="t" style="left:1274px;top:213px;color:#fff">Пригоден</div>
<div class="a" style="left:346px;top:227px;width:48px;height:1px;background:#fff"></div>
<div class="a" style="left:346px;top:244px;width:49px;height:1px;background:#a0a0a0"></div>
<div class="a" style="left:396px;top:245px;width:955px;height:1px;background:#bdbdbd"></div>
<div class="t" style="left:364px;top:231px">4</div>
<div class="t" style="left:403px;top:231px">П4</div>
<div class="t n" style="left:483px;top:231px;font-size:11px;font-weight:bold;color:#800000;letter-spacing:0px">ab</div>
<div class="t" style="left:500px;top:231px">Строковый</div>
<div class="a" style="left:568px;top:236px;width:2px;height:2px;background:#000080"></div>
<div class="a" style="left:573px;top:236px;width:2px;height:2px;background:#000080"></div>
<div class="a" style="left:578px;top:236px;width:2px;height:2px;background:#000080"></div>
<div class="t" style="left:585px;top:231px">Дискрет...</div>
<div class="t r" style="left:1099px;top:231px;width:79px;text-align:right">8</div>
<div class="t r" style="left:1183px;top:231px;width:79px;text-align:right">0,8876</div>
<div class="a" style="left:1267px;top:228px;width:84px;height:17px;background:#2e8b57"></div>
<div class="t" style="left:1274px;top:231px;color:#fff">Пригоден</div>
<div class="a" style="left:346px;top:245px;width:48px;height:1px;background:#fff"></div>
<div class="a" style="left:346px;top:262px;width:49px;height:1px;background:#a0a0a0"></div>
<div class="a" style="left:396px;top:263px;width:955px;height:1px;background:#bdbdbd"></div>
<div class="t" style="left:364px;top:249px">5</div>
<div class="t" style="left:403px;top:249px">П5</div>
<div class="t n" style="left:482px;top:249px;font-size:11px;font-weight:bold;color:#0000ff;letter-spacing:0.2px">9.0</div>
<div class="t" style="left:500px;top:249px">Веществ...</div>
<div class="a" style="left:568px;top:254px;width:13px;height:2px;background:#0000ff"></div>
<div class="t" style="left:585px;top:249px">Непреры...</div>
<div class="t r" style="left:1183px;top:249px;width:79px;text-align:right">0,8539</div>
<div class="a" style="left:1267px;top:246px;width:84px;height:17px;background:#2e8b57"></div>
<div class="t" style="left:1274px;top:249px;color:#fff">Пригоден</div>
<div class="a" style="left:346px;top:263px;width:48px;height:1px;background:#fff"></div>
<div class="a" style="left:346px;top:280px;width:49px;height:1px;background:#a0a0a0"></div>
<div class="a" style="left:396px;top:281px;width:955px;height:1px;background:#bdbdbd"></div>
<div class="t" style="left:364px;top:267px">6</div>
<div class="t" style="left:403px;top:267px">П6</div>
<div class="t n" style="left:482px;top:267px;font-size:11px;font-weight:bold;color:#0000ff;letter-spacing:0.2px">9.0</div>
<div class="t" style="left:500px;top:267px">Веществ...</div>
<div class="a" style="left:568px;top:272px;width:2px;height:2px;background:#000080"></div>
<div class="a" style="left:573px;top:272px;width:2px;height:2px;background:#000080"></div>
<div class="a" style="left:578px;top:272px;width:2px;height:2px;background:#000080"></div>
<div class="t" style="left:585px;top:267px">Дискрет...</div>
<div class="t r" style="left:1183px;top:267px;width:79px;text-align:right">0,9697</div>
<div class="a" style="left:1267px;top:264px;width:84px;height:17px;background:#2e8b57"></div>
<div class="t" style="left:1274px;top:267px;color:#fff">Пригоден</div>
<div class="a" style="left:346px;top:281px;width:48px;height:1px;background:#fff"></div>
<div class="a" style="left:346px;top:298px;width:49px;height:1px;background:#a0a0a0"></div>
<div class="a" style="left:396px;top:299px;width:955px;height:1px;background:#bdbdbd"></div>
<div class="t" style="left:364px;top:285px">7</div>
<div class="t" style="left:403px;top:285px">П7</div>
<div class="t n" style="left:483px;top:285px;font-size:11px;font-weight:bold;color:#800000;letter-spacing:0px">ab</div>
<div class="t" style="left:500px;top:285px">Строковый</div>
<div class="a" style="left:568px;top:290px;width:2px;height:2px;background:#000080"></div>
<div class="a" style="left:573px;top:290px;width:2px;height:2px;background:#000080"></div>
<div class="a" style="left:578px;top:290px;width:2px;height:2px;background:#000080"></div>
<div class="t" style="left:585px;top:285px">Дискрет...</div>
<div class="t r" style="left:1099px;top:285px;width:79px;text-align:right">2</div>
<div class="t r" style="left:1183px;top:285px;width:79px;text-align:right">0,9972</div>
<div class="a" style="left:1267px;top:282px;width:84px;height:17px;background:#2e8b57"></div>
<div class="t" style="left:1274px;top:285px;color:#fff">Пригоден</div>
<div class="a" style="left:346px;top:299px;width:48px;height:1px;background:#fff"></div>
<div class="a" style="left:346px;top:316px;width:49px;height:1px;background:#a0a0a0"></div>
<div class="a" style="left:396px;top:317px;width:955px;height:1px;background:#bdbdbd"></div>
<div class="t" style="left:364px;top:303px">8</div>
<div class="t" style="left:403px;top:303px">П8</div>
<div class="t n" style="left:483px;top:303px;font-size:11px;font-weight:bold;color:#800000;letter-spacing:0px">ab</div>
<div class="t" style="left:500px;top:303px">Строковый</div>
<div class="a" style="left:568px;top:308px;width:2px;height:2px;background:#000080"></div>
<div class="a" style="left:573px;top:308px;width:2px;height:2px;background:#000080"></div>
<div class="a" style="left:578px;top:308px;width:2px;height:2px;background:#000080"></div>
<div class="t" style="left:585px;top:303px">Дискрет...</div>
<div class="t r" style="left:1099px;top:303px;width:79px;text-align:right">5</div>
<div class="t r" style="left:1183px;top:303px;width:79px;text-align:right">0,9702</div>
<div class="a" style="left:1267px;top:300px;width:84px;height:17px;background:#2e8b57"></div>
<div class="t" style="left:1274px;top:303px;color:#fff">Пригоден</div>
<div class="a" style="left:346px;top:317px;width:48px;height:1px;background:#fff"></div>
<div class="a" style="left:346px;top:334px;width:49px;height:1px;background:#a0a0a0"></div>
<div class="a" style="left:396px;top:335px;width:955px;height:1px;background:#bdbdbd"></div>
<div class="t" style="left:364px;top:321px">9</div>
<div class="t" style="left:403px;top:321px">П9</div>
<div class="t n" style="left:483px;top:321px;font-size:11px;font-weight:bold;color:#800000;letter-spacing:0px">ab</div>
<div class="t" style="left:500px;top:321px">Строковый</div>
<div class="a" style="left:568px;top:326px;width:2px;height:2px;background:#000080"></div>
<div class="a" style="left:573px;top:326px;width:2px;height:2px;background:#000080"></div>
<div class="a" style="left:578px;top:326px;width:2px;height:2px;background:#000080"></div>
<div class="t" style="left:585px;top:321px">Дискрет...</div>
<div class="t r" style="left:1099px;top:321px;width:79px;text-align:right">5</div>
<div class="t r" style="left:1183px;top:321px;width:79px;text-align:right">0,8917</div>
<div class="a" style="left:1267px;top:318px;width:84px;height:17px;background:#2e8b57"></div>
<div class="t" style="left:1274px;top:321px;color:#fff">Пригоден</div>
<div class="a" style="left:346px;top:335px;width:48px;height:1px;background:#fff"></div>
<div class="a" style="left:346px;top:352px;width:49px;height:1px;background:#a0a0a0"></div>
<div class="a" style="left:396px;top:353px;width:955px;height:1px;background:#bdbdbd"></div>
<svg style="left:351px;top:341px" width="8" height="7" shape-rendering="crispEdges"><rect x="6" y="0" width="2" height="1" fill="#000"/><rect x="5" y="1" width="3" height="1" fill="#000"/><rect x="0" y="2" width="1" height="1" fill="#000"/><rect x="4" y="2" width="3" height="1" fill="#000"/><rect x="0" y="3" width="2" height="1" fill="#000"/><rect x="3" y="3" width="3" height="1" fill="#000"/><rect x="0" y="4" width="5" height="1" fill="#000"/><rect x="1" y="5" width="3" height="1" fill="#000"/><rect x="2" y="6" width="1" height="1" fill="#000"/></svg>
<div class="t" style="left:364px;top:339px">10</div>
<div class="t" style="left:403px;top:339px">П10</div>
<div class="t n" style="left:483px;top:339px;font-size:11px;font-weight:bold;color:#800000;letter-spacing:0px">ab</div>
<div class="t" style="left:500px;top:339px">Строковый</div>
<div class="a" style="left:568px;top:344px;width:2px;height:2px;background:#000080"></div>
<div class="a" style="left:573px;top:344px;width:2px;height:2px;background:#000080"></div>
<div class="a" style="left:578px;top:344px;width:2px;height:2px;background:#000080"></div>
<div class="t" style="left:585px;top:339px">Дискрет...</div>
<div class="t r" style="left:1099px;top:339px;width:79px;text-align:right">5</div>
<div class="t r" style="left:1183px;top:339px;width:79px;text-align:right">0,6648</div>
<div class="a" style="left:1267px;top:336px;width:84px;height:17px;background:#fff39b"></div>
<div class="t" style="left:1274px;top:339px">Предобрабо...</div>
<div class="a" style="left:932px;top:336px;width:83px;height:17px;background:#fff39b"></div>
<div class="t r" style="left:930px;top:339px;width:79px;text-align:right">1</div>
<div class="a" style="left:1016px;top:336px;width:84px;height:17px;background:#fff39b;border:1px dotted #000080"></div>
<div class="t" style="left:1022px;top:339px">Заменять н...</div>
<div class="a" style="left:346px;top:353px;width:48px;height:1px;background:#fff"></div>
<div class="a" style="left:346px;top:370px;width:49px;height:1px;background:#a0a0a0"></div>
<div class="a" style="left:396px;top:371px;width:955px;height:1px;background:#bdbdbd"></div>
<div class="t" style="left:364px;top:357px">11</div>
<div class="t" style="left:403px;top:357px">П11</div>
<div class="t n" style="left:482px;top:357px;font-size:11px;font-weight:bold;color:#0000ff;letter-spacing:0.2px">9.0</div>
<div class="t" style="left:500px;top:357px">Веществ...</div>
<div class="a" style="left:568px;top:362px;width:13px;height:2px;background:#0000ff"></div>
<div class="t" style="left:585px;top:357px">Непреры...</div>
<div class="t r" style="left:1183px;top:357px;width:79px;text-align:right">0,8013</div>
<div class="a" style="left:1267px;top:354px;width:84px;height:17px;background:#2e8b57"></div>
<div class="t" style="left:1274px;top:357px;color:#fff">Пригоден</div>
<div class="a" style="left:346px;top:371px;width:48px;height:1px;background:#fff"></div>
<div class="a" style="left:346px;top:388px;width:49px;height:1px;background:#a0a0a0"></div>
<div class="a" style="left:396px;top:389px;width:955px;height:1px;background:#bdbdbd"></div>
<div class="t" style="left:364px;top:375px">12</div>
<div class="t" style="left:403px;top:375px">П12</div>
<div class="t n" style="left:482px;top:375px;font-size:11px;font-weight:bold;color:#0000ff;letter-spacing:0.2px">9.0</div>
<div class="t" style="left:500px;top:375px">Веществ...</div>
<div class="a" style="left:568px;top:380px;width:13px;height:2px;background:#0000ff"></div>
<div class="t" style="left:585px;top:375px">Непреры...</div>
<div class="t r" style="left:1183px;top:375px;width:79px;text-align:right">0,8303</div>
<div class="a" style="left:1267px;top:372px;width:84px;height:17px;background:#2e8b57"></div>
<div class="t" style="left:1274px;top:375px;color:#fff">Пригоден</div>
<div class="a" style="left:346px;top:389px;width:48px;height:1px;background:#fff"></div>
<div class="a" style="left:346px;top:406px;width:49px;height:1px;background:#a0a0a0"></div>
<div class="a" style="left:396px;top:407px;width:955px;height:1px;background:#bdbdbd"></div>
<div class="t" style="left:364px;top:393px">13</div>
<div class="t" style="left:403px;top:393px">П13</div>
<div class="t n" style="left:482px;top:393px;font-size:11px;font-weight:bold;color:#0000ff;letter-spacing:0.2px">9.0</div>
<div class="t" style="left:500px;top:393px">Веществ...</div>
<div class="a" style="left:568px;top:398px;width:13px;height:2px;background:#0000ff"></div>
<div class="t" style="left:585px;top:393px">Непреры...</div>
<div class="t r" style="left:1183px;top:393px;width:79px;text-align:right">0,8950</div>
<div class="a" style="left:1267px;top:390px;width:84px;height:17px;background:#2e8b57"></div>
<div class="t" style="left:1274px;top:393px;color:#fff">Пригоден</div>
<div class="a" style="left:346px;top:407px;width:48px;height:1px;background:#fff"></div>
<div class="a" style="left:346px;top:424px;width:49px;height:1px;background:#a0a0a0"></div>
<div class="a" style="left:396px;top:425px;width:955px;height:1px;background:#bdbdbd"></div>
<div class="t" style="left:364px;top:411px">14</div>
<div class="t" style="left:403px;top:411px">П14</div>
<div class="t n" style="left:483px;top:411px;font-size:11px;font-weight:bold;color:#800000;letter-spacing:0px">ab</div>
<div class="t" style="left:500px;top:411px">Строковый</div>
<div class="a" style="left:568px;top:416px;width:2px;height:2px;background:#000080"></div>
<div class="a" style="left:573px;top:416px;width:2px;height:2px;background:#000080"></div>
<div class="a" style="left:578px;top:416px;width:2px;height:2px;background:#000080"></div>
<div class="t" style="left:585px;top:411px">Дискрет...</div>
<div class="t r" style="left:1099px;top:411px;width:79px;text-align:right">5</div>
<div class="t r" style="left:1183px;top:411px;width:79px;text-align:right">0,9180</div>
<div class="a" style="left:1267px;top:408px;width:84px;height:17px;background:#2e8b57"></div>
<div class="t" style="left:1274px;top:411px;color:#fff">Пригоден</div>
<div class="a" style="left:346px;top:425px;width:48px;height:1px;background:#fff"></div>
<div class="a" style="left:346px;top:442px;width:49px;height:1px;background:#a0a0a0"></div>
<div class="a" style="left:396px;top:443px;width:955px;height:1px;background:#bdbdbd"></div>
<div class="t" style="left:364px;top:429px">15</div>
<div class="t" style="left:403px;top:429px">П15</div>
<div class="t n" style="left:483px;top:429px;font-size:11px;font-weight:bold;color:#800000;letter-spacing:0px">ab</div>
<div class="t" style="left:500px;top:429px">Строковый</div>
<div class="a" style="left:568px;top:434px;width:2px;height:2px;background:#000080"></div>
<div class="a" style="left:573px;top:434px;width:2px;height:2px;background:#000080"></div>
<div class="a" style="left:578px;top:434px;width:2px;height:2px;background:#000080"></div>
<div class="t" style="left:585px;top:429px">Дискрет...</div>
<div class="t r" style="left:1099px;top:429px;width:79px;text-align:right">2</div>
<div class="t r" style="left:1183px;top:429px;width:79px;text-align:right">0,9745</div>
<div class="a" style="left:1267px;top:426px;width:84px;height:17px;background:#2e8b57"></div>
<div class="t" style="left:1274px;top:429px;color:#fff">Пригоден</div>
<div class="a" style="left:479px;top:174px;width:1px;height:270px;background:#bdbdbd"></div>
<div class="a" style="left:563px;top:174px;width:1px;height:270px;background:#bdbdbd"></div>
<div class="a" style="left:647px;top:174px;width:1px;height:270px;background:#bdbdbd"></div>
<div class="a" style="left:697px;top:174px;width:1px;height:270px;background:#bdbdbd"></div>
<div class="a" style="left:797px;top:174px;width:1px;height:270px;background:#bdbdbd"></div>
<div class="a" style="left:847px;top:174px;width:1px;height:270px;background:#bdbdbd"></div>
<div class="a" style="left:931px;top:174px;width:1px;height:270px;background:#bdbdbd"></div>
<div class="a" style="left:1015px;top:174px;width:1px;height:270px;background:#bdbdbd"></div>
<div class="a" style="left:1099px;top:174px;width:1px;height:270px;background:#bdbdbd"></div>
<div class="a" style="left:1183px;top:174px;width:1px;height:270px;background:#bdbdbd"></div>
<div class="a" style="left:1267px;top:174px;width:1px;height:270px;background:#bdbdbd"></div>
<div class="a" style="left:1351px;top:174px;width:1px;height:270px;background:#bdbdbd"></div>
<div class="a" style="left:346px;top:743px;width:1019px;height:1px;background:#a0a0a0"></div>
<div class="a" style="left:347px;top:745px;width:1017px;height:1px;background:#a0a0a0"></div>
<div class="a" style="left:347px;top:745px;width:1px;height:3px;background:#a0a0a0"></div>
<div class="a" style="left:1363px;top:745px;width:1px;height:3px;background:#a0a0a0"></div>
<div class="a" style="left:1364px;top:743px;width:1px;height:5px;background:#a0a0a0"></div>
<div class="a" style="left:340px;top:370px;width:6px;height:77px;background:#fff;border:1px solid #8c8c8c"></div>
<div class="a" style="left:342px;top:372px;width:2px;height:2px;background:#8c8c8c"></div>
<div class="a" style="left:342px;top:376px;width:2px;height:2px;background:#8c8c8c"></div>
<div class="a" style="left:342px;top:380px;width:2px;height:2px;background:#8c8c8c"></div>
<div class="a" style="left:342px;top:384px;width:2px;height:2px;background:#8c8c8c"></div>
<div class="a" style="left:342px;top:388px;width:2px;height:2px;background:#8c8c8c"></div>
<div class="a" style="left:342px;top:392px;width:2px;height:2px;background:#8c8c8c"></div>
<div class="a" style="left:342px;top:396px;width:2px;height:2px;background:#8c8c8c"></div>
<div class="a" style="left:342px;top:400px;width:2px;height:2px;background:#8c8c8c"></div>
<div class="a" style="left:342px;top:416px;width:2px;height:2px;background:#8c8c8c"></div>
<div class="a" style="left:342px;top:420px;width:2px;height:2px;background:#8c8c8c"></div>
<div class="a" style="left:342px;top:424px;width:2px;height:2px;background:#8c8c8c"></div>
<div class="a" style="left:342px;top:428px;width:2px;height:2px;background:#8c8c8c"></div>
<div class="a" style="left:342px;top:432px;width:2px;height:2px;background:#8c8c8c"></div>
<div class="a" style="left:342px;top:436px;width:2px;height:2px;background:#8c8c8c"></div>
<div class="a" style="left:342px;top:440px;width:2px;height:2px;background:#8c8c8c"></div>
<div class="a" style="left:340px;top:403px;width:6px;height:10px;background:#8c8c8c"></div>
<svg style="left:341px;top:404px" width="5" height="8"><path d="M4.5 0.5 L1 4 L4.5 7.5" fill="none" stroke="#fff" stroke-width="1.3"/></svg>
<div class="a" style="left:1360px;top:390px;width:6px;height:81px;background:#fff;border:1px solid #8c8c8c"></div>
<div class="a" style="left:1362px;top:392px;width:2px;height:2px;background:#8c8c8c"></div>
<div class="a" style="left:1362px;top:396px;width:2px;height:2px;background:#8c8c8c"></div>
<div class="a" style="left:1362px;top:400px;width:2px;height:2px;background:#8c8c8c"></div>
<div class="a" style="left:1362px;top:404px;width:2px;height:2px;background:#8c8c8c"></div>
<div class="a" style="left:1362px;top:408px;width:2px;height:2px;background:#8c8c8c"></div>
<div class="a" style="left:1362px;top:412px;width:2px;height:2px;background:#8c8c8c"></div>
<div class="a" style="left:1362px;top:416px;width:2px;height:2px;background:#8c8c8c"></div>
<div class="a" style="left:1362px;top:420px;width:2px;height:2px;background:#8c8c8c"></div>
<div class="a" style="left:1362px;top:440px;width:2px;height:2px;background:#8c8c8c"></div>
<div class="a" style="left:1362px;top:444px;width:2px;height:2px;background:#8c8c8c"></div>
<div class="a" style="left:1362px;top:448px;width:2px;height:2px;background:#8c8c8c"></div>
<div class="a" style="left:1362px;top:452px;width:2px;height:2px;background:#8c8c8c"></div>
<div class="a" style="left:1362px;top:456px;width:2px;height:2px;background:#8c8c8c"></div>
<div class="a" style="left:1362px;top:460px;width:2px;height:2px;background:#8c8c8c"></div>
<div class="a" style="left:1362px;top:464px;width:2px;height:2px;background:#8c8c8c"></div>
<div class="a" style="left:1360px;top:425px;width:6px;height:10px;background:#8c8c8c"></div>
<svg style="left:1361px;top:426px" width="5" height="8"><path d="M4.5 0.5 L1 4 L4.5 7.5" fill="none" stroke="#fff" stroke-width="1.3"/></svg>
<div class="a" style="left:131px;top:743px;width:77px;height:6px;background:#fff;border:1px solid #8c8c8c"></div>
<div class="a" style="left:133px;top:745px;width:2px;height:2px;background:#8c8c8c"></div>
<div class="a" style="left:137px;top:745px;width:2px;height:2px;background:#8c8c8c"></div>
<div class="a" style="left:141px;top:745px;width:2px;height:2px;background:#8c8c8c"></div>
<div class="a" style="left:145px;top:745px;width:2px;height:2px;background:#8c8c8c"></div>
<div class="a" style="left:149px;top:745px;width:2px;height:2px;background:#8c8c8c"></div>
<div class="a" style="left:153px;top:745px;width:2px;height:2px;background:#8c8c8c"></div>
<div class="a" style="left:157px;top:745px;width:2px;height:2px;background:#8c8c8c"></div>
<div class="a" style="left:161px;top:745px;width:2px;height:2px;background:#8c8c8c"></div>
<div class="a" style="left:177px;top:745px;width:2px;height:2px;background:#8c8c8c"></div>
<div class="a" style="left:181px;top:745px;width:2px;height:2px;background:#8c8c8c"></div>
<div class="a" style="left:185px;top:745px;width:2px;height:2px;background:#8c8c8c"></div>
<div class="a" style="left:189px;top:745px;width:2px;height:2px;background:#8c8c8c"></div>
<div class="a" style="left:193px;top:745px;width:2px;height:2px;background:#8c8c8c"></div>
<div class="a" style="left:197px;top:745px;width:2px;height:2px;background:#8c8c8c"></div>
<div class="a" style="left:201px;top:745px;width:2px;height:2px;background:#8c8c8c"></div>
<div class="a" style="left:164px;top:743px;width:10px;height:6px;background:#8c8c8c"></div>
<svg style="left:165px;top:744px" width="8" height="5"><path d="M0.5 4.5 L4 1 L7.5 4.5" fill="none" stroke="#fff" stroke-width="1.3"/></svg>
<div class="a" style="left:819px;top:746px;width:77px;height:6px;background:#fff;border:1px solid #8c8c8c"></div>
<div class="a" style="left:821px;top:748px;width:2px;height:2px;background:#8c8c8c"></div>
<div class="a" style="left:825px;top:748px;width:2px;height:2px;background:#8c8c8c"></div>
<div class="a" style="left:829px;top:748px;width:2px;height:2px;background:#8c8c8c"></div>
<div class="a" style="left:833px;top:748px;width:2px;height:2px;background:#8c8c8c"></div>
<div class="a" style="left:837px;top:748px;width:2px;height:2px;background:#8c8c8c"></div>
<div class="a" style="left:841px;top:748px;width:2px;height:2px;background:#8c8c8c"></div>
<div class="a" style="left:845px;top:748px;width:2px;height:2px;background:#8c8c8c"></div>
<div class="a" style="left:849px;top:748px;width:2px;height:2px;background:#8c8c8c"></div>
<div class="a" style="left:865px;top:748px;width:2px;height:2px;background:#8c8c8c"></div>
<div class="a" style="left:869px;top:748px;width:2px;height:2px;background:#8c8c8c"></div>
<div class="a" style="left:873px;top:748px;width:2px;height:2px;background:#8c8c8c"></div>
<div class="a" style="left:877px;top:748px;width:2px;height:2px;background:#8c8c8c"></div>
<div class="a" style="left:881px;top:748px;width:2px;height:2px;background:#8c8c8c"></div>
<div class="a" style="left:885px;top:748px;width:2px;height:2px;background:#8c8c8c"></div>
<div class="a" style="left:889px;top:748px;width:2px;height:2px;background:#8c8c8c"></div>
<div class="a" style="left:852px;top:746px;width:10px;height:6px;background:#8c8c8c"></div>
<svg style="left:853px;top:747px" width="8" height="5"><path d="M0.5 4.5 L4 1 L7.5 4.5" fill="none" stroke="#fff" stroke-width="1.3"/></svg>
<div class="a" style="left:0;top:748px;width:131px;height:1px;background:#fff"></div>
<div class="a" style="left:208px;top:748px;width:132px;height:1px;background:#fff"></div>
<div class="a" style="left:131px;top:749px;width:78px;height:1px;background:#f8f8f8"></div>
<div class="a" style="left:340px;top:749px;width:1026px;height:1px;background:#f0f0f0"></div>
<div class="a" style="left:0;top:750px;width:1366px;height:16px;background:#f0f0f0"></div>
<div class="a" style="left:1197px;top:751px;width:1px;height:15px;background:#c8c8c8"></div>
<div class="a" style="left:1347px;top:751px;width:1px;height:15px;background:#c8c8c8"></div>
<div class="a" style="left:0;top:766px;width:1366px;height:1px;background:#9f7f85"></div>
<div class="a" style="left:0;top:767px;width:1366px;height:1px;background:#b39498"></div>
<div class="a" style="left:51px;top:766px;width:59px;height:2px;background:#dcc4c8;border-top:1px solid #8a7a7d;border-left:1px solid #8a7a7d;border-right:1px solid #8a7a7d"></div>
<div class="a" style="left:237px;top:766px;width:59px;height:2px;background:#dcc4c8;border-top:1px solid #8a7a7d;border-left:1px solid #8a7a7d;border-right:1px solid #8a7a7d"></div>
<div class="a" style="left:298px;top:766px;width:59px;height:2px;background:#dcc4c8;border-top:1px solid #8a7a7d;border-left:1px solid #8a7a7d;border-right:1px solid #8a7a7d"></div>
<div class="a" style="left:361px;top:766px;width:59px;height:2px;background:#dcc4c8;border-top:1px solid #8a7a7d;border-left:1px solid #8a7a7d;border-right:1px solid #8a7a7d"></div>
<div class="a" style="left:423px;top:766px;width:60px;height:2px;background:#dcc4c8;border-top:1px solid #8a7a7d;border-left:1px solid #8a7a7d;border-right:1px solid #8a7a7d"></div>
<div class="a" style="left:485px;top:766px;width:60px;height:2px;background:#f4eeef;border-top:1px solid #8a7a7d;border-left:1px solid #8a7a7d;border-right:1px solid #8a7a7d"></div>
<div class="a" style="left:547px;top:766px;width:60px;height:2px;background:#dcc4c8;border-top:1px solid #8a7a7d;border-left:1px solid #8a7a7d;border-right:1px solid #8a7a7d"></div>
</body></html>
